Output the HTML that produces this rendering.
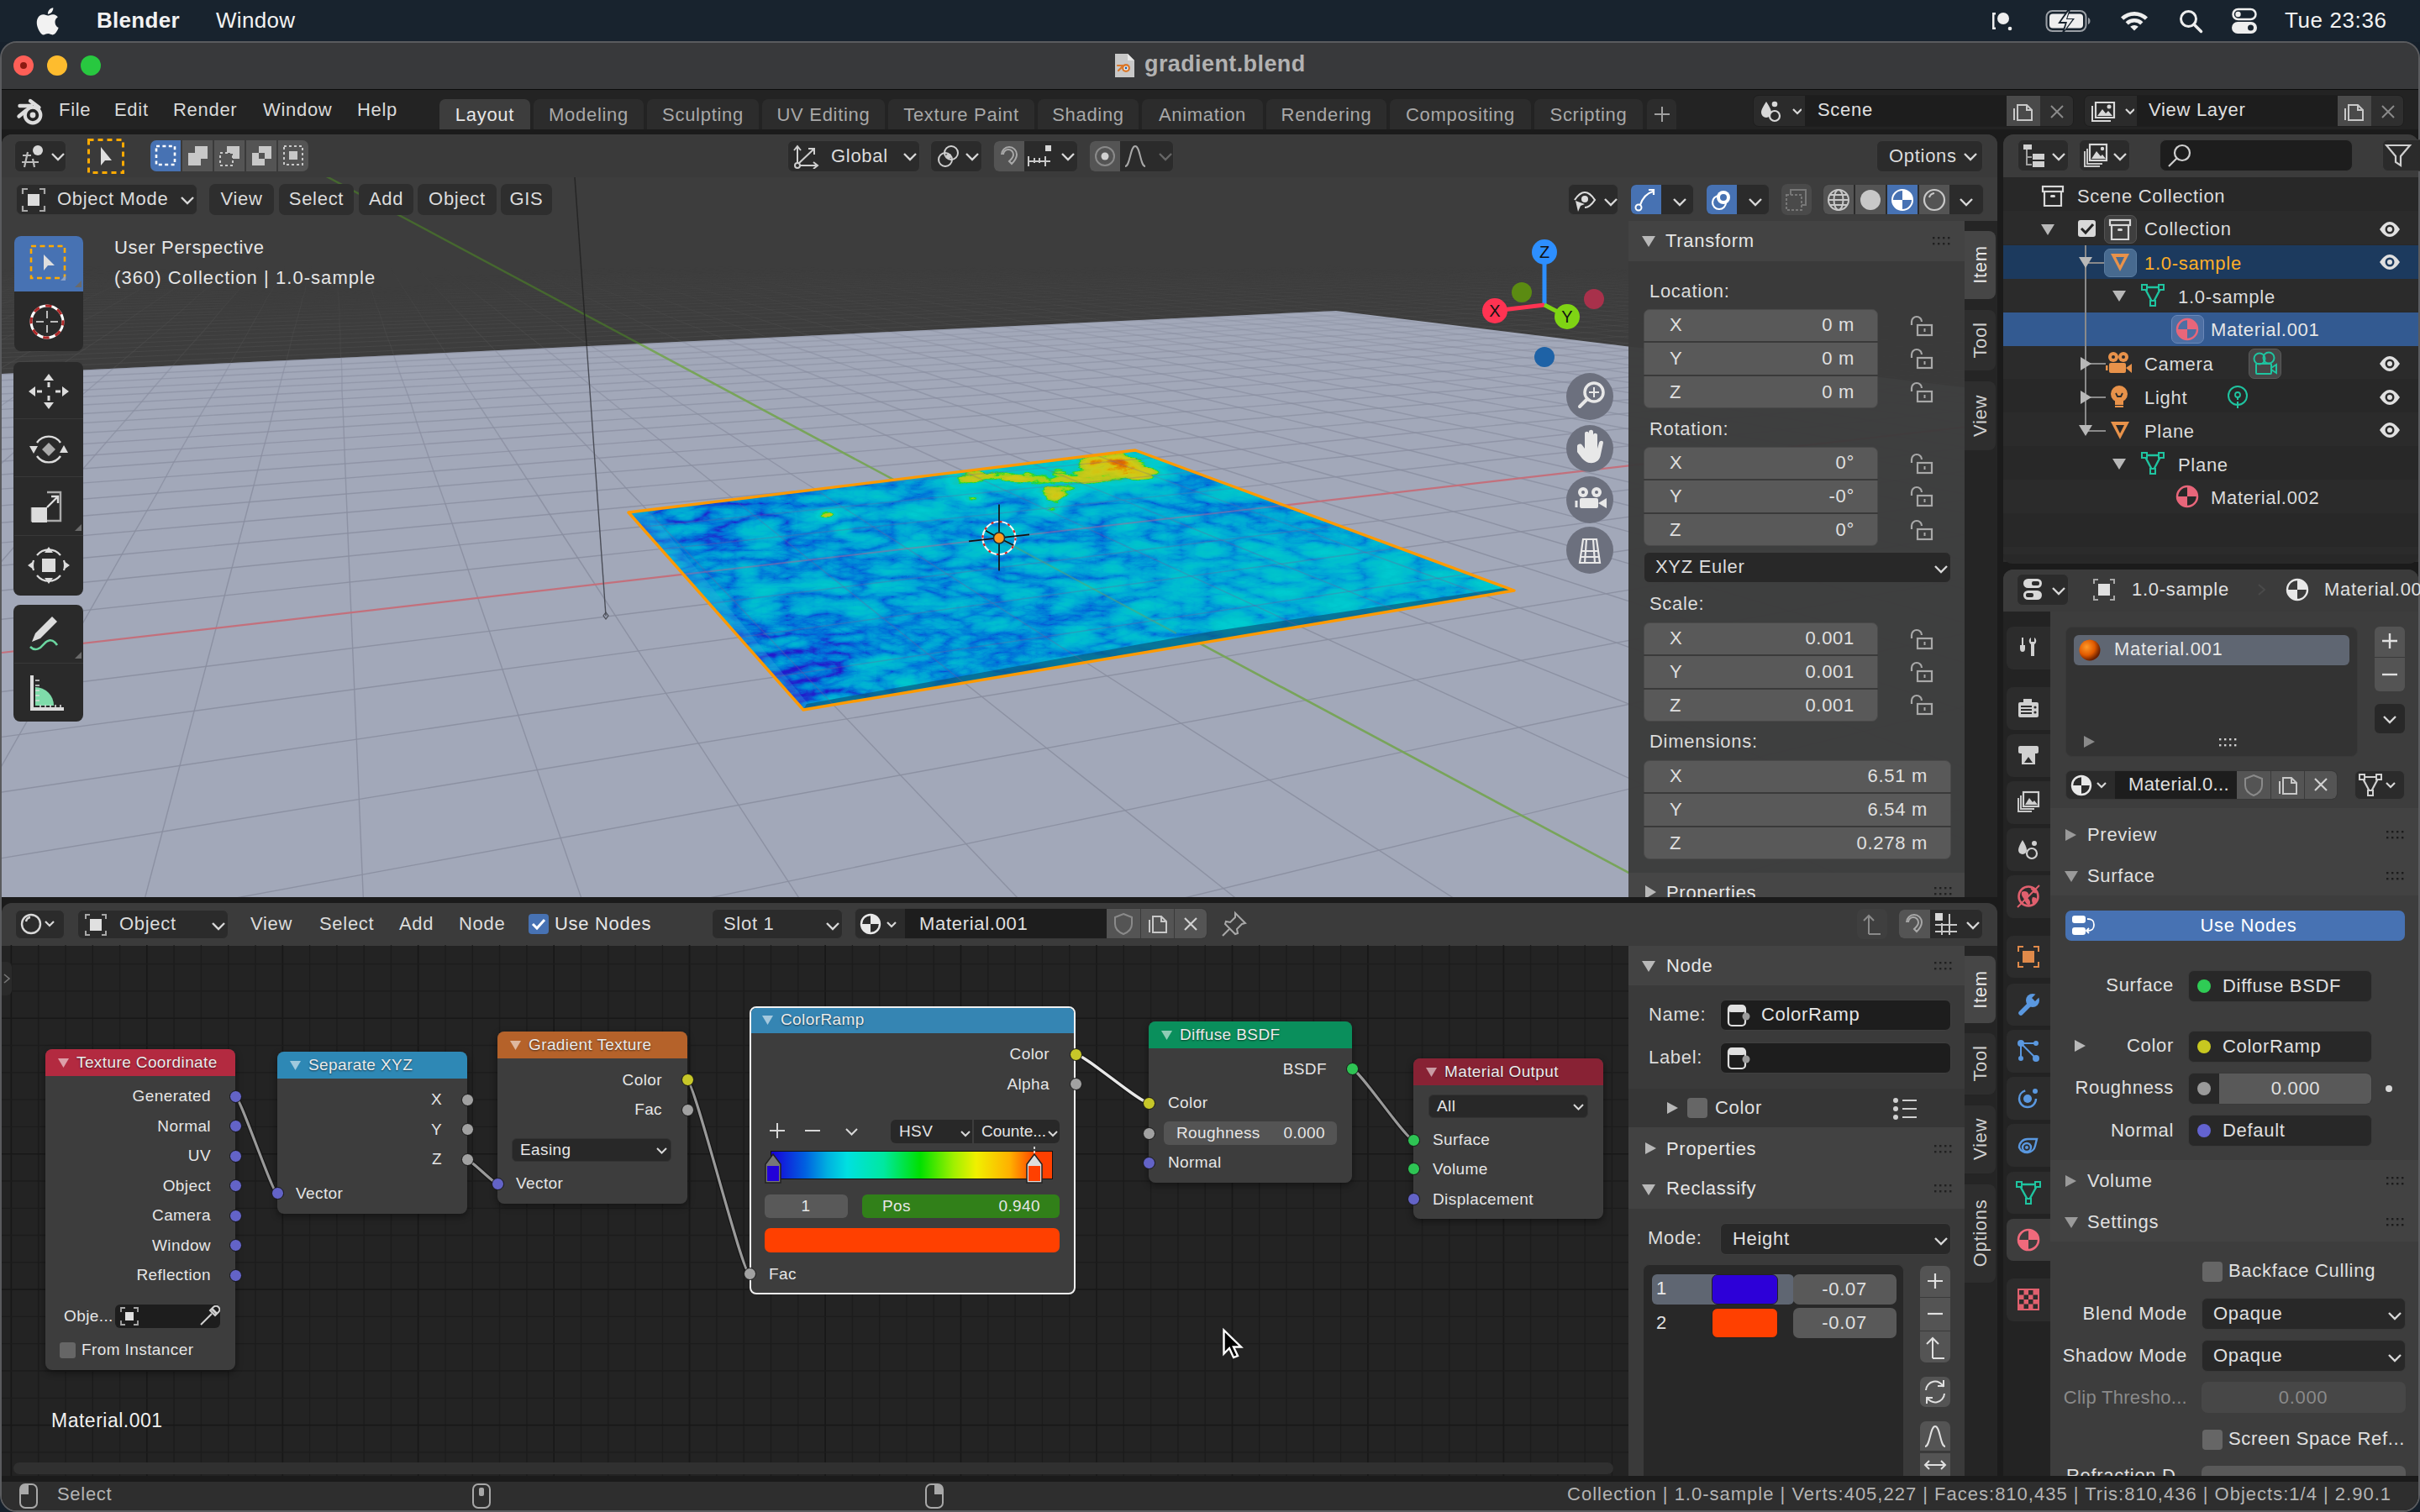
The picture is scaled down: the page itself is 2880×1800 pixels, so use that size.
<!DOCTYPE html><html><head><meta charset="utf-8"><style>
html,body{margin:0;padding:0;width:2880px;height:1800px;overflow:hidden;background:#16202b;}
body{position:relative;font-family:"Liberation Sans", sans-serif;}
div{position:absolute;box-sizing:border-box;}
.tx{white-space:nowrap;}
</style></head><body>
<div style="left:0px;top:0px;width:2880px;height:50px;background:#18232e;"></div>
<svg style="position:absolute;left:42px;top:6px;" width="32" height="38" viewBox="0 0 30 38"><path fill="#f2f2f2" d="M22.5 20.3c0-4 3.3-5.9 3.4-6-1.9-2.7-4.8-3.1-5.8-3.1-2.5-.3-4.8 1.4-6.1 1.4-1.3 0-3.2-1.4-5.3-1.3-2.7 0-5.2 1.6-6.6 4-2.8 4.9-.7 12.1 2 16.1 1.3 1.9 2.9 4.1 5 4 2-.1 2.8-1.3 5.2-1.3 2.4 0 3.1 1.3 5.2 1.3 2.2 0 3.6-2 4.9-3.9 1.5-2.2 2.2-4.4 2.2-4.5-.1 0-4.1-1.6-4.1-6.7zM18.6 8.5c1.1-1.4 1.9-3.3 1.7-5.2-1.6.1-3.6 1.1-4.7 2.4-1 1.2-1.9 3.1-1.7 5 1.8.1 3.6-.9 4.7-2.2z"/></svg>
<div class="tx" style="left:115px;top:4.0px;height:40px;line-height:40px;font-size:26px;color:#f2f2f2;letter-spacing:0.3px;font-weight:bold;">Blender</div>
<div class="tx" style="left:257px;top:4.0px;height:40px;line-height:40px;font-size:26px;color:#f2f2f2;letter-spacing:0.3px;">Window</div>
<svg style="position:absolute;left:2368px;top:10px;" width="30" height="30" viewBox="0 0 30 30"><path d="M3 5h4v2.5H5.5v15H7V25H3z" fill="#eee"/><circle cx="16" cy="12" r="7" fill="#eee"/><circle cx="24" cy="24" r="2.3" fill="#eee"/></svg>
<svg style="position:absolute;left:2434px;top:10px;" width="56" height="30" viewBox="0 0 56 30"><rect x="1.5" y="3" width="47" height="24" rx="7" fill="none" stroke="#9a9fa5" stroke-width="2"/><rect x="5" y="6.5" width="40" height="17" rx="4" fill="#eee"/><path d="M51 11v8c1.5-.5 2.5-2 2.5-4s-1-3.5-2.5-4z" fill="#9a9fa5"/><path d="M28 1 17 17h8l-4 12 12-16h-8l4-12z" fill="#18232e" stroke="#18232e" stroke-width="2"/><path d="M28 3 18.5 16h7.5l-3 10 9.5-13h-7.5z" fill="#eee"/></svg>
<svg style="position:absolute;left:2522px;top:10px;" width="36" height="30" viewBox="0 0 36 30"><path d="M2 10.5a23 23 0 0 1 32 0l-3.2 3.3a18.5 18.5 0 0 0-25.6 0z" fill="#eee"/><path d="M7.6 16.2a15 15 0 0 1 20.8 0l-3.2 3.2a10.5 10.5 0 0 0-14.4 0z" fill="#eee"/><path d="M13.2 21.8a7 7 0 0 1 9.6 0L18 26.6z" fill="#eee"/></svg>
<svg style="position:absolute;left:2592px;top:10px;" width="32" height="32" viewBox="0 0 32 32"><circle cx="12.5" cy="12.5" r="9" fill="none" stroke="#eee" stroke-width="3"/><path d="M19 19l8.5 8.5" stroke="#eee" stroke-width="3.5" stroke-linecap="round"/></svg>
<svg style="position:absolute;left:2656px;top:9px;" width="32" height="32" viewBox="0 0 32 32"><rect x="1.5" y="2" width="27" height="12" rx="6" fill="none" stroke="#eee" stroke-width="2.5"/><circle cx="7.5" cy="8" r="3.2" fill="#eee"/><rect x="0" y="17" width="30" height="14" rx="7" fill="#eee"/><circle cx="22.5" cy="24" r="3.5" fill="#18232e"/></svg>
<div class="tx" style="left:2719px;top:4.0px;height:40px;line-height:40px;font-size:26px;color:#f2f2f2;letter-spacing:0.6px;">Tue 23:36</div>
<div style="left:0px;top:49px;width:2880px;height:1751px;background:#3a3b3d;border-radius:20px 20px 20px 20px;border:2px solid #5a5b5e;"></div>
<div style="left:2px;top:51px;width:2876px;height:55px;background:#38393b;border-radius:18px 18px 0 0;"></div>
<div style="left:16px;top:66px;width:24px;height:24px;background:#fe5f57;border-radius:12px;"></div>
<div style="left:24px;top:74px;width:8px;height:8px;background:#8c1a10;border-radius:4px;"></div>
<div style="left:56px;top:66px;width:24px;height:24px;background:#febc2e;border-radius:12px;"></div>
<div style="left:96px;top:66px;width:24px;height:24px;background:#28c840;border-radius:12px;"></div>
<svg style="position:absolute;left:1327px;top:64px;" width="23" height="28" viewBox="0 0 23 28"><path d="M0 0h15l8 8v20H0z" fill="#c8c8c8"/><path d="M15 0v8h8z" fill="#e8e8e8"/><circle cx="13" cy="17" r="5" fill="#d9782b"/><circle cx="13" cy="17" r="2.6" fill="#fff"/><circle cx="13" cy="17" r="1.4" fill="#1e5aa0"/><path d="M3 14h8M4 20l5-5" stroke="#d9782b" stroke-width="2.2" stroke-linecap="round"/></svg>
<div class="tx" style="left:1362px;top:56.0px;height:40px;line-height:40px;font-size:27px;color:#b2b2b2;letter-spacing:0.4px;font-weight:bold;">gradient.blend</div>
<div style="left:2px;top:106px;width:2876px;height:1px;background:#0d0d0d;"></div>
<div style="left:2px;top:107px;width:2876px;height:47px;background:#232323;"></div>
<div style="left:2px;top:154px;width:2876px;height:1644px;background:#1b1b1b;border-radius:0 0 18px 18px;"></div>
<svg style="position:absolute;left:15px;top:112px;" width="40" height="40" viewBox="15 112 40 40"><circle cx="39" cy="137" r="9.3" fill="none" stroke="#dcdcdc" stroke-width="4.2"/><circle cx="39" cy="137" r="3.4" fill="#dcdcdc"/><path d="M36 120L46.5 128M23.5 126H37M22.5 138.5L31 131.5" stroke="#dcdcdc" stroke-width="4.4" stroke-linecap="round"/></svg>
<div class="tx" style="left:70px;top:111.0px;height:40px;line-height:40px;font-size:22px;color:#dadada;letter-spacing:0.7px;">File</div>
<div class="tx" style="left:136px;top:111.0px;height:40px;line-height:40px;font-size:22px;color:#dadada;letter-spacing:0.7px;">Edit</div>
<div class="tx" style="left:206px;top:111.0px;height:40px;line-height:40px;font-size:22px;color:#dadada;letter-spacing:0.7px;">Render</div>
<div class="tx" style="left:313px;top:111.0px;height:40px;line-height:40px;font-size:22px;color:#dadada;letter-spacing:0.7px;">Window</div>
<div class="tx" style="left:425px;top:111.0px;height:40px;line-height:40px;font-size:22px;color:#dadada;letter-spacing:0.7px;">Help</div>
<div style="left:523px;top:118px;width:108px;height:36px;background:#3d3d3d;border-radius:7px 7px 0 0;"></div>
<div class="tx" style="left:-423.0px;top:117.0px;height:40px;line-height:40px;font-size:22px;color:#e6e6e6;letter-spacing:0.7px;width:2000px;text-align:center;">Layout</div>
<div style="left:635px;top:118px;width:131px;height:36px;background:#2c2c2c;border-radius:7px 7px 0 0;"></div>
<div class="tx" style="left:-299.5px;top:117.0px;height:40px;line-height:40px;font-size:22px;color:#a8a8a8;letter-spacing:0.7px;width:2000px;text-align:center;">Modeling</div>
<div style="left:770px;top:118px;width:133px;height:36px;background:#2c2c2c;border-radius:7px 7px 0 0;"></div>
<div class="tx" style="left:-163.5px;top:117.0px;height:40px;line-height:40px;font-size:22px;color:#a8a8a8;letter-spacing:0.7px;width:2000px;text-align:center;">Sculpting</div>
<div style="left:907px;top:118px;width:146px;height:36px;background:#2c2c2c;border-radius:7px 7px 0 0;"></div>
<div class="tx" style="left:-20.0px;top:117.0px;height:40px;line-height:40px;font-size:22px;color:#a8a8a8;letter-spacing:0.7px;width:2000px;text-align:center;">UV Editing</div>
<div style="left:1057px;top:118px;width:174px;height:36px;background:#2c2c2c;border-radius:7px 7px 0 0;"></div>
<div class="tx" style="left:144.0px;top:117.0px;height:40px;line-height:40px;font-size:22px;color:#a8a8a8;letter-spacing:0.7px;width:2000px;text-align:center;">Texture Paint</div>
<div style="left:1235px;top:118px;width:120px;height:36px;background:#2c2c2c;border-radius:7px 7px 0 0;"></div>
<div class="tx" style="left:295.0px;top:117.0px;height:40px;line-height:40px;font-size:22px;color:#a8a8a8;letter-spacing:0.7px;width:2000px;text-align:center;">Shading</div>
<div style="left:1359px;top:118px;width:144px;height:36px;background:#2c2c2c;border-radius:7px 7px 0 0;"></div>
<div class="tx" style="left:431.0px;top:117.0px;height:40px;line-height:40px;font-size:22px;color:#a8a8a8;letter-spacing:0.7px;width:2000px;text-align:center;">Animation</div>
<div style="left:1507px;top:118px;width:143px;height:36px;background:#2c2c2c;border-radius:7px 7px 0 0;"></div>
<div class="tx" style="left:578.5px;top:117.0px;height:40px;line-height:40px;font-size:22px;color:#a8a8a8;letter-spacing:0.7px;width:2000px;text-align:center;">Rendering</div>
<div style="left:1654px;top:118px;width:168px;height:36px;background:#2c2c2c;border-radius:7px 7px 0 0;"></div>
<div class="tx" style="left:738.0px;top:117.0px;height:40px;line-height:40px;font-size:22px;color:#a8a8a8;letter-spacing:0.7px;width:2000px;text-align:center;">Compositing</div>
<div style="left:1826px;top:118px;width:129px;height:36px;background:#2c2c2c;border-radius:7px 7px 0 0;"></div>
<div class="tx" style="left:890.5px;top:117.0px;height:40px;line-height:40px;font-size:22px;color:#a8a8a8;letter-spacing:0.7px;width:2000px;text-align:center;">Scripting</div>
<div style="left:1960px;top:118px;width:35px;height:36px;background:#2c2c2c;border-radius:7px 7px 0 0;"></div>
<svg style="position:absolute;left:1966px;top:124px;" width="24" height="24" viewBox="0 0 24 24"><path d="M12 3v18M3 12h18" stroke="#a0a0a0" stroke-width="2"/></svg>
<div style="left:2086px;top:113px;width:382px;height:38px;background:#2b2b2b;border-radius:7px;border:1px solid #1e1e1e;"></div>
<div style="left:2148px;top:114px;width:240px;height:36px;background:#1d1d1d;"></div>
<div style="left:2388px;top:114px;width:40px;height:36px;background:#4a4a4a;"></div>
<div style="left:2428px;top:114px;width:39px;height:36px;background:#2f2f2f;border-radius:0 6px 6px 0;"></div>
<svg style="position:absolute;left:2094px;top:118px;" width="50" height="30" viewBox="0 0 50 30"><path d="M8 3c-3 5-6 9-6 13a6 6 0 0 0 12 0c0-4-3-8-6-13z" fill="#d8d8d8"/><circle cx="18" cy="6" r="3.3" fill="#d8d8d8"/><circle cx="18" cy="20" r="6" fill="#2b2b2b" stroke="#d8d8d8" stroke-width="2.2"/><path d="M40 12l5 5 5-5" fill="none" stroke="#d8d8d8" stroke-width="2.2"/></svg>
<div class="tx" style="left:2163px;top:111.0px;height:40px;line-height:40px;font-size:22px;color:#e0e0e0;letter-spacing:0.7px;">Scene</div>
<svg style="position:absolute;left:2394px;top:119px;" width="30" height="26" viewBox="0 0 30 26"><path d="M7 6h11l6 6v12H7z" fill="none" stroke="#c8c8c8" stroke-width="2"/><path d="M3 10v14" stroke="#c8c8c8" stroke-width="2"/><path d="M18 6v6h6" fill="none" stroke="#c8c8c8" stroke-width="2"/></svg>
<svg style="position:absolute;left:2436px;top:121px;" width="24" height="24" viewBox="0 0 24 24"><path d="M5 5l14 14M19 5L5 19" stroke="#8a8a8a" stroke-width="2"/></svg>
<div style="left:2480px;top:113px;width:381px;height:38px;background:#2b2b2b;border-radius:7px;border:1px solid #1e1e1e;"></div>
<div style="left:2543px;top:114px;width:239px;height:36px;background:#1d1d1d;"></div>
<div style="left:2782px;top:114px;width:40px;height:36px;background:#4a4a4a;"></div>
<div style="left:2822px;top:114px;width:38px;height:36px;background:#2f2f2f;border-radius:0 6px 6px 0;"></div>
<svg style="position:absolute;left:2488px;top:118px;" width="52" height="30" viewBox="0 0 52 30"><path d="M2 8v18h22" fill="none" stroke="#d8d8d8" stroke-width="2"/><path d="M6 4v18h22V4z" fill="none" stroke="#d8d8d8" stroke-width="2.2"/><path d="M8 20l6-8 4 5 3-3 5 6z" fill="#d8d8d8"/><circle cx="22" cy="9" r="2.5" fill="#d8d8d8"/><path d="M42 12l5 5 5-5" fill="none" stroke="#d8d8d8" stroke-width="2.2"/></svg>
<div class="tx" style="left:2557px;top:111.0px;height:40px;line-height:40px;font-size:22px;color:#e0e0e0;letter-spacing:0.7px;">View Layer</div>
<svg style="position:absolute;left:2788px;top:119px;" width="30" height="26" viewBox="0 0 30 26"><path d="M7 6h11l6 6v12H7z" fill="none" stroke="#c8c8c8" stroke-width="2"/><path d="M3 10v14" stroke="#c8c8c8" stroke-width="2"/><path d="M18 6v6h6" fill="none" stroke="#c8c8c8" stroke-width="2"/></svg>
<svg style="position:absolute;left:2830px;top:121px;" width="24" height="24" viewBox="0 0 24 24"><path d="M5 5l14 14M19 5L5 19" stroke="#8a8a8a" stroke-width="2"/></svg>
<div style="left:2px;top:160px;width:2375px;height:908px;background:#3d3d3d;border-radius:12px 12px 0 0;"></div>
<svg style="position:absolute;left:0px;top:0px;clip-path:inset(211px 0 12px 2px);" width="2400" height="1080" viewBox="0 0 2400 1080"><defs>
<clipPath id="cg"><polygon points="2,445 1590,370 2377,466 2377,1068 2,1068"/></clipPath>
<clipPath id="cd"><path d="M2,160H2377V466L1590,370L2,445Z"/></clipPath>
<clipPath id="ct"><polygon points="748,610 1351,536 1802,703 956,845"/></clipPath>
<filter id="nz" x="0" y="0" width="100%" height="100%"><feTurbulence type="fractalNoise" baseFrequency="0.018 0.05" numOctaves="4" seed="7"/><feColorMatrix type="matrix" values="0 0 0 0 0.05  0 0 0 0 0.25  0 0 0 0 0.85  2.6 0 0 0 -1.15"/></filter>
<filter id="nz2" x="0" y="0" width="100%" height="100%"><feTurbulence type="fractalNoise" baseFrequency="0.03 0.08" numOctaves="3" seed="3"/><feColorMatrix type="matrix" values="0 0 0 0 0.0  0 0 0 0 0.82  0 0 0 0 0.85  0 2.4 0 0 -1.25"/></filter>
<filter id="bl6"><feGaussianBlur stdDeviation="6"/></filter>
<filter id="bl12"><feGaussianBlur stdDeviation="14"/></filter>
</defs>
<polygon points="2,445 1590,370 2377,466 2377,1068 2,1068" fill="#a2a8b9"/>
<g stroke="#505050" stroke-width="1.2" clip-path="url(#cd)"><line x1="2497" y1="322" x2="2600" y2="327" stroke-opacity="0.05"/><line x1="2386" y1="317" x2="2583" y2="328" stroke-opacity="0.05"/><line x1="2369" y1="318" x2="2463" y2="323" stroke-opacity="0.05"/><line x1="2463" y1="323" x2="2565" y2="328" stroke-opacity="0.10"/><line x1="2351" y1="319" x2="2445" y2="324" stroke-opacity="0.05"/><line x1="2445" y1="324" x2="2548" y2="329" stroke-opacity="0.10"/><line x1="2334" y1="320" x2="2427" y2="325" stroke-opacity="0.05"/><line x1="2427" y1="325" x2="2529" y2="330" stroke-opacity="0.10"/><line x1="2315" y1="320" x2="2408" y2="325" stroke-opacity="0.05"/><line x1="2408" y1="325" x2="2511" y2="331" stroke-opacity="0.10"/><line x1="2297" y1="321" x2="2390" y2="326" stroke-opacity="0.05"/><line x1="2390" y1="326" x2="2492" y2="332" stroke-opacity="0.10"/><line x1="2492" y1="332" x2="2606" y2="338" stroke-opacity="0.15"/><line x1="2194" y1="317" x2="2371" y2="327" stroke-opacity="0.05"/><line x1="2371" y1="327" x2="2473" y2="333" stroke-opacity="0.10"/><line x1="2473" y1="333" x2="2586" y2="339" stroke-opacity="0.15"/><line x1="2175" y1="318" x2="2352" y2="328" stroke-opacity="0.05"/><line x1="2352" y1="328" x2="2454" y2="334" stroke-opacity="0.10"/><line x1="2454" y1="334" x2="2567" y2="340" stroke-opacity="0.15"/><line x1="2156" y1="319" x2="2240" y2="323" stroke-opacity="0.05"/><line x1="2240" y1="323" x2="2434" y2="335" stroke-opacity="0.10"/><line x1="2434" y1="335" x2="2547" y2="341" stroke-opacity="0.15"/><line x1="2137" y1="319" x2="2221" y2="324" stroke-opacity="0.05"/><line x1="2221" y1="324" x2="2312" y2="330" stroke-opacity="0.10"/><line x1="2312" y1="330" x2="2527" y2="343" stroke-opacity="0.15"/><line x1="2118" y1="320" x2="2201" y2="325" stroke-opacity="0.05"/><line x1="2201" y1="325" x2="2292" y2="331" stroke-opacity="0.10"/><line x1="2292" y1="331" x2="2394" y2="337" stroke-opacity="0.15"/><line x1="2394" y1="337" x2="2506" y2="344" stroke-opacity="0.20"/><line x1="2098" y1="321" x2="2181" y2="326" stroke-opacity="0.05"/><line x1="2181" y1="326" x2="2272" y2="332" stroke-opacity="0.10"/><line x1="2272" y1="332" x2="2373" y2="338" stroke-opacity="0.15"/><line x1="2373" y1="338" x2="2486" y2="345" stroke-opacity="0.20"/><line x1="2486" y1="345" x2="2612" y2="353" stroke-opacity="0.25"/><line x1="2078" y1="321" x2="2160" y2="327" stroke-opacity="0.05"/><line x1="2160" y1="327" x2="2251" y2="332" stroke-opacity="0.10"/><line x1="2251" y1="332" x2="2352" y2="339" stroke-opacity="0.15"/><line x1="2352" y1="339" x2="2464" y2="346" stroke-opacity="0.20"/><line x1="2464" y1="346" x2="2590" y2="354" stroke-opacity="0.25"/><line x1="1983" y1="317" x2="2140" y2="328" stroke-opacity="0.05"/><line x1="2140" y1="328" x2="2230" y2="333" stroke-opacity="0.10"/><line x1="2230" y1="333" x2="2331" y2="340" stroke-opacity="0.15"/><line x1="2331" y1="340" x2="2443" y2="347" stroke-opacity="0.20"/><line x1="2443" y1="347" x2="2569" y2="355" stroke-opacity="0.25"/><line x1="1963" y1="318" x2="2037" y2="323" stroke-opacity="0.05"/><line x1="2037" y1="323" x2="2209" y2="334" stroke-opacity="0.10"/><line x1="2209" y1="334" x2="2309" y2="341" stroke-opacity="0.15"/><line x1="2309" y1="341" x2="2421" y2="348" stroke-opacity="0.20"/><line x1="2421" y1="348" x2="2547" y2="356" stroke-opacity="0.25"/><line x1="1942" y1="319" x2="2016" y2="324" stroke-opacity="0.05"/><line x1="2016" y1="324" x2="2097" y2="329" stroke-opacity="0.10"/><line x1="2097" y1="329" x2="2287" y2="342" stroke-opacity="0.15"/><line x1="2287" y1="342" x2="2398" y2="349" stroke-opacity="0.20"/><line x1="2398" y1="349" x2="2524" y2="358" stroke-opacity="0.25"/><line x1="1921" y1="320" x2="1995" y2="325" stroke-opacity="0.05"/><line x1="1995" y1="325" x2="2076" y2="330" stroke-opacity="0.10"/><line x1="2076" y1="330" x2="2165" y2="336" stroke-opacity="0.15"/><line x1="2165" y1="336" x2="2376" y2="351" stroke-opacity="0.20"/><line x1="2376" y1="351" x2="2501" y2="359" stroke-opacity="0.25"/><line x1="1900" y1="320" x2="1973" y2="325" stroke-opacity="0.05"/><line x1="1973" y1="325" x2="2053" y2="331" stroke-opacity="0.10"/><line x1="2053" y1="331" x2="2142" y2="337" stroke-opacity="0.15"/><line x1="2142" y1="337" x2="2241" y2="344" stroke-opacity="0.20"/><line x1="2241" y1="344" x2="2478" y2="361" stroke-opacity="0.25"/><line x1="2478" y1="361" x2="2620" y2="371" stroke-opacity="0.30"/><line x1="1879" y1="321" x2="1951" y2="326" stroke-opacity="0.05"/><line x1="1951" y1="326" x2="2031" y2="332" stroke-opacity="0.10"/><line x1="2031" y1="332" x2="2120" y2="338" stroke-opacity="0.15"/><line x1="2120" y1="338" x2="2218" y2="345" stroke-opacity="0.20"/><line x1="2218" y1="345" x2="2329" y2="353" stroke-opacity="0.25"/><line x1="2329" y1="353" x2="2596" y2="372" stroke-opacity="0.30"/><line x1="1792" y1="317" x2="1929" y2="327" stroke-opacity="0.05"/><line x1="1929" y1="327" x2="2008" y2="333" stroke-opacity="0.10"/><line x1="2008" y1="333" x2="2096" y2="339" stroke-opacity="0.15"/><line x1="2096" y1="339" x2="2194" y2="346" stroke-opacity="0.20"/><line x1="2194" y1="346" x2="2305" y2="354" stroke-opacity="0.25"/><line x1="2305" y1="354" x2="2429" y2="364" stroke-opacity="0.30"/><line x1="2429" y1="364" x2="2571" y2="374" stroke-opacity="0.35"/><line x1="1770" y1="318" x2="1907" y2="328" stroke-opacity="0.05"/><line x1="1907" y1="328" x2="1985" y2="334" stroke-opacity="0.10"/><line x1="1985" y1="334" x2="2073" y2="340" stroke-opacity="0.15"/><line x1="2073" y1="340" x2="2170" y2="348" stroke-opacity="0.20"/><line x1="2170" y1="348" x2="2280" y2="356" stroke-opacity="0.25"/><line x1="2280" y1="356" x2="2404" y2="365" stroke-opacity="0.30"/><line x1="2404" y1="365" x2="2546" y2="376" stroke-opacity="0.35"/><line x1="1749" y1="318" x2="1813" y2="323" stroke-opacity="0.05"/><line x1="1813" y1="323" x2="1962" y2="335" stroke-opacity="0.10"/><line x1="1962" y1="335" x2="2049" y2="341" stroke-opacity="0.15"/><line x1="2049" y1="341" x2="2146" y2="349" stroke-opacity="0.20"/><line x1="2146" y1="349" x2="2255" y2="357" stroke-opacity="0.25"/><line x1="2255" y1="357" x2="2379" y2="367" stroke-opacity="0.30"/><line x1="2379" y1="367" x2="2520" y2="377" stroke-opacity="0.35"/><line x1="1727" y1="319" x2="1790" y2="324" stroke-opacity="0.05"/><line x1="1790" y1="324" x2="1860" y2="330" stroke-opacity="0.10"/><line x1="1860" y1="330" x2="2024" y2="342" stroke-opacity="0.15"/><line x1="2024" y1="342" x2="2121" y2="350" stroke-opacity="0.20"/><line x1="2121" y1="350" x2="2230" y2="358" stroke-opacity="0.25"/><line x1="2230" y1="358" x2="2353" y2="368" stroke-opacity="0.30"/><line x1="2353" y1="368" x2="2494" y2="379" stroke-opacity="0.35"/><line x1="2494" y1="379" x2="2657" y2="392" stroke-opacity="0.40"/><line x1="1704" y1="320" x2="1767" y2="325" stroke-opacity="0.05"/><line x1="1767" y1="325" x2="1837" y2="331" stroke-opacity="0.10"/><line x1="1837" y1="331" x2="1914" y2="337" stroke-opacity="0.15"/><line x1="1914" y1="337" x2="2095" y2="351" stroke-opacity="0.20"/><line x1="2095" y1="351" x2="2204" y2="360" stroke-opacity="0.25"/><line x1="2204" y1="360" x2="2326" y2="370" stroke-opacity="0.30"/><line x1="2326" y1="370" x2="2467" y2="381" stroke-opacity="0.35"/><line x1="2467" y1="381" x2="2630" y2="394" stroke-opacity="0.40"/><line x1="1681" y1="321" x2="1744" y2="326" stroke-opacity="0.05"/><line x1="1744" y1="326" x2="1813" y2="331" stroke-opacity="0.10"/><line x1="1813" y1="331" x2="1889" y2="338" stroke-opacity="0.15"/><line x1="1889" y1="338" x2="1974" y2="345" stroke-opacity="0.20"/><line x1="1974" y1="345" x2="2177" y2="361" stroke-opacity="0.25"/><line x1="2177" y1="361" x2="2299" y2="371" stroke-opacity="0.30"/><line x1="2299" y1="371" x2="2440" y2="383" stroke-opacity="0.35"/><line x1="2440" y1="383" x2="2602" y2="396" stroke-opacity="0.40"/><line x1="1658" y1="321" x2="1720" y2="327" stroke-opacity="0.05"/><line x1="1720" y1="327" x2="1789" y2="332" stroke-opacity="0.10"/><line x1="1789" y1="332" x2="1864" y2="339" stroke-opacity="0.15"/><line x1="1864" y1="339" x2="1948" y2="346" stroke-opacity="0.20"/><line x1="1948" y1="346" x2="2043" y2="354" stroke-opacity="0.25"/><line x1="2043" y1="354" x2="2272" y2="373" stroke-opacity="0.30"/><line x1="2272" y1="373" x2="2412" y2="385" stroke-opacity="0.35"/><line x1="2412" y1="385" x2="2574" y2="398" stroke-opacity="0.40"/><line x1="1579" y1="317" x2="1696" y2="327" stroke-opacity="0.05"/><line x1="1696" y1="327" x2="1764" y2="333" stroke-opacity="0.10"/><line x1="1764" y1="333" x2="1839" y2="340" stroke-opacity="0.15"/><line x1="1839" y1="340" x2="1922" y2="347" stroke-opacity="0.20"/><line x1="1922" y1="347" x2="2016" y2="355" stroke-opacity="0.25"/><line x1="2016" y1="355" x2="2122" y2="364" stroke-opacity="0.30"/><line x1="2122" y1="364" x2="2383" y2="387" stroke-opacity="0.35"/><line x1="2383" y1="387" x2="2545" y2="401" stroke-opacity="0.40"/><line x1="1556" y1="318" x2="1611" y2="323" stroke-opacity="0.05"/><line x1="1611" y1="323" x2="1739" y2="334" stroke-opacity="0.10"/><line x1="1739" y1="334" x2="1813" y2="341" stroke-opacity="0.15"/><line x1="1813" y1="341" x2="1896" y2="348" stroke-opacity="0.20"/><line x1="1896" y1="348" x2="1989" y2="356" stroke-opacity="0.25"/><line x1="1989" y1="356" x2="2094" y2="366" stroke-opacity="0.30"/><line x1="2094" y1="366" x2="2215" y2="376" stroke-opacity="0.35"/><line x1="2215" y1="376" x2="2515" y2="403" stroke-opacity="0.40"/><line x1="1533" y1="319" x2="1587" y2="324" stroke-opacity="0.05"/><line x1="1587" y1="324" x2="1647" y2="329" stroke-opacity="0.10"/><line x1="1647" y1="329" x2="1786" y2="342" stroke-opacity="0.15"/><line x1="1786" y1="342" x2="1868" y2="349" stroke-opacity="0.20"/><line x1="1868" y1="349" x2="1961" y2="358" stroke-opacity="0.25"/><line x1="1961" y1="358" x2="2065" y2="367" stroke-opacity="0.30"/><line x1="2065" y1="367" x2="2185" y2="378" stroke-opacity="0.35"/><line x1="2185" y1="378" x2="2323" y2="391" stroke-opacity="0.40"/><line x1="2323" y1="391" x2="2676" y2="423" stroke-opacity="0.45"/><line x1="1509" y1="320" x2="1563" y2="325" stroke-opacity="0.05"/><line x1="1563" y1="325" x2="1622" y2="330" stroke-opacity="0.10"/><line x1="1622" y1="330" x2="1687" y2="336" stroke-opacity="0.15"/><line x1="1687" y1="336" x2="1841" y2="351" stroke-opacity="0.20"/><line x1="1841" y1="351" x2="1932" y2="359" stroke-opacity="0.25"/><line x1="1932" y1="359" x2="2036" y2="369" stroke-opacity="0.30"/><line x1="2036" y1="369" x2="2155" y2="380" stroke-opacity="0.35"/><line x1="2155" y1="380" x2="2293" y2="393" stroke-opacity="0.40"/><line x1="2293" y1="393" x2="2453" y2="408" stroke-opacity="0.45"/><line x1="2453" y1="408" x2="2644" y2="426" stroke-opacity="0.50"/><line x1="1485" y1="320" x2="1538" y2="325" stroke-opacity="0.05"/><line x1="1538" y1="325" x2="1596" y2="331" stroke-opacity="0.10"/><line x1="1596" y1="331" x2="1661" y2="337" stroke-opacity="0.15"/><line x1="1661" y1="337" x2="1732" y2="344" stroke-opacity="0.20"/><line x1="1732" y1="344" x2="1903" y2="361" stroke-opacity="0.25"/><line x1="1903" y1="361" x2="2006" y2="370" stroke-opacity="0.30"/><line x1="2006" y1="370" x2="2124" y2="382" stroke-opacity="0.35"/><line x1="2124" y1="382" x2="2261" y2="395" stroke-opacity="0.40"/><line x1="2261" y1="395" x2="2421" y2="411" stroke-opacity="0.45"/><line x1="2421" y1="411" x2="2612" y2="429" stroke-opacity="0.50"/><line x1="1461" y1="321" x2="1513" y2="326" stroke-opacity="0.05"/><line x1="1513" y1="326" x2="1570" y2="332" stroke-opacity="0.10"/><line x1="1570" y1="332" x2="1634" y2="338" stroke-opacity="0.15"/><line x1="1634" y1="338" x2="1705" y2="345" stroke-opacity="0.20"/><line x1="1705" y1="345" x2="1784" y2="353" stroke-opacity="0.25"/><line x1="1784" y1="353" x2="1976" y2="372" stroke-opacity="0.30"/><line x1="1976" y1="372" x2="2093" y2="384" stroke-opacity="0.35"/><line x1="2093" y1="384" x2="2229" y2="397" stroke-opacity="0.40"/><line x1="2229" y1="397" x2="2388" y2="413" stroke-opacity="0.45"/><line x1="2388" y1="413" x2="2578" y2="432" stroke-opacity="0.50"/><line x1="1436" y1="322" x2="1488" y2="327" stroke-opacity="0.05"/><line x1="1488" y1="327" x2="1544" y2="333" stroke-opacity="0.10"/><line x1="1544" y1="333" x2="1607" y2="339" stroke-opacity="0.15"/><line x1="1607" y1="339" x2="1676" y2="346" stroke-opacity="0.20"/><line x1="1676" y1="346" x2="1755" y2="354" stroke-opacity="0.25"/><line x1="1755" y1="354" x2="1843" y2="363" stroke-opacity="0.30"/><line x1="1843" y1="363" x2="2060" y2="386" stroke-opacity="0.35"/><line x1="2060" y1="386" x2="2195" y2="400" stroke-opacity="0.40"/><line x1="2195" y1="400" x2="2354" y2="416" stroke-opacity="0.45"/><line x1="2354" y1="416" x2="2544" y2="435" stroke-opacity="0.50"/><line x1="1366" y1="318" x2="1462" y2="328" stroke-opacity="0.05"/><line x1="1462" y1="328" x2="1517" y2="334" stroke-opacity="0.10"/><line x1="1517" y1="334" x2="1579" y2="340" stroke-opacity="0.15"/><line x1="1579" y1="340" x2="1648" y2="348" stroke-opacity="0.20"/><line x1="1648" y1="348" x2="1725" y2="356" stroke-opacity="0.25"/><line x1="1725" y1="356" x2="1813" y2="365" stroke-opacity="0.30"/><line x1="1813" y1="365" x2="1912" y2="376" stroke-opacity="0.35"/><line x1="1912" y1="376" x2="2161" y2="402" stroke-opacity="0.40"/><line x1="2161" y1="402" x2="2319" y2="419" stroke-opacity="0.45"/><line x1="2319" y1="419" x2="2508" y2="439" stroke-opacity="0.50"/><line x1="1341" y1="318" x2="1386" y2="323" stroke-opacity="0.05"/><line x1="1386" y1="323" x2="1490" y2="335" stroke-opacity="0.10"/><line x1="1490" y1="335" x2="1551" y2="341" stroke-opacity="0.15"/><line x1="1551" y1="341" x2="1618" y2="349" stroke-opacity="0.20"/><line x1="1618" y1="349" x2="1695" y2="357" stroke-opacity="0.25"/><line x1="1695" y1="357" x2="1781" y2="366" stroke-opacity="0.30"/><line x1="1781" y1="366" x2="1880" y2="377" stroke-opacity="0.35"/><line x1="1880" y1="377" x2="2127" y2="404" stroke-opacity="0.40"/><line x1="2127" y1="404" x2="2284" y2="421" stroke-opacity="0.45"/><line x1="2284" y1="421" x2="2472" y2="442" stroke-opacity="0.50"/><line x1="2472" y1="442" x2="2702" y2="467" stroke-opacity="0.55"/><line x1="1316" y1="319" x2="1360" y2="324" stroke-opacity="0.05"/><line x1="1360" y1="324" x2="1409" y2="330" stroke-opacity="0.10"/><line x1="1409" y1="330" x2="1522" y2="342" stroke-opacity="0.15"/><line x1="1522" y1="342" x2="1589" y2="350" stroke-opacity="0.20"/><line x1="1589" y1="350" x2="1664" y2="358" stroke-opacity="0.25"/><line x1="1664" y1="358" x2="1749" y2="368" stroke-opacity="0.30"/><line x1="1749" y1="368" x2="1846" y2="379" stroke-opacity="0.35"/><line x1="1846" y1="379" x2="1959" y2="392" stroke-opacity="0.40"/><line x1="1959" y1="392" x2="2247" y2="424" stroke-opacity="0.45"/><line x1="2247" y1="424" x2="2434" y2="445" stroke-opacity="0.50"/><line x1="2434" y1="445" x2="2664" y2="471" stroke-opacity="0.55"/><line x1="1291" y1="320" x2="1334" y2="325" stroke-opacity="0.05"/><line x1="1334" y1="325" x2="1382" y2="331" stroke-opacity="0.10"/><line x1="1382" y1="331" x2="1434" y2="337" stroke-opacity="0.15"/><line x1="1434" y1="337" x2="1558" y2="351" stroke-opacity="0.20"/><line x1="1558" y1="351" x2="1632" y2="360" stroke-opacity="0.25"/><line x1="1632" y1="360" x2="1716" y2="370" stroke-opacity="0.30"/><line x1="1716" y1="370" x2="1812" y2="381" stroke-opacity="0.35"/><line x1="1812" y1="381" x2="1924" y2="394" stroke-opacity="0.40"/><line x1="1924" y1="394" x2="2054" y2="409" stroke-opacity="0.45"/><line x1="2054" y1="409" x2="2395" y2="449" stroke-opacity="0.50"/><line x1="2395" y1="449" x2="2625" y2="476" stroke-opacity="0.55"/><line x1="1265" y1="321" x2="1307" y2="326" stroke-opacity="0.05"/><line x1="1307" y1="326" x2="1354" y2="331" stroke-opacity="0.10"/><line x1="1354" y1="331" x2="1406" y2="338" stroke-opacity="0.15"/><line x1="1406" y1="338" x2="1463" y2="345" stroke-opacity="0.20"/><line x1="1463" y1="345" x2="1600" y2="361" stroke-opacity="0.25"/><line x1="1600" y1="361" x2="1683" y2="371" stroke-opacity="0.30"/><line x1="1683" y1="371" x2="1778" y2="383" stroke-opacity="0.35"/><line x1="1778" y1="383" x2="1887" y2="396" stroke-opacity="0.40"/><line x1="1887" y1="396" x2="2016" y2="412" stroke-opacity="0.45"/><line x1="2016" y1="412" x2="2170" y2="430" stroke-opacity="0.50"/><line x1="2170" y1="430" x2="2584" y2="481" stroke-opacity="0.55"/><line x1="1239" y1="321" x2="1281" y2="327" stroke-opacity="0.05"/><line x1="1281" y1="327" x2="1326" y2="332" stroke-opacity="0.10"/><line x1="1326" y1="332" x2="1377" y2="339" stroke-opacity="0.15"/><line x1="1377" y1="339" x2="1433" y2="346" stroke-opacity="0.20"/><line x1="1433" y1="346" x2="1496" y2="354" stroke-opacity="0.25"/><line x1="1496" y1="354" x2="1649" y2="373" stroke-opacity="0.30"/><line x1="1649" y1="373" x2="1742" y2="385" stroke-opacity="0.35"/><line x1="1742" y1="385" x2="1850" y2="398" stroke-opacity="0.40"/><line x1="1850" y1="398" x2="1978" y2="414" stroke-opacity="0.45"/><line x1="1978" y1="414" x2="2130" y2="434" stroke-opacity="0.50"/><line x1="2130" y1="434" x2="2542" y2="485" stroke-opacity="0.55"/><line x1="1176" y1="317" x2="1253" y2="327" stroke-opacity="0.05"/><line x1="1253" y1="327" x2="1298" y2="333" stroke-opacity="0.10"/><line x1="1298" y1="333" x2="1347" y2="340" stroke-opacity="0.15"/><line x1="1347" y1="340" x2="1402" y2="347" stroke-opacity="0.20"/><line x1="1402" y1="347" x2="1464" y2="355" stroke-opacity="0.25"/><line x1="1464" y1="355" x2="1534" y2="364" stroke-opacity="0.30"/><line x1="1534" y1="364" x2="1705" y2="387" stroke-opacity="0.35"/><line x1="1705" y1="387" x2="1812" y2="401" stroke-opacity="0.40"/><line x1="1812" y1="401" x2="1938" y2="417" stroke-opacity="0.45"/><line x1="1938" y1="417" x2="2088" y2="437" stroke-opacity="0.50"/><line x1="2088" y1="437" x2="2788" y2="528" stroke-opacity="0.55"/><line x1="1150" y1="318" x2="1186" y2="323" stroke-opacity="0.05"/><line x1="1186" y1="323" x2="1269" y2="334" stroke-opacity="0.10"/><line x1="1269" y1="334" x2="1317" y2="341" stroke-opacity="0.15"/><line x1="1317" y1="341" x2="1371" y2="348" stroke-opacity="0.20"/><line x1="1371" y1="348" x2="1431" y2="356" stroke-opacity="0.25"/><line x1="1431" y1="356" x2="1500" y2="366" stroke-opacity="0.30"/><line x1="1500" y1="366" x2="1578" y2="376" stroke-opacity="0.35"/><line x1="1578" y1="376" x2="1773" y2="403" stroke-opacity="0.40"/><line x1="1773" y1="403" x2="1897" y2="420" stroke-opacity="0.45"/><line x1="1897" y1="420" x2="2046" y2="440" stroke-opacity="0.50"/><line x1="2046" y1="440" x2="2743" y2="535" stroke-opacity="0.55"/><line x1="1124" y1="319" x2="1159" y2="324" stroke-opacity="0.05"/><line x1="1159" y1="324" x2="1197" y2="329" stroke-opacity="0.10"/><line x1="1197" y1="329" x2="1286" y2="342" stroke-opacity="0.15"/><line x1="1286" y1="342" x2="1339" y2="349" stroke-opacity="0.20"/><line x1="1339" y1="349" x2="1398" y2="358" stroke-opacity="0.25"/><line x1="1398" y1="358" x2="1465" y2="367" stroke-opacity="0.30"/><line x1="1465" y1="367" x2="1541" y2="378" stroke-opacity="0.35"/><line x1="1541" y1="378" x2="1630" y2="391" stroke-opacity="0.40"/><line x1="1630" y1="391" x2="1855" y2="423" stroke-opacity="0.45"/><line x1="1855" y1="423" x2="2002" y2="444" stroke-opacity="0.50"/><line x1="2002" y1="444" x2="2695" y2="542" stroke-opacity="0.55"/><line x1="1098" y1="320" x2="1131" y2="325" stroke-opacity="0.05"/><line x1="1131" y1="325" x2="1169" y2="330" stroke-opacity="0.10"/><line x1="1169" y1="330" x2="1210" y2="336" stroke-opacity="0.15"/><line x1="1210" y1="336" x2="1306" y2="351" stroke-opacity="0.20"/><line x1="1306" y1="351" x2="1364" y2="359" stroke-opacity="0.25"/><line x1="1364" y1="359" x2="1429" y2="369" stroke-opacity="0.30"/><line x1="1429" y1="369" x2="1504" y2="380" stroke-opacity="0.35"/><line x1="1504" y1="380" x2="1591" y2="393" stroke-opacity="0.40"/><line x1="1591" y1="393" x2="1692" y2="408" stroke-opacity="0.45"/><line x1="1692" y1="408" x2="1957" y2="447" stroke-opacity="0.50"/><line x1="1957" y1="447" x2="2646" y2="550" stroke-opacity="0.55"/><line x1="1071" y1="320" x2="1103" y2="325" stroke-opacity="0.05"/><line x1="1103" y1="325" x2="1139" y2="331" stroke-opacity="0.10"/><line x1="1139" y1="331" x2="1179" y2="337" stroke-opacity="0.15"/><line x1="1179" y1="337" x2="1224" y2="344" stroke-opacity="0.20"/><line x1="1224" y1="344" x2="1329" y2="360" stroke-opacity="0.25"/><line x1="1329" y1="360" x2="1393" y2="370" stroke-opacity="0.30"/><line x1="1393" y1="370" x2="1466" y2="382" stroke-opacity="0.35"/><line x1="1466" y1="382" x2="1551" y2="395" stroke-opacity="0.40"/><line x1="1551" y1="395" x2="1650" y2="410" stroke-opacity="0.45"/><line x1="1650" y1="410" x2="1768" y2="429" stroke-opacity="0.50"/><line x1="1768" y1="429" x2="2594" y2="557" stroke-opacity="0.55"/><line x1="1044" y1="321" x2="1075" y2="326" stroke-opacity="0.05"/><line x1="1075" y1="326" x2="1110" y2="332" stroke-opacity="0.10"/><line x1="1110" y1="332" x2="1148" y2="338" stroke-opacity="0.15"/><line x1="1148" y1="338" x2="1191" y2="345" stroke-opacity="0.20"/><line x1="1191" y1="345" x2="1240" y2="353" stroke-opacity="0.25"/><line x1="1240" y1="353" x2="1356" y2="372" stroke-opacity="0.30"/><line x1="1356" y1="372" x2="1427" y2="384" stroke-opacity="0.35"/><line x1="1427" y1="384" x2="1510" y2="397" stroke-opacity="0.40"/><line x1="1510" y1="397" x2="1606" y2="413" stroke-opacity="0.45"/><line x1="1606" y1="413" x2="1722" y2="432" stroke-opacity="0.50"/><line x1="1722" y1="432" x2="2539" y2="565" stroke-opacity="0.55"/><line x1="1016" y1="322" x2="1046" y2="327" stroke-opacity="0.05"/><line x1="1046" y1="327" x2="1080" y2="333" stroke-opacity="0.10"/><line x1="1080" y1="333" x2="1117" y2="339" stroke-opacity="0.15"/><line x1="1117" y1="339" x2="1159" y2="346" stroke-opacity="0.20"/><line x1="1159" y1="346" x2="1205" y2="354" stroke-opacity="0.25"/><line x1="1205" y1="354" x2="1258" y2="363" stroke-opacity="0.30"/><line x1="1258" y1="363" x2="1387" y2="386" stroke-opacity="0.35"/><line x1="1387" y1="386" x2="1467" y2="399" stroke-opacity="0.40"/><line x1="1467" y1="399" x2="1562" y2="416" stroke-opacity="0.45"/><line x1="1562" y1="416" x2="1675" y2="435" stroke-opacity="0.50"/><line x1="1675" y1="435" x2="2873" y2="641" stroke-opacity="0.55"/><line x1="961" y1="318" x2="1017" y2="328" stroke-opacity="0.05"/><line x1="1017" y1="328" x2="1049" y2="334" stroke-opacity="0.10"/><line x1="1049" y1="334" x2="1085" y2="340" stroke-opacity="0.15"/><line x1="1085" y1="340" x2="1125" y2="347" stroke-opacity="0.20"/><line x1="1125" y1="347" x2="1170" y2="356" stroke-opacity="0.25"/><line x1="1170" y1="356" x2="1221" y2="365" stroke-opacity="0.30"/><line x1="1221" y1="365" x2="1346" y2="388" stroke-opacity="0.35"/><line x1="1346" y1="388" x2="1424" y2="402" stroke-opacity="0.40"/><line x1="1424" y1="402" x2="1516" y2="418" stroke-opacity="0.45"/><line x1="1516" y1="418" x2="1626" y2="438" stroke-opacity="0.50"/><line x1="1626" y1="438" x2="2814" y2="654" stroke-opacity="0.55"/><line x1="934" y1="318" x2="959" y2="323" stroke-opacity="0.05"/><line x1="959" y1="323" x2="1018" y2="335" stroke-opacity="0.10"/><line x1="1018" y1="335" x2="1053" y2="341" stroke-opacity="0.15"/><line x1="1053" y1="341" x2="1091" y2="349" stroke-opacity="0.20"/><line x1="1091" y1="349" x2="1135" y2="357" stroke-opacity="0.25"/><line x1="1135" y1="357" x2="1184" y2="366" stroke-opacity="0.30"/><line x1="1184" y1="366" x2="1240" y2="377" stroke-opacity="0.35"/><line x1="1240" y1="377" x2="1380" y2="404" stroke-opacity="0.40"/><line x1="1380" y1="404" x2="1469" y2="421" stroke-opacity="0.45"/><line x1="1469" y1="421" x2="1576" y2="442" stroke-opacity="0.50"/><line x1="1576" y1="442" x2="2750" y2="667" stroke-opacity="0.55"/><line x1="906" y1="319" x2="930" y2="324" stroke-opacity="0.05"/><line x1="930" y1="324" x2="957" y2="330" stroke-opacity="0.10"/><line x1="957" y1="330" x2="1020" y2="342" stroke-opacity="0.15"/><line x1="1020" y1="342" x2="1057" y2="350" stroke-opacity="0.20"/><line x1="1057" y1="350" x2="1098" y2="358" stroke-opacity="0.25"/><line x1="1098" y1="358" x2="1146" y2="368" stroke-opacity="0.30"/><line x1="1146" y1="368" x2="1199" y2="379" stroke-opacity="0.35"/><line x1="1199" y1="379" x2="1262" y2="392" stroke-opacity="0.40"/><line x1="1262" y1="392" x2="1421" y2="424" stroke-opacity="0.45"/><line x1="1421" y1="424" x2="1525" y2="445" stroke-opacity="0.50"/><line x1="1525" y1="445" x2="2683" y2="681" stroke-opacity="0.55"/><line x1="878" y1="320" x2="901" y2="325" stroke-opacity="0.05"/><line x1="901" y1="325" x2="927" y2="330" stroke-opacity="0.10"/><line x1="927" y1="330" x2="955" y2="337" stroke-opacity="0.15"/><line x1="955" y1="337" x2="1022" y2="351" stroke-opacity="0.20"/><line x1="1022" y1="351" x2="1061" y2="360" stroke-opacity="0.25"/><line x1="1061" y1="360" x2="1106" y2="370" stroke-opacity="0.30"/><line x1="1106" y1="370" x2="1158" y2="381" stroke-opacity="0.35"/><line x1="1158" y1="381" x2="1218" y2="394" stroke-opacity="0.40"/><line x1="1218" y1="394" x2="1288" y2="409" stroke-opacity="0.45"/><line x1="1288" y1="409" x2="1472" y2="449" stroke-opacity="0.50"/><line x1="1472" y1="449" x2="2611" y2="697" stroke-opacity="0.55"/><line x1="849" y1="321" x2="871" y2="326" stroke-opacity="0.05"/><line x1="871" y1="326" x2="895" y2="331" stroke-opacity="0.10"/><line x1="895" y1="331" x2="922" y2="338" stroke-opacity="0.15"/><line x1="922" y1="338" x2="952" y2="345" stroke-opacity="0.20"/><line x1="952" y1="345" x2="1024" y2="361" stroke-opacity="0.25"/><line x1="1024" y1="361" x2="1067" y2="371" stroke-opacity="0.30"/><line x1="1067" y1="371" x2="1116" y2="383" stroke-opacity="0.35"/><line x1="1116" y1="383" x2="1173" y2="396" stroke-opacity="0.40"/><line x1="1173" y1="396" x2="1240" y2="412" stroke-opacity="0.45"/><line x1="1240" y1="412" x2="1320" y2="430" stroke-opacity="0.50"/><line x1="1320" y1="430" x2="2534" y2="713" stroke-opacity="0.55"/><line x1="820" y1="321" x2="841" y2="327" stroke-opacity="0.05"/><line x1="841" y1="327" x2="864" y2="332" stroke-opacity="0.10"/><line x1="864" y1="332" x2="889" y2="339" stroke-opacity="0.15"/><line x1="889" y1="339" x2="917" y2="346" stroke-opacity="0.20"/><line x1="917" y1="346" x2="949" y2="354" stroke-opacity="0.25"/><line x1="949" y1="354" x2="1026" y2="373" stroke-opacity="0.30"/><line x1="1026" y1="373" x2="1073" y2="385" stroke-opacity="0.35"/><line x1="1073" y1="385" x2="1127" y2="398" stroke-opacity="0.40"/><line x1="1127" y1="398" x2="1191" y2="414" stroke-opacity="0.45"/><line x1="1191" y1="414" x2="1267" y2="433" stroke-opacity="0.50"/><line x1="1267" y1="433" x2="3055" y2="881" stroke-opacity="0.55"/><line x1="773" y1="317" x2="810" y2="327" stroke-opacity="0.05"/><line x1="810" y1="327" x2="832" y2="333" stroke-opacity="0.10"/><line x1="832" y1="333" x2="856" y2="340" stroke-opacity="0.15"/><line x1="856" y1="340" x2="882" y2="347" stroke-opacity="0.20"/><line x1="882" y1="347" x2="912" y2="355" stroke-opacity="0.25"/><line x1="912" y1="355" x2="946" y2="364" stroke-opacity="0.30"/><line x1="946" y1="364" x2="1029" y2="387" stroke-opacity="0.35"/><line x1="1029" y1="387" x2="1080" y2="401" stroke-opacity="0.40"/><line x1="1080" y1="401" x2="1141" y2="417" stroke-opacity="0.45"/><line x1="1141" y1="417" x2="1213" y2="437" stroke-opacity="0.50"/><line x1="1213" y1="437" x2="2968" y2="912" stroke-opacity="0.55"/><line x1="745" y1="318" x2="761" y2="323" stroke-opacity="0.05"/><line x1="761" y1="323" x2="799" y2="334" stroke-opacity="0.10"/><line x1="799" y1="334" x2="821" y2="341" stroke-opacity="0.15"/><line x1="821" y1="341" x2="846" y2="348" stroke-opacity="0.20"/><line x1="846" y1="348" x2="874" y2="356" stroke-opacity="0.25"/><line x1="874" y1="356" x2="906" y2="366" stroke-opacity="0.30"/><line x1="906" y1="366" x2="942" y2="376" stroke-opacity="0.35"/><line x1="942" y1="376" x2="1032" y2="403" stroke-opacity="0.40"/><line x1="1032" y1="403" x2="1089" y2="420" stroke-opacity="0.45"/><line x1="1089" y1="420" x2="1157" y2="440" stroke-opacity="0.50"/><line x1="1157" y1="440" x2="2873" y2="947" stroke-opacity="0.55"/><line x1="716" y1="319" x2="731" y2="324" stroke-opacity="0.05"/><line x1="731" y1="324" x2="748" y2="329" stroke-opacity="0.10"/><line x1="748" y1="329" x2="787" y2="342" stroke-opacity="0.15"/><line x1="787" y1="342" x2="810" y2="349" stroke-opacity="0.20"/><line x1="810" y1="349" x2="835" y2="358" stroke-opacity="0.25"/><line x1="835" y1="358" x2="865" y2="367" stroke-opacity="0.30"/><line x1="865" y1="367" x2="898" y2="378" stroke-opacity="0.35"/><line x1="898" y1="378" x2="937" y2="391" stroke-opacity="0.40"/><line x1="937" y1="391" x2="1036" y2="423" stroke-opacity="0.45"/><line x1="1036" y1="423" x2="1100" y2="443" stroke-opacity="0.50"/><line x1="1100" y1="443" x2="2768" y2="985" stroke-opacity="0.55"/><line x1="686" y1="319" x2="700" y2="324" stroke-opacity="0.05"/><line x1="700" y1="324" x2="715" y2="330" stroke-opacity="0.10"/><line x1="715" y1="330" x2="732" y2="336" stroke-opacity="0.15"/><line x1="732" y1="336" x2="772" y2="350" stroke-opacity="0.20"/><line x1="772" y1="350" x2="796" y2="359" stroke-opacity="0.25"/><line x1="796" y1="359" x2="823" y2="369" stroke-opacity="0.30"/><line x1="823" y1="369" x2="854" y2="380" stroke-opacity="0.35"/><line x1="854" y1="380" x2="890" y2="393" stroke-opacity="0.40"/><line x1="890" y1="393" x2="931" y2="408" stroke-opacity="0.45"/><line x1="931" y1="408" x2="1040" y2="447" stroke-opacity="0.50"/><line x1="1040" y1="447" x2="2651" y2="1027" stroke-opacity="0.55"/><line x1="656" y1="320" x2="669" y2="325" stroke-opacity="0.05"/><line x1="669" y1="325" x2="683" y2="331" stroke-opacity="0.10"/><line x1="683" y1="331" x2="698" y2="337" stroke-opacity="0.15"/><line x1="698" y1="337" x2="715" y2="344" stroke-opacity="0.20"/><line x1="715" y1="344" x2="756" y2="360" stroke-opacity="0.25"/><line x1="756" y1="360" x2="780" y2="370" stroke-opacity="0.30"/><line x1="780" y1="370" x2="808" y2="382" stroke-opacity="0.35"/><line x1="808" y1="382" x2="841" y2="395" stroke-opacity="0.40"/><line x1="841" y1="395" x2="879" y2="410" stroke-opacity="0.45"/><line x1="879" y1="410" x2="924" y2="429" stroke-opacity="0.50"/><line x1="924" y1="429" x2="2521" y2="1074" stroke-opacity="0.55"/><line x1="626" y1="321" x2="637" y2="326" stroke-opacity="0.05"/><line x1="637" y1="326" x2="650" y2="332" stroke-opacity="0.10"/><line x1="650" y1="332" x2="663" y2="338" stroke-opacity="0.15"/><line x1="663" y1="338" x2="679" y2="345" stroke-opacity="0.20"/><line x1="679" y1="345" x2="696" y2="353" stroke-opacity="0.25"/><line x1="696" y1="353" x2="737" y2="372" stroke-opacity="0.30"/><line x1="737" y1="372" x2="762" y2="384" stroke-opacity="0.35"/><line x1="762" y1="384" x2="791" y2="397" stroke-opacity="0.40"/><line x1="791" y1="397" x2="825" y2="413" stroke-opacity="0.45"/><line x1="825" y1="413" x2="866" y2="432" stroke-opacity="0.50"/><line x1="866" y1="432" x2="2375" y2="1127" stroke-opacity="0.55"/><line x1="557" y1="318" x2="573" y2="328" stroke-opacity="0.05"/><line x1="573" y1="328" x2="582" y2="334" stroke-opacity="0.10"/><line x1="582" y1="334" x2="592" y2="340" stroke-opacity="0.15"/><line x1="592" y1="340" x2="603" y2="347" stroke-opacity="0.20"/><line x1="603" y1="347" x2="616" y2="356" stroke-opacity="0.25"/><line x1="616" y1="356" x2="630" y2="365" stroke-opacity="0.30"/><line x1="630" y1="365" x2="666" y2="387" stroke-opacity="0.35"/><line x1="666" y1="387" x2="688" y2="402" stroke-opacity="0.40"/><line x1="688" y1="402" x2="714" y2="418" stroke-opacity="0.45"/><line x1="714" y1="418" x2="745" y2="438" stroke-opacity="0.50"/><line x1="745" y1="438" x2="2021" y2="1256" stroke-opacity="0.55"/><line x1="527" y1="318" x2="533" y2="323" stroke-opacity="0.05"/><line x1="533" y1="323" x2="547" y2="335" stroke-opacity="0.10"/><line x1="547" y1="335" x2="555" y2="341" stroke-opacity="0.15"/><line x1="555" y1="341" x2="565" y2="349" stroke-opacity="0.20"/><line x1="565" y1="349" x2="575" y2="357" stroke-opacity="0.25"/><line x1="575" y1="357" x2="587" y2="366" stroke-opacity="0.30"/><line x1="587" y1="366" x2="600" y2="377" stroke-opacity="0.35"/><line x1="600" y1="377" x2="634" y2="404" stroke-opacity="0.40"/><line x1="634" y1="404" x2="656" y2="421" stroke-opacity="0.45"/><line x1="656" y1="421" x2="682" y2="442" stroke-opacity="0.50"/><line x1="682" y1="442" x2="1804" y2="1334" stroke-opacity="0.55"/><line x1="496" y1="319" x2="501" y2="324" stroke-opacity="0.05"/><line x1="501" y1="324" x2="506" y2="330" stroke-opacity="0.10"/><line x1="506" y1="330" x2="518" y2="342" stroke-opacity="0.15"/><line x1="518" y1="342" x2="525" y2="350" stroke-opacity="0.20"/><line x1="525" y1="350" x2="533" y2="358" stroke-opacity="0.25"/><line x1="533" y1="358" x2="542" y2="368" stroke-opacity="0.30"/><line x1="542" y1="368" x2="553" y2="379" stroke-opacity="0.35"/><line x1="553" y1="379" x2="565" y2="392" stroke-opacity="0.40"/><line x1="565" y1="392" x2="596" y2="424" stroke-opacity="0.45"/><line x1="596" y1="424" x2="616" y2="445" stroke-opacity="0.50"/><line x1="616" y1="445" x2="1551" y2="1426" stroke-opacity="0.55"/><line x1="465" y1="320" x2="468" y2="325" stroke-opacity="0.05"/><line x1="468" y1="325" x2="472" y2="330" stroke-opacity="0.10"/><line x1="472" y1="330" x2="476" y2="337" stroke-opacity="0.15"/><line x1="476" y1="337" x2="485" y2="351" stroke-opacity="0.20"/><line x1="485" y1="351" x2="491" y2="360" stroke-opacity="0.25"/><line x1="491" y1="360" x2="497" y2="369" stroke-opacity="0.30"/><line x1="497" y1="369" x2="504" y2="381" stroke-opacity="0.35"/><line x1="504" y1="381" x2="513" y2="394" stroke-opacity="0.40"/><line x1="513" y1="394" x2="523" y2="409" stroke-opacity="0.45"/><line x1="523" y1="409" x2="549" y2="449" stroke-opacity="0.50"/><line x1="549" y1="449" x2="1253" y2="1534" stroke-opacity="0.55"/><line x1="433" y1="321" x2="435" y2="326" stroke-opacity="0.05"/><line x1="435" y1="326" x2="437" y2="331" stroke-opacity="0.10"/><line x1="437" y1="331" x2="439" y2="338" stroke-opacity="0.15"/><line x1="439" y1="338" x2="442" y2="345" stroke-opacity="0.20"/><line x1="442" y1="345" x2="447" y2="361" stroke-opacity="0.25"/><line x1="447" y1="361" x2="451" y2="371" stroke-opacity="0.30"/><line x1="451" y1="371" x2="455" y2="383" stroke-opacity="0.35"/><line x1="455" y1="383" x2="459" y2="396" stroke-opacity="0.40"/><line x1="459" y1="396" x2="465" y2="412" stroke-opacity="0.45"/><line x1="465" y1="412" x2="471" y2="430" stroke-opacity="0.50"/><line x1="471" y1="430" x2="897" y2="1663" stroke-opacity="0.55"/><line x1="401" y1="321" x2="402" y2="327" stroke-opacity="0.05"/><line x1="402" y1="327" x2="402" y2="332" stroke-opacity="0.10"/><line x1="402" y1="332" x2="402" y2="339" stroke-opacity="0.15"/><line x1="402" y1="339" x2="402" y2="346" stroke-opacity="0.20"/><line x1="402" y1="346" x2="403" y2="354" stroke-opacity="0.25"/><line x1="403" y1="354" x2="404" y2="373" stroke-opacity="0.30"/><line x1="404" y1="373" x2="404" y2="385" stroke-opacity="0.35"/><line x1="404" y1="385" x2="405" y2="398" stroke-opacity="0.40"/><line x1="405" y1="398" x2="405" y2="414" stroke-opacity="0.45"/><line x1="405" y1="414" x2="406" y2="433" stroke-opacity="0.50"/><line x1="406" y1="433" x2="436" y2="1155" stroke-opacity="0.55"/><line x1="370" y1="317" x2="368" y2="327" stroke-opacity="0.05"/><line x1="368" y1="327" x2="366" y2="333" stroke-opacity="0.10"/><line x1="366" y1="333" x2="364" y2="340" stroke-opacity="0.15"/><line x1="364" y1="340" x2="363" y2="347" stroke-opacity="0.20"/><line x1="363" y1="347" x2="360" y2="355" stroke-opacity="0.25"/><line x1="360" y1="355" x2="358" y2="364" stroke-opacity="0.30"/><line x1="358" y1="364" x2="352" y2="386" stroke-opacity="0.35"/><line x1="352" y1="386" x2="348" y2="400" stroke-opacity="0.40"/><line x1="348" y1="400" x2="344" y2="417" stroke-opacity="0.45"/><line x1="344" y1="417" x2="339" y2="436" stroke-opacity="0.50"/><line x1="339" y1="436" x2="133" y2="1219" stroke-opacity="0.55"/><line x1="339" y1="318" x2="336" y2="323" stroke-opacity="0.05"/><line x1="336" y1="323" x2="330" y2="334" stroke-opacity="0.10"/><line x1="330" y1="334" x2="326" y2="341" stroke-opacity="0.15"/><line x1="326" y1="341" x2="322" y2="348" stroke-opacity="0.20"/><line x1="322" y1="348" x2="317" y2="356" stroke-opacity="0.25"/><line x1="317" y1="356" x2="312" y2="366" stroke-opacity="0.30"/><line x1="312" y1="366" x2="306" y2="376" stroke-opacity="0.35"/><line x1="306" y1="376" x2="291" y2="403" stroke-opacity="0.40"/><line x1="291" y1="403" x2="281" y2="420" stroke-opacity="0.45"/><line x1="281" y1="420" x2="270" y2="440" stroke-opacity="0.50"/><line x1="270" y1="440" x2="-213" y2="1292" stroke-opacity="0.55"/><line x1="307" y1="319" x2="303" y2="324" stroke-opacity="0.05"/><line x1="303" y1="324" x2="298" y2="329" stroke-opacity="0.10"/><line x1="298" y1="329" x2="287" y2="342" stroke-opacity="0.15"/><line x1="287" y1="342" x2="281" y2="349" stroke-opacity="0.20"/><line x1="281" y1="349" x2="273" y2="358" stroke-opacity="0.25"/><line x1="273" y1="358" x2="265" y2="367" stroke-opacity="0.30"/><line x1="265" y1="367" x2="256" y2="378" stroke-opacity="0.35"/><line x1="256" y1="378" x2="245" y2="391" stroke-opacity="0.40"/><line x1="245" y1="391" x2="217" y2="422" stroke-opacity="0.45"/><line x1="217" y1="422" x2="199" y2="443" stroke-opacity="0.50"/><line x1="199" y1="443" x2="-103" y2="789" stroke-opacity="0.55"/><line x1="275" y1="319" x2="269" y2="324" stroke-opacity="0.05"/><line x1="269" y1="324" x2="263" y2="330" stroke-opacity="0.10"/><line x1="263" y1="330" x2="255" y2="336" stroke-opacity="0.15"/><line x1="255" y1="336" x2="238" y2="350" stroke-opacity="0.20"/><line x1="238" y1="350" x2="228" y2="359" stroke-opacity="0.25"/><line x1="228" y1="359" x2="217" y2="369" stroke-opacity="0.30"/><line x1="217" y1="369" x2="204" y2="380" stroke-opacity="0.35"/><line x1="204" y1="380" x2="189" y2="393" stroke-opacity="0.40"/><line x1="189" y1="393" x2="171" y2="408" stroke-opacity="0.45"/><line x1="171" y1="408" x2="125" y2="447" stroke-opacity="0.50"/><line x1="125" y1="447" x2="-62" y2="607" stroke-opacity="0.55"/><line x1="242" y1="320" x2="235" y2="325" stroke-opacity="0.05"/><line x1="235" y1="325" x2="226" y2="331" stroke-opacity="0.10"/><line x1="226" y1="331" x2="217" y2="337" stroke-opacity="0.15"/><line x1="217" y1="337" x2="207" y2="344" stroke-opacity="0.20"/><line x1="207" y1="344" x2="183" y2="360" stroke-opacity="0.25"/><line x1="183" y1="360" x2="168" y2="370" stroke-opacity="0.30"/><line x1="168" y1="370" x2="151" y2="382" stroke-opacity="0.35"/><line x1="151" y1="382" x2="132" y2="395" stroke-opacity="0.40"/><line x1="132" y1="395" x2="109" y2="410" stroke-opacity="0.45"/><line x1="109" y1="410" x2="82" y2="428" stroke-opacity="0.50"/><line x1="82" y1="428" x2="-108" y2="557" stroke-opacity="0.55"/><line x1="209" y1="321" x2="200" y2="326" stroke-opacity="0.05"/><line x1="200" y1="326" x2="190" y2="332" stroke-opacity="0.10"/><line x1="190" y1="332" x2="178" y2="338" stroke-opacity="0.15"/><line x1="178" y1="338" x2="166" y2="345" stroke-opacity="0.20"/><line x1="166" y1="345" x2="152" y2="353" stroke-opacity="0.25"/><line x1="152" y1="353" x2="118" y2="372" stroke-opacity="0.30"/><line x1="118" y1="372" x2="97" y2="383" stroke-opacity="0.35"/><line x1="97" y1="383" x2="73" y2="397" stroke-opacity="0.40"/><line x1="73" y1="397" x2="45" y2="413" stroke-opacity="0.45"/><line x1="45" y1="413" x2="12" y2="432" stroke-opacity="0.50"/><line x1="12" y1="432" x2="-79" y2="482" stroke-opacity="0.55"/><line x1="175" y1="322" x2="164" y2="327" stroke-opacity="0.05"/><line x1="164" y1="327" x2="152" y2="333" stroke-opacity="0.10"/><line x1="152" y1="333" x2="139" y2="339" stroke-opacity="0.15"/><line x1="139" y1="339" x2="124" y2="346" stroke-opacity="0.20"/><line x1="124" y1="346" x2="107" y2="354" stroke-opacity="0.25"/><line x1="107" y1="354" x2="67" y2="374" stroke-opacity="0.30"/><line x1="67" y1="374" x2="42" y2="385" stroke-opacity="0.35"/><line x1="42" y1="385" x2="13" y2="399" stroke-opacity="0.40"/><line x1="13" y1="399" x2="-20" y2="415" stroke-opacity="0.45"/><line x1="-20" y1="415" x2="-61" y2="435" stroke-opacity="0.50"/><line x1="153" y1="318" x2="128" y2="328" stroke-opacity="0.05"/><line x1="128" y1="328" x2="114" y2="334" stroke-opacity="0.10"/><line x1="114" y1="334" x2="99" y2="340" stroke-opacity="0.15"/><line x1="99" y1="340" x2="82" y2="347" stroke-opacity="0.20"/><line x1="82" y1="347" x2="62" y2="356" stroke-opacity="0.25"/><line x1="62" y1="356" x2="40" y2="365" stroke-opacity="0.30"/><line x1="40" y1="365" x2="-14" y2="387" stroke-opacity="0.35"/><line x1="-14" y1="387" x2="-48" y2="402" stroke-opacity="0.40"/><line x1="-48" y1="402" x2="-88" y2="418" stroke-opacity="0.45"/><line x1="120" y1="318" x2="106" y2="323" stroke-opacity="0.05"/><line x1="106" y1="323" x2="76" y2="335" stroke-opacity="0.10"/><line x1="76" y1="335" x2="58" y2="341" stroke-opacity="0.15"/><line x1="58" y1="341" x2="38" y2="349" stroke-opacity="0.20"/><line x1="38" y1="349" x2="16" y2="357" stroke-opacity="0.25"/><line x1="16" y1="357" x2="-10" y2="366" stroke-opacity="0.30"/><line x1="-10" y1="366" x2="-39" y2="377" stroke-opacity="0.35"/><line x1="-39" y1="377" x2="-72" y2="389" stroke-opacity="0.40"/><line x1="86" y1="319" x2="71" y2="324" stroke-opacity="0.05"/><line x1="71" y1="324" x2="55" y2="329" stroke-opacity="0.10"/><line x1="55" y1="329" x2="17" y2="342" stroke-opacity="0.15"/><line x1="17" y1="342" x2="-6" y2="350" stroke-opacity="0.20"/><line x1="-6" y1="350" x2="-31" y2="358" stroke-opacity="0.25"/><line x1="-31" y1="358" x2="-60" y2="368" stroke-opacity="0.30"/><line x1="52" y1="320" x2="36" y2="325" stroke-opacity="0.05"/><line x1="36" y1="325" x2="17" y2="330" stroke-opacity="0.10"/><line x1="17" y1="330" x2="-3" y2="337" stroke-opacity="0.15"/><line x1="-3" y1="337" x2="-51" y2="351" stroke-opacity="0.20"/><line x1="18" y1="321" x2="-1" y2="326" stroke-opacity="0.05"/><line x1="-1" y1="326" x2="-21" y2="331" stroke-opacity="0.10"/><line x1="-21" y1="331" x2="-43" y2="338" stroke-opacity="0.15"/><line x1="-43" y1="338" x2="-69" y2="344" stroke-opacity="0.20"/><line x1="-17" y1="321" x2="-37" y2="326" stroke-opacity="0.05"/><line x1="-37" y1="326" x2="-60" y2="332" stroke-opacity="0.10"/><line x1="-32" y1="317" x2="-53" y2="322" stroke-opacity="0.05"/><line x1="24" y1="319" x2="-81" y2="321" stroke-opacity="0.05"/><line x1="120" y1="318" x2="-88" y2="323" stroke-opacity="0.05"/><line x1="115" y1="320" x2="-96" y2="325" stroke-opacity="0.05"/><line x1="111" y1="322" x2="-104" y2="326" stroke-opacity="0.05"/><line x1="209" y1="321" x2="-1" y2="326" stroke-opacity="0.05"/><line x1="-1" y1="326" x2="-113" y2="328" stroke-opacity="0.10"/><line x1="206" y1="323" x2="102" y2="325" stroke-opacity="0.05"/><line x1="102" y1="325" x2="-121" y2="330" stroke-opacity="0.10"/><line x1="203" y1="324" x2="97" y2="327" stroke-opacity="0.05"/><line x1="97" y1="327" x2="-130" y2="332" stroke-opacity="0.10"/><line x1="200" y1="326" x2="-21" y2="331" stroke-opacity="0.10"/><line x1="-21" y1="331" x2="-139" y2="334" stroke-opacity="0.15"/><line x1="196" y1="328" x2="87" y2="331" stroke-opacity="0.10"/><line x1="87" y1="331" x2="-149" y2="336" stroke-opacity="0.15"/><line x1="300" y1="327" x2="193" y2="330" stroke-opacity="0.05"/><line x1="193" y1="330" x2="81" y2="333" stroke-opacity="0.10"/><line x1="81" y1="333" x2="-159" y2="338" stroke-opacity="0.15"/><line x1="298" y1="329" x2="190" y2="332" stroke-opacity="0.05"/><line x1="190" y1="332" x2="-169" y2="341" stroke-opacity="0.15"/><line x1="779" y1="319" x2="599" y2="323" stroke-opacity="0.05"/><line x1="296" y1="331" x2="186" y2="334" stroke-opacity="0.05"/><line x1="186" y1="334" x2="-52" y2="340" stroke-opacity="0.15"/><line x1="871" y1="318" x2="602" y2="325" stroke-opacity="0.05"/><line x1="295" y1="333" x2="182" y2="336" stroke-opacity="0.05"/><line x1="182" y1="336" x2="64" y2="339" stroke-opacity="0.15"/><line x1="64" y1="339" x2="-60" y2="342" stroke-opacity="0.20"/><line x1="878" y1="320" x2="506" y2="330" stroke-opacity="0.05"/><line x1="293" y1="335" x2="178" y2="338" stroke-opacity="0.10"/><line x1="178" y1="338" x2="-69" y2="344" stroke-opacity="0.20"/><line x1="970" y1="319" x2="705" y2="326" stroke-opacity="0.05"/><line x1="705" y1="326" x2="609" y2="329" stroke-opacity="0.10"/><line x1="609" y1="329" x2="508" y2="331" stroke-opacity="0.05"/><line x1="291" y1="337" x2="174" y2="340" stroke-opacity="0.10"/><line x1="174" y1="340" x2="-78" y2="347" stroke-opacity="0.20"/><line x1="1061" y1="319" x2="804" y2="326" stroke-opacity="0.05"/><line x1="804" y1="326" x2="612" y2="331" stroke-opacity="0.10"/><line x1="612" y1="331" x2="510" y2="333" stroke-opacity="0.05"/><line x1="289" y1="339" x2="170" y2="343" stroke-opacity="0.10"/><line x1="170" y1="343" x2="45" y2="346" stroke-opacity="0.20"/><line x1="45" y1="346" x2="-87" y2="350" stroke-opacity="0.25"/><line x1="1071" y1="320" x2="901" y2="325" stroke-opacity="0.05"/><line x1="901" y1="325" x2="616" y2="333" stroke-opacity="0.10"/><line x1="616" y1="333" x2="512" y2="336" stroke-opacity="0.05"/><line x1="287" y1="342" x2="166" y2="345" stroke-opacity="0.15"/><line x1="166" y1="345" x2="38" y2="349" stroke-opacity="0.20"/><line x1="38" y1="349" x2="-97" y2="352" stroke-opacity="0.25"/><line x1="1162" y1="320" x2="997" y2="324" stroke-opacity="0.05"/><line x1="997" y1="324" x2="721" y2="332" stroke-opacity="0.10"/><line x1="721" y1="332" x2="620" y2="335" stroke-opacity="0.15"/><line x1="620" y1="335" x2="514" y2="338" stroke-opacity="0.10"/><line x1="402" y1="341" x2="285" y2="344" stroke-opacity="0.05"/><line x1="285" y1="344" x2="161" y2="348" stroke-opacity="0.15"/><line x1="161" y1="348" x2="-107" y2="355" stroke-opacity="0.25"/><line x1="1252" y1="319" x2="1007" y2="326" stroke-opacity="0.05"/><line x1="1007" y1="326" x2="824" y2="331" stroke-opacity="0.10"/><line x1="824" y1="331" x2="624" y2="337" stroke-opacity="0.15"/><line x1="624" y1="337" x2="516" y2="340" stroke-opacity="0.10"/><line x1="516" y1="340" x2="283" y2="347" stroke-opacity="0.05"/><line x1="283" y1="347" x2="157" y2="350" stroke-opacity="0.20"/><line x1="157" y1="350" x2="-117" y2="358" stroke-opacity="0.25"/><line x1="1341" y1="318" x2="1103" y2="325" stroke-opacity="0.05"/><line x1="1103" y1="325" x2="927" y2="330" stroke-opacity="0.10"/><line x1="927" y1="330" x2="628" y2="339" stroke-opacity="0.15"/><line x1="628" y1="339" x2="518" y2="342" stroke-opacity="0.10"/><line x1="518" y1="342" x2="281" y2="349" stroke-opacity="0.05"/><line x1="281" y1="349" x2="152" y2="353" stroke-opacity="0.20"/><line x1="152" y1="353" x2="16" y2="357" stroke-opacity="0.25"/><line x1="16" y1="357" x2="-128" y2="361" stroke-opacity="0.30"/><line x1="1356" y1="320" x2="1199" y2="325" stroke-opacity="0.05"/><line x1="1199" y1="325" x2="936" y2="332" stroke-opacity="0.10"/><line x1="936" y1="332" x2="738" y2="338" stroke-opacity="0.15"/><line x1="738" y1="338" x2="632" y2="341" stroke-opacity="0.20"/><line x1="632" y1="341" x2="520" y2="345" stroke-opacity="0.15"/><line x1="520" y1="345" x2="278" y2="352" stroke-opacity="0.05"/><line x1="278" y1="352" x2="147" y2="356" stroke-opacity="0.25"/><line x1="147" y1="356" x2="-140" y2="364" stroke-opacity="0.30"/><line x1="1445" y1="319" x2="1212" y2="326" stroke-opacity="0.05"/><line x1="1212" y1="326" x2="1038" y2="332" stroke-opacity="0.10"/><line x1="1038" y1="332" x2="745" y2="341" stroke-opacity="0.15"/><line x1="745" y1="341" x2="637" y2="344" stroke-opacity="0.20"/><line x1="637" y1="344" x2="523" y2="347" stroke-opacity="0.15"/><line x1="523" y1="347" x2="403" y2="351" stroke-opacity="0.05"/><line x1="403" y1="351" x2="276" y2="355" stroke-opacity="0.10"/><line x1="276" y1="355" x2="142" y2="359" stroke-opacity="0.25"/><line x1="142" y1="359" x2="-152" y2="368" stroke-opacity="0.30"/><line x1="1533" y1="319" x2="1307" y2="326" stroke-opacity="0.05"/><line x1="1307" y1="326" x2="1139" y2="331" stroke-opacity="0.10"/><line x1="1139" y1="331" x2="856" y2="340" stroke-opacity="0.15"/><line x1="856" y1="340" x2="525" y2="350" stroke-opacity="0.20"/><line x1="525" y1="350" x2="273" y2="358" stroke-opacity="0.10"/><line x1="273" y1="358" x2="-10" y2="366" stroke-opacity="0.30"/><line x1="-10" y1="366" x2="-164" y2="371" stroke-opacity="0.35"/><line x1="1551" y1="320" x2="1402" y2="325" stroke-opacity="0.05"/><line x1="1402" y1="325" x2="1152" y2="333" stroke-opacity="0.10"/><line x1="1152" y1="333" x2="965" y2="339" stroke-opacity="0.15"/><line x1="965" y1="339" x2="528" y2="353" stroke-opacity="0.20"/><line x1="528" y1="353" x2="271" y2="361" stroke-opacity="0.10"/><line x1="271" y1="361" x2="-19" y2="370" stroke-opacity="0.30"/><line x1="-19" y1="370" x2="-178" y2="375" stroke-opacity="0.35"/><line x1="1639" y1="320" x2="1495" y2="324" stroke-opacity="0.05"/><line x1="1495" y1="324" x2="1254" y2="332" stroke-opacity="0.10"/><line x1="1254" y1="332" x2="1073" y2="338" stroke-opacity="0.15"/><line x1="1073" y1="338" x2="765" y2="348" stroke-opacity="0.20"/><line x1="765" y1="348" x2="531" y2="355" stroke-opacity="0.25"/><line x1="531" y1="355" x2="403" y2="359" stroke-opacity="0.10"/><line x1="403" y1="359" x2="268" y2="364" stroke-opacity="0.15"/><line x1="268" y1="364" x2="124" y2="368" stroke-opacity="0.30"/><line x1="124" y1="368" x2="-191" y2="378" stroke-opacity="0.35"/><line x1="1727" y1="319" x2="1513" y2="326" stroke-opacity="0.05"/><line x1="1513" y1="326" x2="1354" y2="331" stroke-opacity="0.10"/><line x1="1354" y1="331" x2="1085" y2="340" stroke-opacity="0.15"/><line x1="1085" y1="340" x2="882" y2="347" stroke-opacity="0.20"/><line x1="882" y1="347" x2="533" y2="358" stroke-opacity="0.25"/><line x1="533" y1="358" x2="403" y2="363" stroke-opacity="0.15"/><line x1="403" y1="363" x2="265" y2="367" stroke-opacity="0.20"/><line x1="265" y1="367" x2="-206" y2="383" stroke-opacity="0.35"/><line x1="1813" y1="319" x2="1607" y2="326" stroke-opacity="0.05"/><line x1="1607" y1="326" x2="1453" y2="331" stroke-opacity="0.10"/><line x1="1453" y1="331" x2="1194" y2="339" stroke-opacity="0.15"/><line x1="1194" y1="339" x2="998" y2="346" stroke-opacity="0.20"/><line x1="998" y1="346" x2="662" y2="357" stroke-opacity="0.25"/><line x1="662" y1="357" x2="536" y2="361" stroke-opacity="0.30"/><line x1="536" y1="361" x2="403" y2="366" stroke-opacity="0.15"/><line x1="403" y1="366" x2="262" y2="371" stroke-opacity="0.20"/><line x1="262" y1="371" x2="-49" y2="381" stroke-opacity="0.35"/><line x1="-49" y1="381" x2="-221" y2="387" stroke-opacity="0.40"/><line x1="1835" y1="320" x2="1699" y2="325" stroke-opacity="0.05"/><line x1="1699" y1="325" x2="1471" y2="333" stroke-opacity="0.10"/><line x1="1471" y1="333" x2="1300" y2="339" stroke-opacity="0.15"/><line x1="1300" y1="339" x2="1009" y2="348" stroke-opacity="0.20"/><line x1="1009" y1="348" x2="788" y2="356" stroke-opacity="0.25"/><line x1="788" y1="356" x2="539" y2="365" stroke-opacity="0.30"/><line x1="539" y1="365" x2="403" y2="369" stroke-opacity="0.20"/><line x1="403" y1="369" x2="259" y2="374" stroke-opacity="0.25"/><line x1="259" y1="374" x2="105" y2="379" stroke-opacity="0.35"/><line x1="105" y1="379" x2="-60" y2="385" stroke-opacity="0.40"/><line x1="1921" y1="320" x2="1790" y2="324" stroke-opacity="0.05"/><line x1="1790" y1="324" x2="1570" y2="332" stroke-opacity="0.10"/><line x1="1570" y1="332" x2="1406" y2="338" stroke-opacity="0.15"/><line x1="1406" y1="338" x2="1125" y2="347" stroke-opacity="0.20"/><line x1="1125" y1="347" x2="796" y2="359" stroke-opacity="0.25"/><line x1="796" y1="359" x2="542" y2="368" stroke-opacity="0.30"/><line x1="542" y1="368" x2="404" y2="373" stroke-opacity="0.25"/><line x1="404" y1="373" x2="256" y2="378" stroke-opacity="0.30"/><line x1="256" y1="378" x2="97" y2="383" stroke-opacity="0.35"/><line x1="97" y1="383" x2="-72" y2="389" stroke-opacity="0.40"/><line x1="2007" y1="319" x2="1813" y2="326" stroke-opacity="0.05"/><line x1="1813" y1="326" x2="1668" y2="331" stroke-opacity="0.10"/><line x1="1668" y1="331" x2="1424" y2="340" stroke-opacity="0.15"/><line x1="1424" y1="340" x2="1240" y2="347" stroke-opacity="0.20"/><line x1="1240" y1="347" x2="923" y2="358" stroke-opacity="0.25"/><line x1="923" y1="358" x2="679" y2="367" stroke-opacity="0.30"/><line x1="679" y1="367" x2="546" y2="371" stroke-opacity="0.35"/><line x1="546" y1="371" x2="404" y2="376" stroke-opacity="0.30"/><line x1="404" y1="376" x2="252" y2="382" stroke-opacity="0.35"/><line x1="252" y1="382" x2="-84" y2="394" stroke-opacity="0.40"/><line x1="2092" y1="318" x2="1904" y2="325" stroke-opacity="0.05"/><line x1="1904" y1="325" x2="1690" y2="333" stroke-opacity="0.10"/><line x1="1690" y1="333" x2="1530" y2="339" stroke-opacity="0.15"/><line x1="1530" y1="339" x2="1256" y2="349" stroke-opacity="0.20"/><line x1="1256" y1="349" x2="1048" y2="357" stroke-opacity="0.25"/><line x1="1048" y1="357" x2="686" y2="370" stroke-opacity="0.30"/><line x1="686" y1="370" x2="549" y2="375" stroke-opacity="0.35"/><line x1="549" y1="375" x2="404" y2="380" stroke-opacity="0.30"/><line x1="404" y1="380" x2="-97" y2="399" stroke-opacity="0.40"/><line x1="2118" y1="320" x2="1995" y2="325" stroke-opacity="0.05"/><line x1="1995" y1="325" x2="1789" y2="332" stroke-opacity="0.10"/><line x1="1789" y1="332" x2="1634" y2="338" stroke-opacity="0.15"/><line x1="1634" y1="338" x2="1371" y2="348" stroke-opacity="0.20"/><line x1="1371" y1="348" x2="1170" y2="356" stroke-opacity="0.25"/><line x1="1170" y1="356" x2="823" y2="369" stroke-opacity="0.30"/><line x1="823" y1="369" x2="404" y2="385" stroke-opacity="0.35"/><line x1="404" y1="385" x2="73" y2="397" stroke-opacity="0.40"/><line x1="73" y1="397" x2="-111" y2="404" stroke-opacity="0.45"/><line x1="2202" y1="319" x2="2021" y2="326" stroke-opacity="0.05"/><line x1="2021" y1="326" x2="1885" y2="332" stroke-opacity="0.10"/><line x1="1885" y1="332" x2="1657" y2="340" stroke-opacity="0.15"/><line x1="1657" y1="340" x2="1484" y2="347" stroke-opacity="0.20"/><line x1="1484" y1="347" x2="1187" y2="359" stroke-opacity="0.25"/><line x1="1187" y1="359" x2="958" y2="367" stroke-opacity="0.30"/><line x1="958" y1="367" x2="557" y2="383" stroke-opacity="0.35"/><line x1="557" y1="383" x2="241" y2="395" stroke-opacity="0.40"/><line x1="241" y1="395" x2="-125" y2="409" stroke-opacity="0.45"/><line x1="2286" y1="319" x2="2111" y2="326" stroke-opacity="0.05"/><line x1="2111" y1="326" x2="1981" y2="331" stroke-opacity="0.10"/><line x1="1981" y1="331" x2="1761" y2="340" stroke-opacity="0.15"/><line x1="1761" y1="340" x2="1595" y2="346" stroke-opacity="0.20"/><line x1="1595" y1="346" x2="1310" y2="357" stroke-opacity="0.25"/><line x1="1310" y1="357" x2="1091" y2="366" stroke-opacity="0.30"/><line x1="1091" y1="366" x2="707" y2="381" stroke-opacity="0.35"/><line x1="707" y1="381" x2="236" y2="400" stroke-opacity="0.40"/><line x1="236" y1="400" x2="-141" y2="415" stroke-opacity="0.45"/><line x1="2315" y1="320" x2="2201" y2="325" stroke-opacity="0.05"/><line x1="2201" y1="325" x2="2008" y2="333" stroke-opacity="0.10"/><line x1="2008" y1="333" x2="1864" y2="339" stroke-opacity="0.15"/><line x1="1864" y1="339" x2="1618" y2="349" stroke-opacity="0.20"/><line x1="1618" y1="349" x2="1431" y2="356" stroke-opacity="0.25"/><line x1="1431" y1="356" x2="1106" y2="370" stroke-opacity="0.30"/><line x1="1106" y1="370" x2="854" y2="380" stroke-opacity="0.35"/><line x1="854" y1="380" x2="405" y2="398" stroke-opacity="0.40"/><line x1="405" y1="398" x2="45" y2="413" stroke-opacity="0.45"/><line x1="45" y1="413" x2="-157" y2="421" stroke-opacity="0.50"/><line x1="2399" y1="320" x2="2289" y2="324" stroke-opacity="0.05"/><line x1="2289" y1="324" x2="2104" y2="332" stroke-opacity="0.10"/><line x1="2104" y1="332" x2="1966" y2="338" stroke-opacity="0.15"/><line x1="1966" y1="338" x2="1730" y2="348" stroke-opacity="0.20"/><line x1="1730" y1="348" x2="1551" y2="355" stroke-opacity="0.25"/><line x1="1551" y1="355" x2="1240" y2="368" stroke-opacity="0.30"/><line x1="1240" y1="368" x2="865" y2="384" stroke-opacity="0.35"/><line x1="865" y1="384" x2="570" y2="396" stroke-opacity="0.40"/><line x1="570" y1="396" x2="35" y2="419" stroke-opacity="0.45"/><line x1="35" y1="419" x2="-174" y2="427" stroke-opacity="0.50"/><line x1="2482" y1="319" x2="2320" y2="326" stroke-opacity="0.05"/><line x1="2320" y1="326" x2="2199" y2="331" stroke-opacity="0.10"/><line x1="2199" y1="331" x2="1994" y2="340" stroke-opacity="0.15"/><line x1="1994" y1="340" x2="1840" y2="347" stroke-opacity="0.20"/><line x1="1840" y1="347" x2="1575" y2="358" stroke-opacity="0.25"/><line x1="1575" y1="358" x2="1371" y2="367" stroke-opacity="0.30"/><line x1="1371" y1="367" x2="1013" y2="382" stroke-opacity="0.35"/><line x1="1013" y1="382" x2="731" y2="394" stroke-opacity="0.40"/><line x1="731" y1="394" x2="222" y2="416" stroke-opacity="0.45"/><line x1="222" y1="416" x2="-193" y2="434" stroke-opacity="0.50"/><line x1="2515" y1="321" x2="2408" y2="325" stroke-opacity="0.05"/><line x1="2408" y1="325" x2="2292" y2="331" stroke-opacity="0.10"/><line x1="2292" y1="331" x2="2096" y2="339" stroke-opacity="0.15"/><line x1="2096" y1="339" x2="1868" y2="349" stroke-opacity="0.20"/><line x1="1868" y1="349" x2="1695" y2="357" stroke-opacity="0.25"/><line x1="1695" y1="357" x2="1393" y2="370" stroke-opacity="0.30"/><line x1="1393" y1="370" x2="1158" y2="381" stroke-opacity="0.35"/><line x1="1158" y1="381" x2="740" y2="399" stroke-opacity="0.40"/><line x1="740" y1="399" x2="405" y2="414" stroke-opacity="0.45"/><line x1="405" y1="414" x2="-212" y2="441" stroke-opacity="0.50"/><line x1="2548" y1="322" x2="2496" y2="325" stroke-opacity="0.05"/><line x1="2496" y1="325" x2="2325" y2="333" stroke-opacity="0.10"/><line x1="2325" y1="333" x2="2197" y2="338" stroke-opacity="0.15"/><line x1="2197" y1="338" x2="1979" y2="348" stroke-opacity="0.20"/><line x1="1979" y1="348" x2="1813" y2="356" stroke-opacity="0.25"/><line x1="1813" y1="356" x2="1525" y2="369" stroke-opacity="0.30"/><line x1="1525" y1="369" x2="1301" y2="379" stroke-opacity="0.35"/><line x1="1301" y1="379" x2="903" y2="397" stroke-opacity="0.40"/><line x1="903" y1="397" x2="584" y2="412" stroke-opacity="0.45"/><line x1="584" y1="412" x2="-1" y2="439" stroke-opacity="0.50"/><line x1="-1" y1="439" x2="-233" y2="449" stroke-opacity="0.55"/><line x1="2530" y1="327" x2="2419" y2="332" stroke-opacity="0.10"/><line x1="2419" y1="332" x2="2230" y2="341" stroke-opacity="0.15"/><line x1="2230" y1="341" x2="2087" y2="347" stroke-opacity="0.20"/><line x1="2087" y1="347" x2="1842" y2="359" stroke-opacity="0.25"/><line x1="1842" y1="359" x2="1654" y2="368" stroke-opacity="0.30"/><line x1="1654" y1="368" x2="1323" y2="383" stroke-opacity="0.35"/><line x1="1323" y1="383" x2="1062" y2="396" stroke-opacity="0.40"/><line x1="1062" y1="396" x2="590" y2="418" stroke-opacity="0.45"/><line x1="590" y1="418" x2="205" y2="436" stroke-opacity="0.50"/><line x1="205" y1="436" x2="-256" y2="458" stroke-opacity="0.55"/><line x1="2511" y1="331" x2="2331" y2="340" stroke-opacity="0.15"/><line x1="2331" y1="340" x2="2194" y2="346" stroke-opacity="0.20"/><line x1="2194" y1="346" x2="1961" y2="358" stroke-opacity="0.25"/><line x1="1961" y1="358" x2="1781" y2="366" stroke-opacity="0.30"/><line x1="1781" y1="366" x2="1466" y2="382" stroke-opacity="0.35"/><line x1="1466" y1="382" x2="1218" y2="394" stroke-opacity="0.40"/><line x1="1218" y1="394" x2="770" y2="416" stroke-opacity="0.45"/><line x1="770" y1="416" x2="406" y2="433" stroke-opacity="0.50"/><line x1="406" y1="433" x2="-280" y2="467" stroke-opacity="0.55"/><line x1="2547" y1="333" x2="2430" y2="339" stroke-opacity="0.15"/><line x1="2430" y1="339" x2="2230" y2="349" stroke-opacity="0.20"/><line x1="2230" y1="349" x2="2077" y2="357" stroke-opacity="0.25"/><line x1="2077" y1="357" x2="1813" y2="370" stroke-opacity="0.30"/><line x1="1813" y1="370" x2="1607" y2="380" stroke-opacity="0.35"/><line x1="1607" y1="380" x2="1240" y2="399" stroke-opacity="0.40"/><line x1="1240" y1="399" x2="947" y2="413" stroke-opacity="0.45"/><line x1="947" y1="413" x2="406" y2="440" stroke-opacity="0.50"/><line x1="406" y1="440" x2="-306" y2="476" stroke-opacity="0.55"/><line x1="2528" y1="338" x2="2337" y2="348" stroke-opacity="0.20"/><line x1="2337" y1="348" x2="2192" y2="356" stroke-opacity="0.25"/><line x1="2192" y1="356" x2="1940" y2="369" stroke-opacity="0.30"/><line x1="1940" y1="369" x2="1744" y2="379" stroke-opacity="0.35"/><line x1="1744" y1="379" x2="1397" y2="397" stroke-opacity="0.40"/><line x1="1397" y1="397" x2="963" y2="419" stroke-opacity="0.45"/><line x1="963" y1="419" x2="609" y2="438" stroke-opacity="0.50"/><line x1="609" y1="438" x2="-61" y2="472" stroke-opacity="0.55"/><line x1="2506" y1="344" x2="2443" y2="347" stroke-opacity="0.20"/><line x1="2443" y1="347" x2="2230" y2="358" stroke-opacity="0.25"/><line x1="2230" y1="358" x2="2065" y2="367" stroke-opacity="0.30"/><line x1="2065" y1="367" x2="1778" y2="383" stroke-opacity="0.35"/><line x1="1778" y1="383" x2="1551" y2="395" stroke-opacity="0.40"/><line x1="1551" y1="395" x2="1141" y2="417" stroke-opacity="0.45"/><line x1="1141" y1="417" x2="807" y2="435" stroke-opacity="0.50"/><line x1="807" y1="435" x2="-79" y2="482" stroke-opacity="0.55"/><line x1="2547" y1="346" x2="2344" y2="357" stroke-opacity="0.25"/><line x1="2344" y1="357" x2="2189" y2="366" stroke-opacity="0.30"/><line x1="2189" y1="366" x2="1916" y2="381" stroke-opacity="0.35"/><line x1="1916" y1="381" x2="1582" y2="400" stroke-opacity="0.40"/><line x1="1582" y1="400" x2="1314" y2="415" stroke-opacity="0.45"/><line x1="1314" y1="415" x2="820" y2="442" stroke-opacity="0.50"/><line x1="820" y1="442" x2="-99" y2="493" stroke-opacity="0.55"/><line x1="2525" y1="352" x2="2457" y2="356" stroke-opacity="0.25"/><line x1="2457" y1="356" x2="2229" y2="369" stroke-opacity="0.30"/><line x1="2229" y1="369" x2="2052" y2="380" stroke-opacity="0.35"/><line x1="2052" y1="380" x2="1736" y2="398" stroke-opacity="0.40"/><line x1="1736" y1="398" x2="1484" y2="413" stroke-opacity="0.45"/><line x1="1484" y1="413" x2="1019" y2="439" stroke-opacity="0.50"/><line x1="1019" y1="439" x2="-120" y2="505" stroke-opacity="0.55"/><line x1="2501" y1="359" x2="2353" y2="368" stroke-opacity="0.30"/><line x1="2353" y1="368" x2="2093" y2="384" stroke-opacity="0.35"/><line x1="2093" y1="384" x2="1887" y2="396" stroke-opacity="0.40"/><line x1="1887" y1="396" x2="1516" y2="418" stroke-opacity="0.45"/><line x1="1516" y1="418" x2="1213" y2="437" stroke-opacity="0.50"/><line x1="1213" y1="437" x2="-143" y2="518" stroke-opacity="0.55"/><line x1="2546" y1="362" x2="2474" y2="367" stroke-opacity="0.30"/><line x1="2474" y1="367" x2="2229" y2="382" stroke-opacity="0.35"/><line x1="2229" y1="382" x2="2036" y2="394" stroke-opacity="0.40"/><line x1="2036" y1="394" x2="1687" y2="416" stroke-opacity="0.45"/><line x1="1687" y1="416" x2="1403" y2="434" stroke-opacity="0.50"/><line x1="1403" y1="434" x2="-168" y2="532" stroke-opacity="0.55"/><line x1="2522" y1="370" x2="2363" y2="381" stroke-opacity="0.35"/><line x1="2363" y1="381" x2="2080" y2="399" stroke-opacity="0.40"/><line x1="2080" y1="399" x2="1853" y2="414" stroke-opacity="0.45"/><line x1="1853" y1="414" x2="1436" y2="441" stroke-opacity="0.50"/><line x1="1436" y1="441" x2="-195" y2="548" stroke-opacity="0.55"/><line x1="2571" y1="374" x2="2494" y2="379" stroke-opacity="0.35"/><line x1="2494" y1="379" x2="2229" y2="397" stroke-opacity="0.40"/><line x1="2229" y1="397" x2="2016" y2="412" stroke-opacity="0.45"/><line x1="2016" y1="412" x2="1626" y2="438" stroke-opacity="0.50"/><line x1="1626" y1="438" x2="-226" y2="565" stroke-opacity="0.55"/><line x1="2546" y1="383" x2="2374" y2="395" stroke-opacity="0.40"/><line x1="2374" y1="395" x2="2065" y2="418" stroke-opacity="0.45"/><line x1="2065" y1="418" x2="1812" y2="436" stroke-opacity="0.50"/><line x1="1812" y1="436" x2="-260" y2="584" stroke-opacity="0.55"/><line x1="2517" y1="394" x2="2228" y2="415" stroke-opacity="0.45"/><line x1="2228" y1="415" x2="1859" y2="443" stroke-opacity="0.50"/><line x1="1859" y1="443" x2="-297" y2="605" stroke-opacity="0.55"/><line x1="2574" y1="398" x2="2388" y2="413" stroke-opacity="0.45"/><line x1="2388" y1="413" x2="2046" y2="440" stroke-opacity="0.50"/><line x1="2046" y1="440" x2="-339" y2="628" stroke-opacity="0.55"/><line x1="2545" y1="411" x2="2448" y2="419" stroke-opacity="0.45"/><line x1="2448" y1="419" x2="2228" y2="437" stroke-opacity="0.50"/><line x1="2228" y1="437" x2="-387" y2="655" stroke-opacity="0.55"/><line x1="2511" y1="425" x2="2405" y2="435" stroke-opacity="0.50"/><line x1="2405" y1="435" x2="-441" y2="685" stroke-opacity="0.55"/><line x1="2578" y1="432" x2="2472" y2="442" stroke-opacity="0.50"/><line x1="2472" y1="442" x2="-503" y2="720" stroke-opacity="0.55"/><line x1="2543" y1="450" x2="-575" y2="761" stroke-opacity="0.55"/><line x1="2502" y1="471" x2="-64" y2="745" stroke-opacity="0.55"/><line x1="2541" y1="508" x2="-149" y2="842" stroke-opacity="0.55"/><line x1="2637" y1="521" x2="-204" y2="906" stroke-opacity="0.55"/><line x1="2594" y1="557" x2="-272" y2="984" stroke-opacity="0.55"/><line x1="2538" y1="604" x2="-357" y2="1081" stroke-opacity="0.55"/><line x1="2667" y1="627" x2="-467" y2="1208" stroke-opacity="0.55"/><line x1="2611" y1="697" x2="436" y2="1155" stroke-opacity="0.55"/><line x1="2531" y1="794" x2="1248" y2="1108" stroke-opacity="0.55"/><line x1="2729" y1="848" x2="1377" y2="1243" stroke-opacity="0.55"/><line x1="2651" y1="1027" x2="2210" y2="1187" stroke-opacity="0.55"/></g><g stroke="#898ea0" stroke-width="1.4" clip-path="url(#cg)"><line x1="2089" y1="336" x2="2151" y2="341" stroke-opacity="0.05"/><line x1="2151" y1="341" x2="2218" y2="345" stroke-opacity="0.10"/><line x1="2218" y1="345" x2="2369" y2="356" stroke-opacity="0.15"/><line x1="2369" y1="356" x2="2454" y2="362" stroke-opacity="0.20"/><line x1="2454" y1="362" x2="2546" y2="369" stroke-opacity="0.25"/><line x1="2066" y1="337" x2="2128" y2="342" stroke-opacity="0.05"/><line x1="2128" y1="342" x2="2194" y2="346" stroke-opacity="0.10"/><line x1="2194" y1="346" x2="2266" y2="352" stroke-opacity="0.15"/><line x1="2266" y1="352" x2="2429" y2="364" stroke-opacity="0.20"/><line x1="2429" y1="364" x2="2522" y2="370" stroke-opacity="0.25"/><line x1="2043" y1="338" x2="2104" y2="343" stroke-opacity="0.05"/><line x1="2104" y1="343" x2="2170" y2="348" stroke-opacity="0.10"/><line x1="2170" y1="348" x2="2242" y2="353" stroke-opacity="0.15"/><line x1="2242" y1="353" x2="2320" y2="359" stroke-opacity="0.20"/><line x1="2320" y1="359" x2="2497" y2="372" stroke-opacity="0.25"/><line x1="2497" y1="372" x2="2598" y2="379" stroke-opacity="0.30"/><line x1="1962" y1="335" x2="2080" y2="344" stroke-opacity="0.05"/><line x1="2080" y1="344" x2="2146" y2="349" stroke-opacity="0.10"/><line x1="2146" y1="349" x2="2217" y2="354" stroke-opacity="0.15"/><line x1="2217" y1="354" x2="2295" y2="360" stroke-opacity="0.20"/><line x1="2295" y1="360" x2="2379" y2="367" stroke-opacity="0.25"/><line x1="2379" y1="367" x2="2572" y2="381" stroke-opacity="0.30"/><line x1="1938" y1="336" x2="1994" y2="340" stroke-opacity="0.05"/><line x1="1994" y1="340" x2="2055" y2="345" stroke-opacity="0.10"/><line x1="2055" y1="345" x2="2192" y2="356" stroke-opacity="0.15"/><line x1="2192" y1="356" x2="2269" y2="362" stroke-opacity="0.20"/><line x1="2269" y1="362" x2="2353" y2="368" stroke-opacity="0.25"/><line x1="2353" y1="368" x2="2445" y2="375" stroke-opacity="0.30"/><line x1="2445" y1="375" x2="2546" y2="383" stroke-opacity="0.35"/><line x1="1914" y1="337" x2="1970" y2="341" stroke-opacity="0.05"/><line x1="1970" y1="341" x2="2030" y2="346" stroke-opacity="0.10"/><line x1="2030" y1="346" x2="2095" y2="351" stroke-opacity="0.15"/><line x1="2095" y1="351" x2="2243" y2="363" stroke-opacity="0.20"/><line x1="2243" y1="363" x2="2326" y2="370" stroke-opacity="0.25"/><line x1="2326" y1="370" x2="2418" y2="377" stroke-opacity="0.30"/><line x1="2418" y1="377" x2="2519" y2="385" stroke-opacity="0.35"/><line x1="1889" y1="338" x2="1945" y2="342" stroke-opacity="0.05"/><line x1="1945" y1="342" x2="2005" y2="347" stroke-opacity="0.10"/><line x1="2005" y1="347" x2="2069" y2="352" stroke-opacity="0.15"/><line x1="2069" y1="352" x2="2140" y2="358" stroke-opacity="0.20"/><line x1="2140" y1="358" x2="2299" y2="371" stroke-opacity="0.25"/><line x1="2299" y1="371" x2="2391" y2="379" stroke-opacity="0.30"/><line x1="2391" y1="379" x2="2491" y2="387" stroke-opacity="0.35"/><line x1="2491" y1="387" x2="2602" y2="396" stroke-opacity="0.40"/><line x1="1813" y1="334" x2="1919" y2="343" stroke-opacity="0.05"/><line x1="1919" y1="343" x2="1979" y2="348" stroke-opacity="0.10"/><line x1="1979" y1="348" x2="2043" y2="354" stroke-opacity="0.15"/><line x1="2043" y1="354" x2="2113" y2="360" stroke-opacity="0.20"/><line x1="2113" y1="360" x2="2189" y2="366" stroke-opacity="0.25"/><line x1="2189" y1="366" x2="2363" y2="381" stroke-opacity="0.30"/><line x1="2363" y1="381" x2="2463" y2="389" stroke-opacity="0.35"/><line x1="2463" y1="389" x2="2574" y2="398" stroke-opacity="0.40"/><line x1="1788" y1="335" x2="1839" y2="340" stroke-opacity="0.05"/><line x1="1839" y1="340" x2="1952" y2="350" stroke-opacity="0.10"/><line x1="1952" y1="350" x2="2016" y2="355" stroke-opacity="0.15"/><line x1="2016" y1="355" x2="2085" y2="361" stroke-opacity="0.20"/><line x1="2085" y1="361" x2="2161" y2="368" stroke-opacity="0.25"/><line x1="2161" y1="368" x2="2243" y2="375" stroke-opacity="0.30"/><line x1="2243" y1="375" x2="2434" y2="391" stroke-opacity="0.35"/><line x1="2434" y1="391" x2="2545" y2="401" stroke-opacity="0.40"/><line x1="1762" y1="336" x2="1813" y2="341" stroke-opacity="0.05"/><line x1="1813" y1="341" x2="1867" y2="346" stroke-opacity="0.10"/><line x1="1867" y1="346" x2="1989" y2="356" stroke-opacity="0.15"/><line x1="1989" y1="356" x2="2058" y2="363" stroke-opacity="0.20"/><line x1="2058" y1="363" x2="2133" y2="369" stroke-opacity="0.25"/><line x1="2133" y1="369" x2="2215" y2="376" stroke-opacity="0.30"/><line x1="2215" y1="376" x2="2305" y2="384" stroke-opacity="0.35"/><line x1="2305" y1="384" x2="2515" y2="403" stroke-opacity="0.40"/><line x1="1737" y1="337" x2="1786" y2="342" stroke-opacity="0.05"/><line x1="1786" y1="342" x2="1840" y2="347" stroke-opacity="0.10"/><line x1="1840" y1="347" x2="1898" y2="352" stroke-opacity="0.15"/><line x1="1898" y1="352" x2="2029" y2="364" stroke-opacity="0.20"/><line x1="2029" y1="364" x2="2104" y2="371" stroke-opacity="0.25"/><line x1="2104" y1="371" x2="2185" y2="378" stroke-opacity="0.30"/><line x1="2185" y1="378" x2="2275" y2="386" stroke-opacity="0.35"/><line x1="2275" y1="386" x2="2374" y2="395" stroke-opacity="0.40"/><line x1="2374" y1="395" x2="2608" y2="417" stroke-opacity="0.45"/><line x1="1665" y1="334" x2="1760" y2="343" stroke-opacity="0.05"/><line x1="1760" y1="343" x2="1813" y2="348" stroke-opacity="0.10"/><line x1="1813" y1="348" x2="1870" y2="353" stroke-opacity="0.15"/><line x1="1870" y1="353" x2="1932" y2="359" stroke-opacity="0.20"/><line x1="1932" y1="359" x2="2000" y2="365" stroke-opacity="0.25"/><line x1="2000" y1="365" x2="2155" y2="380" stroke-opacity="0.30"/><line x1="2155" y1="380" x2="2244" y2="388" stroke-opacity="0.35"/><line x1="2244" y1="388" x2="2343" y2="398" stroke-opacity="0.40"/><line x1="2343" y1="398" x2="2453" y2="408" stroke-opacity="0.45"/><line x1="2453" y1="408" x2="2577" y2="420" stroke-opacity="0.50"/><line x1="1639" y1="335" x2="1684" y2="339" stroke-opacity="0.05"/><line x1="1684" y1="339" x2="1785" y2="349" stroke-opacity="0.10"/><line x1="1785" y1="349" x2="1842" y2="355" stroke-opacity="0.15"/><line x1="1842" y1="355" x2="1903" y2="361" stroke-opacity="0.20"/><line x1="1903" y1="361" x2="1970" y2="367" stroke-opacity="0.25"/><line x1="1970" y1="367" x2="2044" y2="374" stroke-opacity="0.30"/><line x1="2044" y1="374" x2="2213" y2="390" stroke-opacity="0.35"/><line x1="2213" y1="390" x2="2311" y2="400" stroke-opacity="0.40"/><line x1="2311" y1="400" x2="2421" y2="411" stroke-opacity="0.45"/><line x1="2421" y1="411" x2="2544" y2="422" stroke-opacity="0.50"/><line x1="1612" y1="336" x2="1657" y2="340" stroke-opacity="0.05"/><line x1="1657" y1="340" x2="1705" y2="345" stroke-opacity="0.10"/><line x1="1705" y1="345" x2="1813" y2="356" stroke-opacity="0.15"/><line x1="1813" y1="356" x2="1874" y2="362" stroke-opacity="0.20"/><line x1="1874" y1="362" x2="1940" y2="369" stroke-opacity="0.25"/><line x1="1940" y1="369" x2="2013" y2="376" stroke-opacity="0.30"/><line x1="2013" y1="376" x2="2093" y2="384" stroke-opacity="0.35"/><line x1="2093" y1="384" x2="2279" y2="402" stroke-opacity="0.40"/><line x1="2279" y1="402" x2="2388" y2="413" stroke-opacity="0.45"/><line x1="2388" y1="413" x2="2511" y2="425" stroke-opacity="0.50"/><line x1="1585" y1="337" x2="1629" y2="342" stroke-opacity="0.05"/><line x1="1629" y1="342" x2="1676" y2="346" stroke-opacity="0.10"/><line x1="1676" y1="346" x2="1728" y2="352" stroke-opacity="0.15"/><line x1="1728" y1="352" x2="1843" y2="363" stroke-opacity="0.20"/><line x1="1843" y1="363" x2="1909" y2="370" stroke-opacity="0.25"/><line x1="1909" y1="370" x2="1981" y2="378" stroke-opacity="0.30"/><line x1="1981" y1="378" x2="2060" y2="386" stroke-opacity="0.35"/><line x1="2060" y1="386" x2="2148" y2="395" stroke-opacity="0.40"/><line x1="2148" y1="395" x2="2354" y2="416" stroke-opacity="0.45"/><line x1="2354" y1="416" x2="2477" y2="428" stroke-opacity="0.50"/><line x1="2477" y1="428" x2="2615" y2="443" stroke-opacity="0.55"/><line x1="1558" y1="338" x2="1601" y2="343" stroke-opacity="0.05"/><line x1="1601" y1="343" x2="1648" y2="348" stroke-opacity="0.10"/><line x1="1648" y1="348" x2="1698" y2="353" stroke-opacity="0.15"/><line x1="1698" y1="353" x2="1753" y2="359" stroke-opacity="0.20"/><line x1="1753" y1="359" x2="1878" y2="372" stroke-opacity="0.25"/><line x1="1878" y1="372" x2="1949" y2="379" stroke-opacity="0.30"/><line x1="1949" y1="379" x2="2027" y2="388" stroke-opacity="0.35"/><line x1="2027" y1="388" x2="2114" y2="397" stroke-opacity="0.40"/><line x1="2114" y1="397" x2="2211" y2="407" stroke-opacity="0.45"/><line x1="2211" y1="407" x2="2441" y2="431" stroke-opacity="0.50"/><line x1="2441" y1="431" x2="2580" y2="446" stroke-opacity="0.55"/><line x1="1490" y1="335" x2="1572" y2="344" stroke-opacity="0.05"/><line x1="1572" y1="344" x2="1618" y2="349" stroke-opacity="0.10"/><line x1="1618" y1="349" x2="1668" y2="354" stroke-opacity="0.15"/><line x1="1668" y1="354" x2="1722" y2="360" stroke-opacity="0.20"/><line x1="1722" y1="360" x2="1781" y2="366" stroke-opacity="0.25"/><line x1="1781" y1="366" x2="1916" y2="381" stroke-opacity="0.30"/><line x1="1916" y1="381" x2="1994" y2="390" stroke-opacity="0.35"/><line x1="1994" y1="390" x2="2080" y2="399" stroke-opacity="0.40"/><line x1="2080" y1="399" x2="2176" y2="410" stroke-opacity="0.45"/><line x1="2176" y1="410" x2="2284" y2="421" stroke-opacity="0.50"/><line x1="2284" y1="421" x2="2543" y2="450" stroke-opacity="0.55"/><line x1="1462" y1="336" x2="1501" y2="340" stroke-opacity="0.05"/><line x1="1501" y1="340" x2="1543" y2="345" stroke-opacity="0.10"/><line x1="1543" y1="345" x2="1638" y2="355" stroke-opacity="0.15"/><line x1="1638" y1="355" x2="1691" y2="361" stroke-opacity="0.20"/><line x1="1691" y1="361" x2="1749" y2="368" stroke-opacity="0.25"/><line x1="1749" y1="368" x2="1812" y2="375" stroke-opacity="0.30"/><line x1="1812" y1="375" x2="1882" y2="383" stroke-opacity="0.35"/><line x1="1882" y1="383" x2="2045" y2="401" stroke-opacity="0.40"/><line x1="2045" y1="401" x2="2140" y2="412" stroke-opacity="0.45"/><line x1="2140" y1="412" x2="2247" y2="424" stroke-opacity="0.50"/><line x1="2247" y1="424" x2="2368" y2="438" stroke-opacity="0.55"/><line x1="2368" y1="438" x2="2505" y2="453" stroke-opacity="0.60"/><line x1="1434" y1="337" x2="1473" y2="341" stroke-opacity="0.05"/><line x1="1473" y1="341" x2="1514" y2="346" stroke-opacity="0.10"/><line x1="1514" y1="346" x2="1558" y2="351" stroke-opacity="0.15"/><line x1="1558" y1="351" x2="1659" y2="363" stroke-opacity="0.20"/><line x1="1659" y1="363" x2="1716" y2="370" stroke-opacity="0.25"/><line x1="1716" y1="370" x2="1779" y2="377" stroke-opacity="0.30"/><line x1="1779" y1="377" x2="1848" y2="385" stroke-opacity="0.35"/><line x1="1848" y1="385" x2="1924" y2="394" stroke-opacity="0.40"/><line x1="1924" y1="394" x2="2103" y2="415" stroke-opacity="0.45"/><line x1="2103" y1="415" x2="2209" y2="427" stroke-opacity="0.50"/><line x1="2209" y1="427" x2="2329" y2="441" stroke-opacity="0.55"/><line x1="2329" y1="441" x2="2466" y2="457" stroke-opacity="0.60"/><line x1="2466" y1="457" x2="2625" y2="476" stroke-opacity="0.65"/><line x1="1406" y1="338" x2="1443" y2="342" stroke-opacity="0.05"/><line x1="1443" y1="342" x2="1484" y2="347" stroke-opacity="0.10"/><line x1="1484" y1="347" x2="1527" y2="352" stroke-opacity="0.15"/><line x1="1527" y1="352" x2="1575" y2="358" stroke-opacity="0.20"/><line x1="1575" y1="358" x2="1683" y2="371" stroke-opacity="0.25"/><line x1="1683" y1="371" x2="1744" y2="379" stroke-opacity="0.30"/><line x1="1744" y1="379" x2="1812" y2="387" stroke-opacity="0.35"/><line x1="1812" y1="387" x2="1887" y2="396" stroke-opacity="0.40"/><line x1="1887" y1="396" x2="1971" y2="406" stroke-opacity="0.45"/><line x1="1971" y1="406" x2="2170" y2="430" stroke-opacity="0.50"/><line x1="2170" y1="430" x2="2289" y2="445" stroke-opacity="0.55"/><line x1="2289" y1="445" x2="2426" y2="461" stroke-opacity="0.60"/><line x1="2426" y1="461" x2="2584" y2="481" stroke-opacity="0.65"/><line x1="1342" y1="334" x2="1413" y2="343" stroke-opacity="0.05"/><line x1="1413" y1="343" x2="1453" y2="348" stroke-opacity="0.10"/><line x1="1453" y1="348" x2="1496" y2="354" stroke-opacity="0.15"/><line x1="1496" y1="354" x2="1543" y2="360" stroke-opacity="0.20"/><line x1="1543" y1="360" x2="1593" y2="366" stroke-opacity="0.25"/><line x1="1593" y1="366" x2="1709" y2="381" stroke-opacity="0.30"/><line x1="1709" y1="381" x2="1776" y2="389" stroke-opacity="0.35"/><line x1="1776" y1="389" x2="1850" y2="398" stroke-opacity="0.40"/><line x1="1850" y1="398" x2="1933" y2="409" stroke-opacity="0.45"/><line x1="1933" y1="409" x2="2025" y2="420" stroke-opacity="0.50"/><line x1="2025" y1="420" x2="2248" y2="448" stroke-opacity="0.55"/><line x1="2248" y1="448" x2="2384" y2="466" stroke-opacity="0.60"/><line x1="2384" y1="466" x2="2542" y2="485" stroke-opacity="0.65"/><line x1="1314" y1="335" x2="1347" y2="340" stroke-opacity="0.05"/><line x1="1347" y1="340" x2="1422" y2="350" stroke-opacity="0.10"/><line x1="1422" y1="350" x2="1464" y2="355" stroke-opacity="0.15"/><line x1="1464" y1="355" x2="1510" y2="361" stroke-opacity="0.20"/><line x1="1510" y1="361" x2="1559" y2="368" stroke-opacity="0.25"/><line x1="1559" y1="368" x2="1614" y2="375" stroke-opacity="0.30"/><line x1="1614" y1="375" x2="1739" y2="391" stroke-opacity="0.35"/><line x1="1739" y1="391" x2="1812" y2="401" stroke-opacity="0.40"/><line x1="1812" y1="401" x2="1894" y2="411" stroke-opacity="0.45"/><line x1="1894" y1="411" x2="1985" y2="423" stroke-opacity="0.50"/><line x1="1985" y1="423" x2="2088" y2="437" stroke-opacity="0.55"/><line x1="2088" y1="437" x2="2341" y2="470" stroke-opacity="0.60"/><line x1="2341" y1="470" x2="2498" y2="490" stroke-opacity="0.65"/><line x1="2498" y1="490" x2="2683" y2="515" stroke-opacity="0.70"/><line x1="1284" y1="336" x2="1317" y2="341" stroke-opacity="0.05"/><line x1="1317" y1="341" x2="1352" y2="346" stroke-opacity="0.10"/><line x1="1352" y1="346" x2="1431" y2="356" stroke-opacity="0.15"/><line x1="1431" y1="356" x2="1476" y2="362" stroke-opacity="0.20"/><line x1="1476" y1="362" x2="1525" y2="369" stroke-opacity="0.25"/><line x1="1525" y1="369" x2="1578" y2="376" stroke-opacity="0.30"/><line x1="1578" y1="376" x2="1637" y2="384" stroke-opacity="0.35"/><line x1="1637" y1="384" x2="1773" y2="403" stroke-opacity="0.40"/><line x1="1773" y1="403" x2="1853" y2="414" stroke-opacity="0.45"/><line x1="1853" y1="414" x2="1944" y2="426" stroke-opacity="0.50"/><line x1="1944" y1="426" x2="2046" y2="440" stroke-opacity="0.55"/><line x1="2046" y1="440" x2="2162" y2="456" stroke-opacity="0.60"/><line x1="2162" y1="456" x2="2453" y2="496" stroke-opacity="0.65"/><line x1="2453" y1="496" x2="2637" y2="521" stroke-opacity="0.70"/><line x1="1255" y1="337" x2="1286" y2="342" stroke-opacity="0.05"/><line x1="1286" y1="342" x2="1321" y2="347" stroke-opacity="0.10"/><line x1="1321" y1="347" x2="1358" y2="352" stroke-opacity="0.15"/><line x1="1358" y1="352" x2="1442" y2="364" stroke-opacity="0.20"/><line x1="1442" y1="364" x2="1489" y2="371" stroke-opacity="0.25"/><line x1="1489" y1="371" x2="1541" y2="378" stroke-opacity="0.30"/><line x1="1541" y1="378" x2="1599" y2="386" stroke-opacity="0.35"/><line x1="1599" y1="386" x2="1662" y2="395" stroke-opacity="0.40"/><line x1="1662" y1="395" x2="1812" y2="417" stroke-opacity="0.45"/><line x1="1812" y1="417" x2="1901" y2="429" stroke-opacity="0.50"/><line x1="1901" y1="429" x2="2002" y2="444" stroke-opacity="0.55"/><line x1="2002" y1="444" x2="2117" y2="460" stroke-opacity="0.60"/><line x1="2117" y1="460" x2="2250" y2="479" stroke-opacity="0.65"/><line x1="2250" y1="479" x2="2590" y2="527" stroke-opacity="0.70"/><line x1="1195" y1="334" x2="1255" y2="343" stroke-opacity="0.05"/><line x1="1255" y1="343" x2="1289" y2="348" stroke-opacity="0.10"/><line x1="1289" y1="348" x2="1325" y2="353" stroke-opacity="0.15"/><line x1="1325" y1="353" x2="1364" y2="359" stroke-opacity="0.20"/><line x1="1364" y1="359" x2="1407" y2="365" stroke-opacity="0.25"/><line x1="1407" y1="365" x2="1504" y2="380" stroke-opacity="0.30"/><line x1="1504" y1="380" x2="1560" y2="388" stroke-opacity="0.35"/><line x1="1560" y1="388" x2="1623" y2="398" stroke-opacity="0.40"/><line x1="1623" y1="398" x2="1692" y2="408" stroke-opacity="0.45"/><line x1="1692" y1="408" x2="1770" y2="419" stroke-opacity="0.50"/><line x1="1770" y1="419" x2="1957" y2="447" stroke-opacity="0.55"/><line x1="1957" y1="447" x2="2070" y2="464" stroke-opacity="0.60"/><line x1="2070" y1="464" x2="2202" y2="484" stroke-opacity="0.65"/><line x1="2202" y1="484" x2="2357" y2="507" stroke-opacity="0.70"/><line x1="2357" y1="507" x2="2540" y2="534" stroke-opacity="0.75"/><line x1="1166" y1="335" x2="1194" y2="339" stroke-opacity="0.05"/><line x1="1194" y1="339" x2="1256" y2="349" stroke-opacity="0.10"/><line x1="1256" y1="349" x2="1291" y2="355" stroke-opacity="0.15"/><line x1="1291" y1="355" x2="1329" y2="360" stroke-opacity="0.20"/><line x1="1329" y1="360" x2="1371" y2="367" stroke-opacity="0.25"/><line x1="1371" y1="367" x2="1416" y2="374" stroke-opacity="0.30"/><line x1="1416" y1="374" x2="1521" y2="390" stroke-opacity="0.35"/><line x1="1521" y1="390" x2="1582" y2="400" stroke-opacity="0.40"/><line x1="1582" y1="400" x2="1650" y2="410" stroke-opacity="0.45"/><line x1="1650" y1="410" x2="1726" y2="422" stroke-opacity="0.50"/><line x1="1726" y1="422" x2="1812" y2="436" stroke-opacity="0.55"/><line x1="1812" y1="436" x2="2022" y2="468" stroke-opacity="0.60"/><line x1="2022" y1="468" x2="2153" y2="489" stroke-opacity="0.65"/><line x1="2153" y1="489" x2="2306" y2="513" stroke-opacity="0.70"/><line x1="2306" y1="513" x2="2489" y2="541" stroke-opacity="0.75"/><line x1="2489" y1="541" x2="2710" y2="575" stroke-opacity="0.80"/><line x1="1135" y1="336" x2="1162" y2="340" stroke-opacity="0.05"/><line x1="1162" y1="340" x2="1191" y2="345" stroke-opacity="0.10"/><line x1="1191" y1="345" x2="1257" y2="356" stroke-opacity="0.15"/><line x1="1257" y1="356" x2="1294" y2="362" stroke-opacity="0.20"/><line x1="1294" y1="362" x2="1334" y2="369" stroke-opacity="0.25"/><line x1="1334" y1="369" x2="1379" y2="376" stroke-opacity="0.30"/><line x1="1379" y1="376" x2="1427" y2="384" stroke-opacity="0.35"/><line x1="1427" y1="384" x2="1540" y2="402" stroke-opacity="0.40"/><line x1="1540" y1="402" x2="1606" y2="413" stroke-opacity="0.45"/><line x1="1606" y1="413" x2="1681" y2="425" stroke-opacity="0.50"/><line x1="1681" y1="425" x2="1765" y2="439" stroke-opacity="0.55"/><line x1="1765" y1="439" x2="1862" y2="455" stroke-opacity="0.60"/><line x1="1862" y1="455" x2="2101" y2="494" stroke-opacity="0.65"/><line x1="2101" y1="494" x2="2253" y2="519" stroke-opacity="0.70"/><line x1="2253" y1="519" x2="2434" y2="548" stroke-opacity="0.75"/><line x1="2434" y1="548" x2="2655" y2="584" stroke-opacity="0.80"/><line x1="1104" y1="337" x2="1130" y2="341" stroke-opacity="0.05"/><line x1="1130" y1="341" x2="1159" y2="346" stroke-opacity="0.10"/><line x1="1159" y1="346" x2="1189" y2="352" stroke-opacity="0.15"/><line x1="1189" y1="352" x2="1258" y2="363" stroke-opacity="0.20"/><line x1="1258" y1="363" x2="1297" y2="370" stroke-opacity="0.25"/><line x1="1297" y1="370" x2="1340" y2="378" stroke-opacity="0.30"/><line x1="1340" y1="378" x2="1387" y2="386" stroke-opacity="0.35"/><line x1="1387" y1="386" x2="1439" y2="395" stroke-opacity="0.40"/><line x1="1439" y1="395" x2="1562" y2="416" stroke-opacity="0.45"/><line x1="1562" y1="416" x2="1635" y2="428" stroke-opacity="0.50"/><line x1="1635" y1="428" x2="1717" y2="442" stroke-opacity="0.55"/><line x1="1717" y1="442" x2="1812" y2="459" stroke-opacity="0.60"/><line x1="1812" y1="459" x2="1921" y2="477" stroke-opacity="0.65"/><line x1="1921" y1="477" x2="2198" y2="525" stroke-opacity="0.70"/><line x1="2198" y1="525" x2="2378" y2="556" stroke-opacity="0.75"/><line x1="2378" y1="556" x2="2598" y2="594" stroke-opacity="0.80"/><line x1="1073" y1="338" x2="1098" y2="343" stroke-opacity="0.05"/><line x1="1098" y1="343" x2="1125" y2="347" stroke-opacity="0.10"/><line x1="1125" y1="347" x2="1155" y2="353" stroke-opacity="0.15"/><line x1="1155" y1="353" x2="1187" y2="359" stroke-opacity="0.20"/><line x1="1187" y1="359" x2="1259" y2="372" stroke-opacity="0.25"/><line x1="1259" y1="372" x2="1301" y2="379" stroke-opacity="0.30"/><line x1="1301" y1="379" x2="1346" y2="388" stroke-opacity="0.35"/><line x1="1346" y1="388" x2="1397" y2="397" stroke-opacity="0.40"/><line x1="1397" y1="397" x2="1453" y2="407" stroke-opacity="0.45"/><line x1="1453" y1="407" x2="1587" y2="431" stroke-opacity="0.50"/><line x1="1587" y1="431" x2="1668" y2="446" stroke-opacity="0.55"/><line x1="1668" y1="446" x2="1760" y2="463" stroke-opacity="0.60"/><line x1="1760" y1="463" x2="1867" y2="482" stroke-opacity="0.65"/><line x1="1867" y1="482" x2="1992" y2="505" stroke-opacity="0.70"/><line x1="1992" y1="505" x2="2319" y2="564" stroke-opacity="0.75"/><line x1="2319" y1="564" x2="2538" y2="604" stroke-opacity="0.80"/><line x1="1018" y1="335" x2="1065" y2="344" stroke-opacity="0.05"/><line x1="1065" y1="344" x2="1091" y2="349" stroke-opacity="0.10"/><line x1="1091" y1="349" x2="1120" y2="354" stroke-opacity="0.15"/><line x1="1120" y1="354" x2="1150" y2="360" stroke-opacity="0.20"/><line x1="1150" y1="360" x2="1184" y2="366" stroke-opacity="0.25"/><line x1="1184" y1="366" x2="1260" y2="381" stroke-opacity="0.30"/><line x1="1260" y1="381" x2="1305" y2="390" stroke-opacity="0.35"/><line x1="1305" y1="390" x2="1354" y2="399" stroke-opacity="0.40"/><line x1="1354" y1="399" x2="1408" y2="409" stroke-opacity="0.45"/><line x1="1408" y1="409" x2="1469" y2="421" stroke-opacity="0.50"/><line x1="1469" y1="421" x2="1617" y2="450" stroke-opacity="0.55"/><line x1="1617" y1="450" x2="1707" y2="467" stroke-opacity="0.60"/><line x1="1707" y1="467" x2="1811" y2="487" stroke-opacity="0.65"/><line x1="1811" y1="487" x2="1934" y2="510" stroke-opacity="0.70"/><line x1="1934" y1="510" x2="2080" y2="539" stroke-opacity="0.75"/><line x1="2080" y1="539" x2="2474" y2="614" stroke-opacity="0.80"/><line x1="2474" y1="614" x2="2750" y2="667" stroke-opacity="0.85"/><line x1="987" y1="336" x2="1008" y2="340" stroke-opacity="0.05"/><line x1="1008" y1="340" x2="1032" y2="345" stroke-opacity="0.10"/><line x1="1032" y1="345" x2="1084" y2="355" stroke-opacity="0.15"/><line x1="1084" y1="355" x2="1113" y2="361" stroke-opacity="0.20"/><line x1="1113" y1="361" x2="1146" y2="368" stroke-opacity="0.25"/><line x1="1146" y1="368" x2="1181" y2="375" stroke-opacity="0.30"/><line x1="1181" y1="375" x2="1219" y2="383" stroke-opacity="0.35"/><line x1="1219" y1="383" x2="1309" y2="401" stroke-opacity="0.40"/><line x1="1309" y1="401" x2="1362" y2="412" stroke-opacity="0.45"/><line x1="1362" y1="412" x2="1421" y2="424" stroke-opacity="0.50"/><line x1="1421" y1="424" x2="1488" y2="438" stroke-opacity="0.55"/><line x1="1488" y1="438" x2="1652" y2="471" stroke-opacity="0.60"/><line x1="1652" y1="471" x2="1754" y2="492" stroke-opacity="0.65"/><line x1="1754" y1="492" x2="1874" y2="516" stroke-opacity="0.70"/><line x1="1874" y1="516" x2="2017" y2="546" stroke-opacity="0.75"/><line x1="2017" y1="546" x2="2191" y2="581" stroke-opacity="0.80"/><line x1="2191" y1="581" x2="2683" y2="681" stroke-opacity="0.85"/><line x1="955" y1="337" x2="975" y2="341" stroke-opacity="0.05"/><line x1="975" y1="341" x2="998" y2="346" stroke-opacity="0.10"/><line x1="998" y1="346" x2="1022" y2="351" stroke-opacity="0.15"/><line x1="1022" y1="351" x2="1076" y2="363" stroke-opacity="0.20"/><line x1="1076" y1="363" x2="1106" y2="370" stroke-opacity="0.25"/><line x1="1106" y1="370" x2="1140" y2="377" stroke-opacity="0.30"/><line x1="1140" y1="377" x2="1177" y2="385" stroke-opacity="0.35"/><line x1="1177" y1="385" x2="1218" y2="394" stroke-opacity="0.40"/><line x1="1218" y1="394" x2="1314" y2="415" stroke-opacity="0.45"/><line x1="1314" y1="415" x2="1371" y2="427" stroke-opacity="0.50"/><line x1="1371" y1="427" x2="1436" y2="441" stroke-opacity="0.55"/><line x1="1436" y1="441" x2="1510" y2="457" stroke-opacity="0.60"/><line x1="1510" y1="457" x2="1595" y2="476" stroke-opacity="0.65"/><line x1="1595" y1="476" x2="1811" y2="523" stroke-opacity="0.70"/><line x1="1811" y1="523" x2="1951" y2="553" stroke-opacity="0.75"/><line x1="1951" y1="553" x2="2123" y2="591" stroke-opacity="0.80"/><line x1="2123" y1="591" x2="2337" y2="637" stroke-opacity="0.85"/><line x1="2337" y1="637" x2="2611" y2="697" stroke-opacity="0.90"/><line x1="922" y1="338" x2="942" y2="342" stroke-opacity="0.05"/><line x1="942" y1="342" x2="963" y2="347" stroke-opacity="0.10"/><line x1="963" y1="347" x2="986" y2="352" stroke-opacity="0.15"/><line x1="986" y1="352" x2="1010" y2="358" stroke-opacity="0.20"/><line x1="1010" y1="358" x2="1067" y2="371" stroke-opacity="0.25"/><line x1="1067" y1="371" x2="1099" y2="379" stroke-opacity="0.30"/><line x1="1099" y1="379" x2="1134" y2="387" stroke-opacity="0.35"/><line x1="1134" y1="387" x2="1173" y2="396" stroke-opacity="0.40"/><line x1="1173" y1="396" x2="1217" y2="406" stroke-opacity="0.45"/><line x1="1217" y1="406" x2="1320" y2="430" stroke-opacity="0.50"/><line x1="1320" y1="430" x2="1382" y2="445" stroke-opacity="0.55"/><line x1="1382" y1="445" x2="1453" y2="461" stroke-opacity="0.60"/><line x1="1453" y1="461" x2="1536" y2="480" stroke-opacity="0.65"/><line x1="1536" y1="480" x2="1632" y2="503" stroke-opacity="0.70"/><line x1="1632" y1="503" x2="1883" y2="561" stroke-opacity="0.75"/><line x1="1883" y1="561" x2="2051" y2="600" stroke-opacity="0.80"/><line x1="2051" y1="600" x2="2262" y2="649" stroke-opacity="0.85"/><line x1="2262" y1="649" x2="2534" y2="713" stroke-opacity="0.90"/><line x1="872" y1="334" x2="908" y2="343" stroke-opacity="0.05"/><line x1="908" y1="343" x2="928" y2="348" stroke-opacity="0.10"/><line x1="928" y1="348" x2="949" y2="354" stroke-opacity="0.15"/><line x1="949" y1="354" x2="973" y2="360" stroke-opacity="0.20"/><line x1="973" y1="360" x2="998" y2="366" stroke-opacity="0.25"/><line x1="998" y1="366" x2="1056" y2="380" stroke-opacity="0.30"/><line x1="1056" y1="380" x2="1090" y2="389" stroke-opacity="0.35"/><line x1="1090" y1="389" x2="1127" y2="398" stroke-opacity="0.40"/><line x1="1127" y1="398" x2="1169" y2="409" stroke-opacity="0.45"/><line x1="1169" y1="409" x2="1215" y2="420" stroke-opacity="0.50"/><line x1="1215" y1="420" x2="1327" y2="448" stroke-opacity="0.55"/><line x1="1327" y1="448" x2="1395" y2="465" stroke-opacity="0.60"/><line x1="1395" y1="465" x2="1474" y2="485" stroke-opacity="0.65"/><line x1="1474" y1="485" x2="1567" y2="508" stroke-opacity="0.70"/><line x1="1567" y1="508" x2="1677" y2="536" stroke-opacity="0.75"/><line x1="1677" y1="536" x2="1975" y2="611" stroke-opacity="0.80"/><line x1="1975" y1="611" x2="2182" y2="662" stroke-opacity="0.85"/><line x1="2182" y1="662" x2="2818" y2="822" stroke-opacity="0.90"/><line x1="839" y1="335" x2="856" y2="340" stroke-opacity="0.05"/><line x1="856" y1="340" x2="892" y2="349" stroke-opacity="0.10"/><line x1="892" y1="349" x2="912" y2="355" stroke-opacity="0.15"/><line x1="912" y1="355" x2="934" y2="361" stroke-opacity="0.20"/><line x1="934" y1="361" x2="958" y2="367" stroke-opacity="0.25"/><line x1="958" y1="367" x2="984" y2="375" stroke-opacity="0.30"/><line x1="984" y1="375" x2="1045" y2="391" stroke-opacity="0.35"/><line x1="1045" y1="391" x2="1080" y2="401" stroke-opacity="0.40"/><line x1="1080" y1="401" x2="1119" y2="411" stroke-opacity="0.45"/><line x1="1119" y1="411" x2="1163" y2="423" stroke-opacity="0.50"/><line x1="1163" y1="423" x2="1213" y2="437" stroke-opacity="0.55"/><line x1="1213" y1="437" x2="1335" y2="470" stroke-opacity="0.60"/><line x1="1335" y1="470" x2="1411" y2="490" stroke-opacity="0.65"/><line x1="1411" y1="490" x2="1500" y2="514" stroke-opacity="0.70"/><line x1="1500" y1="514" x2="1606" y2="543" stroke-opacity="0.75"/><line x1="1606" y1="543" x2="1735" y2="578" stroke-opacity="0.80"/><line x1="1735" y1="578" x2="2098" y2="676" stroke-opacity="0.85"/><line x1="2098" y1="676" x2="2729" y2="848" stroke-opacity="0.90"/><line x1="806" y1="336" x2="821" y2="341" stroke-opacity="0.05"/><line x1="821" y1="341" x2="838" y2="346" stroke-opacity="0.10"/><line x1="838" y1="346" x2="874" y2="356" stroke-opacity="0.15"/><line x1="874" y1="356" x2="895" y2="362" stroke-opacity="0.20"/><line x1="895" y1="362" x2="917" y2="369" stroke-opacity="0.25"/><line x1="917" y1="369" x2="942" y2="376" stroke-opacity="0.30"/><line x1="942" y1="376" x2="969" y2="384" stroke-opacity="0.35"/><line x1="969" y1="384" x2="1032" y2="403" stroke-opacity="0.40"/><line x1="1032" y1="403" x2="1069" y2="414" stroke-opacity="0.45"/><line x1="1069" y1="414" x2="1110" y2="426" stroke-opacity="0.50"/><line x1="1110" y1="426" x2="1157" y2="440" stroke-opacity="0.55"/><line x1="1157" y1="440" x2="1211" y2="456" stroke-opacity="0.60"/><line x1="1211" y1="456" x2="1345" y2="495" stroke-opacity="0.65"/><line x1="1345" y1="495" x2="1430" y2="521" stroke-opacity="0.70"/><line x1="1430" y1="521" x2="1532" y2="551" stroke-opacity="0.75"/><line x1="1532" y1="551" x2="1656" y2="587" stroke-opacity="0.80"/><line x1="1656" y1="587" x2="1810" y2="633" stroke-opacity="0.85"/><line x1="1810" y1="633" x2="2633" y2="876" stroke-opacity="0.90"/><line x1="773" y1="337" x2="787" y2="342" stroke-opacity="0.05"/><line x1="787" y1="342" x2="802" y2="347" stroke-opacity="0.10"/><line x1="802" y1="347" x2="818" y2="352" stroke-opacity="0.15"/><line x1="818" y1="352" x2="855" y2="364" stroke-opacity="0.20"/><line x1="855" y1="364" x2="875" y2="371" stroke-opacity="0.25"/><line x1="875" y1="371" x2="898" y2="378" stroke-opacity="0.30"/><line x1="898" y1="378" x2="923" y2="386" stroke-opacity="0.35"/><line x1="923" y1="386" x2="951" y2="395" stroke-opacity="0.40"/><line x1="951" y1="395" x2="1017" y2="416" stroke-opacity="0.45"/><line x1="1017" y1="416" x2="1056" y2="429" stroke-opacity="0.50"/><line x1="1056" y1="429" x2="1100" y2="443" stroke-opacity="0.55"/><line x1="1100" y1="443" x2="1150" y2="460" stroke-opacity="0.60"/><line x1="1150" y1="460" x2="1208" y2="479" stroke-opacity="0.65"/><line x1="1208" y1="479" x2="1357" y2="527" stroke-opacity="0.70"/><line x1="1357" y1="527" x2="1454" y2="558" stroke-opacity="0.75"/><line x1="1454" y1="558" x2="1572" y2="597" stroke-opacity="0.80"/><line x1="1572" y1="597" x2="1721" y2="645" stroke-opacity="0.85"/><line x1="1721" y1="645" x2="2527" y2="907" stroke-opacity="0.90"/><line x1="726" y1="334" x2="751" y2="343" stroke-opacity="0.05"/><line x1="751" y1="343" x2="765" y2="348" stroke-opacity="0.10"/><line x1="765" y1="348" x2="780" y2="353" stroke-opacity="0.15"/><line x1="780" y1="353" x2="796" y2="359" stroke-opacity="0.20"/><line x1="796" y1="359" x2="814" y2="365" stroke-opacity="0.25"/><line x1="814" y1="365" x2="854" y2="380" stroke-opacity="0.30"/><line x1="854" y1="380" x2="877" y2="388" stroke-opacity="0.35"/><line x1="877" y1="388" x2="903" y2="397" stroke-opacity="0.40"/><line x1="903" y1="397" x2="931" y2="408" stroke-opacity="0.45"/><line x1="931" y1="408" x2="963" y2="419" stroke-opacity="0.50"/><line x1="963" y1="419" x2="1040" y2="447" stroke-opacity="0.55"/><line x1="1040" y1="447" x2="1087" y2="464" stroke-opacity="0.60"/><line x1="1087" y1="464" x2="1142" y2="484" stroke-opacity="0.65"/><line x1="1142" y1="484" x2="1205" y2="506" stroke-opacity="0.70"/><line x1="1205" y1="506" x2="1281" y2="534" stroke-opacity="0.75"/><line x1="1281" y1="534" x2="1484" y2="607" stroke-opacity="0.80"/><line x1="1484" y1="607" x2="1626" y2="658" stroke-opacity="0.85"/><line x1="1626" y1="658" x2="2957" y2="1137" stroke-opacity="0.90"/><line x1="693" y1="335" x2="704" y2="339" stroke-opacity="0.05"/><line x1="704" y1="339" x2="728" y2="349" stroke-opacity="0.10"/><line x1="728" y1="349" x2="741" y2="354" stroke-opacity="0.15"/><line x1="741" y1="354" x2="756" y2="360" stroke-opacity="0.20"/><line x1="756" y1="360" x2="772" y2="367" stroke-opacity="0.25"/><line x1="772" y1="367" x2="789" y2="374" stroke-opacity="0.30"/><line x1="789" y1="374" x2="830" y2="390" stroke-opacity="0.35"/><line x1="830" y1="390" x2="853" y2="400" stroke-opacity="0.40"/><line x1="853" y1="400" x2="879" y2="410" stroke-opacity="0.45"/><line x1="879" y1="410" x2="908" y2="422" stroke-opacity="0.50"/><line x1="908" y1="422" x2="941" y2="435" stroke-opacity="0.55"/><line x1="941" y1="435" x2="1022" y2="468" stroke-opacity="0.60"/><line x1="1022" y1="468" x2="1072" y2="488" stroke-opacity="0.65"/><line x1="1072" y1="488" x2="1131" y2="512" stroke-opacity="0.70"/><line x1="1131" y1="512" x2="1202" y2="541" stroke-opacity="0.75"/><line x1="1202" y1="541" x2="1287" y2="575" stroke-opacity="0.80"/><line x1="1287" y1="575" x2="1525" y2="671" stroke-opacity="0.85"/><line x1="1525" y1="671" x2="2828" y2="1198" stroke-opacity="0.90"/><line x1="659" y1="336" x2="668" y2="340" stroke-opacity="0.05"/><line x1="668" y1="340" x2="679" y2="345" stroke-opacity="0.10"/><line x1="679" y1="345" x2="702" y2="356" stroke-opacity="0.15"/><line x1="702" y1="356" x2="715" y2="362" stroke-opacity="0.20"/><line x1="715" y1="362" x2="729" y2="368" stroke-opacity="0.25"/><line x1="729" y1="368" x2="745" y2="376" stroke-opacity="0.30"/><line x1="745" y1="376" x2="762" y2="384" stroke-opacity="0.35"/><line x1="762" y1="384" x2="802" y2="402" stroke-opacity="0.40"/><line x1="802" y1="402" x2="825" y2="413" stroke-opacity="0.45"/><line x1="825" y1="413" x2="852" y2="425" stroke-opacity="0.50"/><line x1="852" y1="425" x2="882" y2="439" stroke-opacity="0.55"/><line x1="882" y1="439" x2="916" y2="455" stroke-opacity="0.60"/><line x1="916" y1="455" x2="1001" y2="494" stroke-opacity="0.65"/><line x1="1001" y1="494" x2="1054" y2="518" stroke-opacity="0.70"/><line x1="1054" y1="518" x2="1119" y2="548" stroke-opacity="0.75"/><line x1="1119" y1="548" x2="1197" y2="584" stroke-opacity="0.80"/><line x1="1197" y1="584" x2="1294" y2="629" stroke-opacity="0.85"/><line x1="1294" y1="629" x2="2681" y2="1269" stroke-opacity="0.90"/><line x1="588" y1="338" x2="596" y2="342" stroke-opacity="0.05"/><line x1="596" y1="342" x2="603" y2="347" stroke-opacity="0.10"/><line x1="603" y1="347" x2="612" y2="353" stroke-opacity="0.15"/><line x1="612" y1="353" x2="621" y2="359" stroke-opacity="0.20"/><line x1="621" y1="359" x2="641" y2="372" stroke-opacity="0.25"/><line x1="641" y1="372" x2="653" y2="379" stroke-opacity="0.30"/><line x1="653" y1="379" x2="666" y2="387" stroke-opacity="0.35"/><line x1="666" y1="387" x2="680" y2="397" stroke-opacity="0.40"/><line x1="680" y1="397" x2="696" y2="407" stroke-opacity="0.45"/><line x1="696" y1="407" x2="734" y2="431" stroke-opacity="0.50"/><line x1="734" y1="431" x2="757" y2="446" stroke-opacity="0.55"/><line x1="757" y1="446" x2="783" y2="462" stroke-opacity="0.60"/><line x1="783" y1="462" x2="813" y2="482" stroke-opacity="0.65"/><line x1="813" y1="482" x2="848" y2="504" stroke-opacity="0.70"/><line x1="848" y1="504" x2="941" y2="564" stroke-opacity="0.75"/><line x1="941" y1="564" x2="1003" y2="603" stroke-opacity="0.80"/><line x1="1003" y1="603" x2="1081" y2="653" stroke-opacity="0.85"/><line x1="1081" y1="653" x2="1806" y2="1118" stroke-opacity="0.90"/><line x1="552" y1="339" x2="558" y2="344" stroke-opacity="0.05"/><line x1="558" y1="344" x2="565" y2="349" stroke-opacity="0.10"/><line x1="565" y1="349" x2="571" y2="354" stroke-opacity="0.15"/><line x1="571" y1="354" x2="579" y2="360" stroke-opacity="0.20"/><line x1="579" y1="360" x2="587" y2="366" stroke-opacity="0.25"/><line x1="587" y1="366" x2="605" y2="381" stroke-opacity="0.30"/><line x1="605" y1="381" x2="616" y2="390" stroke-opacity="0.35"/><line x1="616" y1="390" x2="628" y2="399" stroke-opacity="0.40"/><line x1="628" y1="399" x2="641" y2="409" stroke-opacity="0.45"/><line x1="641" y1="409" x2="656" y2="421" stroke-opacity="0.50"/><line x1="656" y1="421" x2="691" y2="449" stroke-opacity="0.55"/><line x1="691" y1="449" x2="713" y2="467" stroke-opacity="0.60"/><line x1="713" y1="467" x2="738" y2="487" stroke-opacity="0.65"/><line x1="738" y1="487" x2="768" y2="510" stroke-opacity="0.70"/><line x1="768" y1="510" x2="803" y2="538" stroke-opacity="0.75"/><line x1="803" y1="538" x2="898" y2="614" stroke-opacity="0.80"/><line x1="898" y1="614" x2="964" y2="667" stroke-opacity="0.85"/><line x1="964" y1="667" x2="1605" y2="1176" stroke-opacity="0.90"/><line x1="516" y1="340" x2="525" y2="350" stroke-opacity="0.10"/><line x1="525" y1="350" x2="531" y2="355" stroke-opacity="0.15"/><line x1="531" y1="355" x2="536" y2="361" stroke-opacity="0.20"/><line x1="536" y1="361" x2="542" y2="368" stroke-opacity="0.25"/><line x1="542" y1="368" x2="549" y2="375" stroke-opacity="0.30"/><line x1="549" y1="375" x2="565" y2="392" stroke-opacity="0.35"/><line x1="565" y1="392" x2="574" y2="401" stroke-opacity="0.40"/><line x1="574" y1="401" x2="584" y2="412" stroke-opacity="0.45"/><line x1="584" y1="412" x2="596" y2="424" stroke-opacity="0.50"/><line x1="596" y1="424" x2="609" y2="438" stroke-opacity="0.55"/><line x1="609" y1="438" x2="641" y2="471" stroke-opacity="0.60"/><line x1="641" y1="471" x2="661" y2="492" stroke-opacity="0.65"/><line x1="661" y1="492" x2="684" y2="516" stroke-opacity="0.70"/><line x1="684" y1="516" x2="712" y2="545" stroke-opacity="0.75"/><line x1="712" y1="545" x2="745" y2="581" stroke-opacity="0.80"/><line x1="745" y1="581" x2="841" y2="681" stroke-opacity="0.85"/><line x1="841" y1="681" x2="1377" y2="1243" stroke-opacity="0.90"/><line x1="479" y1="341" x2="482" y2="346" stroke-opacity="0.10"/><line x1="482" y1="346" x2="485" y2="351" stroke-opacity="0.15"/><line x1="485" y1="351" x2="493" y2="363" stroke-opacity="0.20"/><line x1="493" y1="363" x2="497" y2="369" stroke-opacity="0.25"/><line x1="497" y1="369" x2="502" y2="377" stroke-opacity="0.30"/><line x1="502" y1="377" x2="507" y2="385" stroke-opacity="0.35"/><line x1="507" y1="385" x2="513" y2="394" stroke-opacity="0.40"/><line x1="513" y1="394" x2="526" y2="415" stroke-opacity="0.45"/><line x1="526" y1="415" x2="534" y2="427" stroke-opacity="0.50"/><line x1="534" y1="427" x2="544" y2="441" stroke-opacity="0.55"/><line x1="544" y1="441" x2="554" y2="457" stroke-opacity="0.60"/><line x1="554" y1="457" x2="566" y2="476" stroke-opacity="0.65"/><line x1="566" y1="476" x2="596" y2="522" stroke-opacity="0.70"/><line x1="596" y1="522" x2="616" y2="553" stroke-opacity="0.75"/><line x1="616" y1="553" x2="640" y2="590" stroke-opacity="0.80"/><line x1="640" y1="590" x2="670" y2="637" stroke-opacity="0.85"/><line x1="670" y1="637" x2="1114" y2="1320" stroke-opacity="0.90"/><line x1="441" y1="342" x2="443" y2="347" stroke-opacity="0.10"/><line x1="443" y1="347" x2="444" y2="352" stroke-opacity="0.15"/><line x1="444" y1="352" x2="446" y2="358" stroke-opacity="0.20"/><line x1="446" y1="358" x2="451" y2="371" stroke-opacity="0.25"/><line x1="451" y1="371" x2="453" y2="379" stroke-opacity="0.30"/><line x1="453" y1="379" x2="456" y2="387" stroke-opacity="0.35"/><line x1="456" y1="387" x2="459" y2="396" stroke-opacity="0.40"/><line x1="459" y1="396" x2="463" y2="406" stroke-opacity="0.45"/><line x1="463" y1="406" x2="471" y2="430" stroke-opacity="0.50"/><line x1="471" y1="430" x2="476" y2="445" stroke-opacity="0.55"/><line x1="476" y1="445" x2="482" y2="461" stroke-opacity="0.60"/><line x1="482" y1="461" x2="489" y2="480" stroke-opacity="0.65"/><line x1="489" y1="480" x2="496" y2="503" stroke-opacity="0.70"/><line x1="496" y1="503" x2="516" y2="561" stroke-opacity="0.75"/><line x1="516" y1="561" x2="530" y2="600" stroke-opacity="0.80"/><line x1="530" y1="600" x2="547" y2="649" stroke-opacity="0.85"/><line x1="547" y1="649" x2="809" y2="1409" stroke-opacity="0.90"/><line x1="402" y1="343" x2="403" y2="348" stroke-opacity="0.10"/><line x1="403" y1="348" x2="403" y2="354" stroke-opacity="0.15"/><line x1="403" y1="354" x2="403" y2="359" stroke-opacity="0.20"/><line x1="403" y1="359" x2="403" y2="366" stroke-opacity="0.25"/><line x1="403" y1="366" x2="404" y2="380" stroke-opacity="0.30"/><line x1="404" y1="380" x2="404" y2="389" stroke-opacity="0.35"/><line x1="404" y1="389" x2="405" y2="398" stroke-opacity="0.40"/><line x1="405" y1="398" x2="405" y2="409" stroke-opacity="0.45"/><line x1="405" y1="409" x2="406" y2="420" stroke-opacity="0.50"/><line x1="406" y1="420" x2="407" y2="448" stroke-opacity="0.55"/><line x1="407" y1="448" x2="407" y2="465" stroke-opacity="0.60"/><line x1="407" y1="465" x2="408" y2="485" stroke-opacity="0.65"/><line x1="408" y1="485" x2="409" y2="508" stroke-opacity="0.70"/><line x1="409" y1="508" x2="410" y2="536" stroke-opacity="0.75"/><line x1="410" y1="536" x2="413" y2="610" stroke-opacity="0.80"/><line x1="413" y1="610" x2="415" y2="662" stroke-opacity="0.85"/><line x1="415" y1="662" x2="436" y2="1155" stroke-opacity="0.90"/><line x1="363" y1="344" x2="362" y2="349" stroke-opacity="0.10"/><line x1="362" y1="349" x2="360" y2="355" stroke-opacity="0.15"/><line x1="360" y1="355" x2="359" y2="361" stroke-opacity="0.20"/><line x1="359" y1="361" x2="357" y2="367" stroke-opacity="0.25"/><line x1="357" y1="367" x2="355" y2="374" stroke-opacity="0.30"/><line x1="355" y1="374" x2="351" y2="391" stroke-opacity="0.35"/><line x1="351" y1="391" x2="348" y2="400" stroke-opacity="0.40"/><line x1="348" y1="400" x2="346" y2="411" stroke-opacity="0.45"/><line x1="346" y1="411" x2="343" y2="423" stroke-opacity="0.50"/><line x1="343" y1="423" x2="339" y2="436" stroke-opacity="0.55"/><line x1="339" y1="436" x2="330" y2="470" stroke-opacity="0.60"/><line x1="330" y1="470" x2="325" y2="490" stroke-opacity="0.65"/><line x1="325" y1="490" x2="319" y2="514" stroke-opacity="0.70"/><line x1="319" y1="514" x2="311" y2="543" stroke-opacity="0.75"/><line x1="311" y1="543" x2="302" y2="578" stroke-opacity="0.80"/><line x1="302" y1="578" x2="276" y2="676" stroke-opacity="0.85"/><line x1="276" y1="676" x2="133" y2="1219" stroke-opacity="0.90"/><line x1="323" y1="345" x2="317" y2="356" stroke-opacity="0.15"/><line x1="317" y1="356" x2="314" y2="362" stroke-opacity="0.20"/><line x1="314" y1="362" x2="310" y2="369" stroke-opacity="0.25"/><line x1="310" y1="369" x2="306" y2="376" stroke-opacity="0.30"/><line x1="306" y1="376" x2="301" y2="384" stroke-opacity="0.35"/><line x1="301" y1="384" x2="291" y2="403" stroke-opacity="0.40"/><line x1="291" y1="403" x2="285" y2="414" stroke-opacity="0.45"/><line x1="285" y1="414" x2="278" y2="426" stroke-opacity="0.50"/><line x1="278" y1="426" x2="270" y2="440" stroke-opacity="0.55"/><line x1="270" y1="440" x2="261" y2="456" stroke-opacity="0.60"/><line x1="261" y1="456" x2="238" y2="495" stroke-opacity="0.65"/><line x1="238" y1="495" x2="224" y2="520" stroke-opacity="0.70"/><line x1="224" y1="520" x2="207" y2="550" stroke-opacity="0.75"/><line x1="207" y1="550" x2="187" y2="587" stroke-opacity="0.80"/><line x1="187" y1="587" x2="161" y2="632" stroke-opacity="0.85"/><line x1="161" y1="632" x2="-67" y2="1033" stroke-opacity="0.90"/><line x1="283" y1="347" x2="278" y2="352" stroke-opacity="0.15"/><line x1="278" y1="352" x2="268" y2="364" stroke-opacity="0.20"/><line x1="268" y1="364" x2="262" y2="371" stroke-opacity="0.25"/><line x1="262" y1="371" x2="256" y2="378" stroke-opacity="0.30"/><line x1="256" y1="378" x2="248" y2="386" stroke-opacity="0.35"/><line x1="248" y1="386" x2="241" y2="395" stroke-opacity="0.40"/><line x1="241" y1="395" x2="222" y2="416" stroke-opacity="0.45"/><line x1="222" y1="416" x2="211" y2="429" stroke-opacity="0.50"/><line x1="211" y1="429" x2="199" y2="443" stroke-opacity="0.55"/><line x1="199" y1="443" x2="184" y2="460" stroke-opacity="0.60"/><line x1="184" y1="460" x2="168" y2="479" stroke-opacity="0.65"/><line x1="168" y1="479" x2="126" y2="527" stroke-opacity="0.70"/><line x1="126" y1="527" x2="99" y2="558" stroke-opacity="0.75"/><line x1="99" y1="558" x2="65" y2="596" stroke-opacity="0.80"/><line x1="65" y1="596" x2="23" y2="644" stroke-opacity="0.85"/><line x1="23" y1="644" x2="-103" y2="789" stroke-opacity="0.90"/><line x1="242" y1="348" x2="235" y2="353" stroke-opacity="0.15"/><line x1="235" y1="353" x2="228" y2="359" stroke-opacity="0.20"/><line x1="228" y1="359" x2="221" y2="365" stroke-opacity="0.25"/><line x1="221" y1="365" x2="204" y2="380" stroke-opacity="0.30"/><line x1="204" y1="380" x2="194" y2="388" stroke-opacity="0.35"/><line x1="194" y1="388" x2="183" y2="397" stroke-opacity="0.40"/><line x1="183" y1="397" x2="171" y2="408" stroke-opacity="0.45"/><line x1="171" y1="408" x2="158" y2="419" stroke-opacity="0.50"/><line x1="158" y1="419" x2="125" y2="447" stroke-opacity="0.55"/><line x1="125" y1="447" x2="105" y2="464" stroke-opacity="0.60"/><line x1="105" y1="464" x2="82" y2="483" stroke-opacity="0.65"/><line x1="82" y1="483" x2="55" y2="506" stroke-opacity="0.70"/><line x1="55" y1="506" x2="23" y2="533" stroke-opacity="0.75"/><line x1="23" y1="533" x2="-62" y2="607" stroke-opacity="0.80"/><line x1="200" y1="349" x2="191" y2="354" stroke-opacity="0.15"/><line x1="191" y1="354" x2="183" y2="360" stroke-opacity="0.20"/><line x1="183" y1="360" x2="173" y2="367" stroke-opacity="0.25"/><line x1="173" y1="367" x2="163" y2="374" stroke-opacity="0.30"/><line x1="163" y1="374" x2="139" y2="390" stroke-opacity="0.35"/><line x1="139" y1="390" x2="125" y2="400" stroke-opacity="0.40"/><line x1="125" y1="400" x2="109" y2="410" stroke-opacity="0.45"/><line x1="109" y1="410" x2="92" y2="422" stroke-opacity="0.50"/><line x1="92" y1="422" x2="72" y2="435" stroke-opacity="0.55"/><line x1="72" y1="435" x2="23" y2="468" stroke-opacity="0.60"/><line x1="23" y1="468" x2="-6" y2="488" stroke-opacity="0.65"/><line x1="-6" y1="488" x2="-42" y2="512" stroke-opacity="0.70"/><line x1="-42" y1="512" x2="-84" y2="540" stroke-opacity="0.75"/><line x1="157" y1="350" x2="147" y2="356" stroke-opacity="0.15"/><line x1="147" y1="356" x2="136" y2="362" stroke-opacity="0.20"/><line x1="136" y1="362" x2="124" y2="368" stroke-opacity="0.25"/><line x1="124" y1="368" x2="111" y2="376" stroke-opacity="0.30"/><line x1="111" y1="376" x2="97" y2="383" stroke-opacity="0.35"/><line x1="97" y1="383" x2="64" y2="402" stroke-opacity="0.40"/><line x1="64" y1="402" x2="45" y2="413" stroke-opacity="0.45"/><line x1="45" y1="413" x2="24" y2="425" stroke-opacity="0.50"/><line x1="24" y1="425" x2="-1" y2="439" stroke-opacity="0.55"/><line x1="-1" y1="439" x2="-29" y2="454" stroke-opacity="0.60"/><line x1="-29" y1="454" x2="-61" y2="472" stroke-opacity="0.65"/><line x1="113" y1="351" x2="88" y2="363" stroke-opacity="0.20"/><line x1="88" y1="363" x2="74" y2="370" stroke-opacity="0.25"/><line x1="74" y1="370" x2="59" y2="377" stroke-opacity="0.30"/><line x1="59" y1="377" x2="42" y2="385" stroke-opacity="0.35"/><line x1="42" y1="385" x2="24" y2="394" stroke-opacity="0.40"/><line x1="24" y1="394" x2="-20" y2="415" stroke-opacity="0.45"/><line x1="-20" y1="415" x2="-46" y2="428" stroke-opacity="0.50"/><line x1="-46" y1="428" x2="-76" y2="442" stroke-opacity="0.55"/><line x1="69" y1="353" x2="55" y2="358" stroke-opacity="0.20"/><line x1="55" y1="358" x2="24" y2="372" stroke-opacity="0.25"/><line x1="24" y1="372" x2="6" y2="379" stroke-opacity="0.30"/><line x1="6" y1="379" x2="-14" y2="387" stroke-opacity="0.35"/><line x1="-14" y1="387" x2="-36" y2="397" stroke-opacity="0.40"/><line x1="-36" y1="397" x2="-60" y2="407" stroke-opacity="0.45"/><line x1="24" y1="354" x2="8" y2="360" stroke-opacity="0.20"/><line x1="8" y1="360" x2="-10" y2="366" stroke-opacity="0.25"/><line x1="-10" y1="366" x2="-49" y2="381" stroke-opacity="0.30"/><line x1="-49" y1="381" x2="-72" y2="389" stroke-opacity="0.35"/><line x1="-23" y1="355" x2="-41" y2="361" stroke-opacity="0.20"/><line x1="-41" y1="361" x2="-60" y2="368" stroke-opacity="0.25"/><line x1="242" y1="348" x2="157" y2="350" stroke-opacity="0.10"/><line x1="157" y1="350" x2="69" y2="353" stroke-opacity="0.15"/><line x1="69" y1="353" x2="-117" y2="358" stroke-opacity="0.20"/><line x1="766" y1="335" x2="555" y2="341" stroke-opacity="0.05"/><line x1="322" y1="348" x2="238" y2="350" stroke-opacity="0.05"/><line x1="238" y1="350" x2="152" y2="353" stroke-opacity="0.10"/><line x1="152" y1="353" x2="-128" y2="361" stroke-opacity="0.20"/><line x1="839" y1="335" x2="558" y2="344" stroke-opacity="0.05"/><line x1="320" y1="351" x2="235" y2="353" stroke-opacity="0.05"/><line x1="235" y1="353" x2="147" y2="356" stroke-opacity="0.15"/><line x1="147" y1="356" x2="-41" y2="361" stroke-opacity="0.20"/><line x1="-41" y1="361" x2="-140" y2="364" stroke-opacity="0.25"/><line x1="913" y1="335" x2="709" y2="342" stroke-opacity="0.05"/><line x1="709" y1="342" x2="637" y2="344" stroke-opacity="0.10"/><line x1="637" y1="344" x2="483" y2="348" stroke-opacity="0.05"/><line x1="319" y1="353" x2="232" y2="356" stroke-opacity="0.05"/><line x1="232" y1="356" x2="142" y2="359" stroke-opacity="0.15"/><line x1="142" y1="359" x2="48" y2="362" stroke-opacity="0.20"/><line x1="48" y1="362" x2="-50" y2="364" stroke-opacity="0.25"/><line x1="987" y1="336" x2="787" y2="342" stroke-opacity="0.05"/><line x1="787" y1="342" x2="565" y2="349" stroke-opacity="0.10"/><line x1="565" y1="349" x2="485" y2="351" stroke-opacity="0.05"/><line x1="317" y1="356" x2="228" y2="359" stroke-opacity="0.05"/><line x1="228" y1="359" x2="136" y2="362" stroke-opacity="0.20"/><line x1="136" y1="362" x2="-60" y2="368" stroke-opacity="0.25"/><line x1="1061" y1="336" x2="864" y2="342" stroke-opacity="0.05"/><line x1="864" y1="342" x2="721" y2="346" stroke-opacity="0.10"/><line x1="721" y1="346" x2="646" y2="349" stroke-opacity="0.15"/><line x1="646" y1="349" x2="568" y2="351" stroke-opacity="0.10"/><line x1="568" y1="351" x2="487" y2="354" stroke-opacity="0.05"/><line x1="316" y1="359" x2="225" y2="362" stroke-opacity="0.10"/><line x1="225" y1="362" x2="32" y2="368" stroke-opacity="0.25"/><line x1="32" y1="368" x2="-71" y2="371" stroke-opacity="0.30"/><line x1="1135" y1="336" x2="942" y2="342" stroke-opacity="0.05"/><line x1="942" y1="342" x2="802" y2="347" stroke-opacity="0.10"/><line x1="802" y1="347" x2="571" y2="354" stroke-opacity="0.15"/><line x1="571" y1="354" x2="489" y2="357" stroke-opacity="0.05"/><line x1="403" y1="359" x2="314" y2="362" stroke-opacity="0.05"/><line x1="314" y1="362" x2="221" y2="365" stroke-opacity="0.10"/><line x1="221" y1="365" x2="124" y2="368" stroke-opacity="0.25"/><line x1="124" y1="368" x2="-82" y2="375" stroke-opacity="0.30"/><line x1="1210" y1="336" x2="1020" y2="342" stroke-opacity="0.05"/><line x1="1020" y1="342" x2="882" y2="347" stroke-opacity="0.10"/><line x1="882" y1="347" x2="575" y2="357" stroke-opacity="0.15"/><line x1="575" y1="357" x2="491" y2="360" stroke-opacity="0.10"/><line x1="491" y1="360" x2="312" y2="366" stroke-opacity="0.05"/><line x1="312" y1="366" x2="217" y2="369" stroke-opacity="0.15"/><line x1="217" y1="369" x2="-93" y2="379" stroke-opacity="0.30"/><line x1="1284" y1="336" x2="1162" y2="340" stroke-opacity="0.05"/><line x1="1162" y1="340" x2="963" y2="347" stroke-opacity="0.10"/><line x1="963" y1="347" x2="741" y2="354" stroke-opacity="0.15"/><line x1="741" y1="354" x2="579" y2="360" stroke-opacity="0.20"/><line x1="579" y1="360" x2="493" y2="363" stroke-opacity="0.10"/><line x1="493" y1="363" x2="310" y2="369" stroke-opacity="0.05"/><line x1="310" y1="369" x2="213" y2="372" stroke-opacity="0.20"/><line x1="213" y1="372" x2="6" y2="379" stroke-opacity="0.30"/><line x1="6" y1="379" x2="-105" y2="383" stroke-opacity="0.35"/><line x1="1359" y1="336" x2="1239" y2="341" stroke-opacity="0.05"/><line x1="1239" y1="341" x2="1044" y2="347" stroke-opacity="0.10"/><line x1="1044" y1="347" x2="826" y2="355" stroke-opacity="0.15"/><line x1="826" y1="355" x2="667" y2="360" stroke-opacity="0.20"/><line x1="667" y1="360" x2="583" y2="363" stroke-opacity="0.25"/><line x1="583" y1="363" x2="495" y2="366" stroke-opacity="0.15"/><line x1="495" y1="366" x2="403" y2="369" stroke-opacity="0.05"/><line x1="403" y1="369" x2="308" y2="372" stroke-opacity="0.10"/><line x1="308" y1="372" x2="209" y2="376" stroke-opacity="0.20"/><line x1="209" y1="376" x2="-118" y2="387" stroke-opacity="0.35"/><line x1="1434" y1="337" x2="1317" y2="341" stroke-opacity="0.05"/><line x1="1317" y1="341" x2="1125" y2="347" stroke-opacity="0.10"/><line x1="1125" y1="347" x2="912" y2="355" stroke-opacity="0.15"/><line x1="912" y1="355" x2="756" y2="360" stroke-opacity="0.20"/><line x1="756" y1="360" x2="587" y2="366" stroke-opacity="0.25"/><line x1="587" y1="366" x2="497" y2="369" stroke-opacity="0.15"/><line x1="497" y1="369" x2="306" y2="376" stroke-opacity="0.10"/><line x1="306" y1="376" x2="204" y2="380" stroke-opacity="0.25"/><line x1="204" y1="380" x2="-14" y2="387" stroke-opacity="0.35"/><line x1="-14" y1="387" x2="-131" y2="392" stroke-opacity="0.40"/><line x1="1509" y1="337" x2="1395" y2="341" stroke-opacity="0.05"/><line x1="1395" y1="341" x2="1207" y2="348" stroke-opacity="0.10"/><line x1="1207" y1="348" x2="1070" y2="353" stroke-opacity="0.15"/><line x1="1070" y1="353" x2="845" y2="361" stroke-opacity="0.20"/><line x1="845" y1="361" x2="591" y2="370" stroke-opacity="0.25"/><line x1="591" y1="370" x2="499" y2="373" stroke-opacity="0.20"/><line x1="499" y1="373" x2="404" y2="376" stroke-opacity="0.10"/><line x1="404" y1="376" x2="304" y2="380" stroke-opacity="0.15"/><line x1="304" y1="380" x2="199" y2="384" stroke-opacity="0.30"/><line x1="199" y1="384" x2="90" y2="388" stroke-opacity="0.35"/><line x1="90" y1="388" x2="-145" y2="396" stroke-opacity="0.40"/><line x1="1585" y1="337" x2="1473" y2="341" stroke-opacity="0.05"/><line x1="1473" y1="341" x2="1289" y2="348" stroke-opacity="0.10"/><line x1="1289" y1="348" x2="1155" y2="353" stroke-opacity="0.15"/><line x1="1155" y1="353" x2="934" y2="361" stroke-opacity="0.20"/><line x1="934" y1="361" x2="686" y2="370" stroke-opacity="0.25"/><line x1="686" y1="370" x2="596" y2="373" stroke-opacity="0.30"/><line x1="596" y1="373" x2="502" y2="377" stroke-opacity="0.25"/><line x1="502" y1="377" x2="404" y2="380" stroke-opacity="0.15"/><line x1="404" y1="380" x2="301" y2="384" stroke-opacity="0.20"/><line x1="301" y1="384" x2="194" y2="388" stroke-opacity="0.35"/><line x1="194" y1="388" x2="-36" y2="397" stroke-opacity="0.40"/><line x1="-36" y1="397" x2="-160" y2="401" stroke-opacity="0.45"/><line x1="1713" y1="335" x2="1551" y2="341" stroke-opacity="0.05"/><line x1="1551" y1="341" x2="1371" y2="348" stroke-opacity="0.10"/><line x1="1371" y1="348" x2="1240" y2="353" stroke-opacity="0.15"/><line x1="1240" y1="353" x2="1024" y2="361" stroke-opacity="0.20"/><line x1="1024" y1="361" x2="865" y2="367" stroke-opacity="0.25"/><line x1="865" y1="367" x2="504" y2="381" stroke-opacity="0.30"/><line x1="504" y1="381" x2="299" y2="388" stroke-opacity="0.20"/><line x1="299" y1="388" x2="73" y2="397" stroke-opacity="0.40"/><line x1="73" y1="397" x2="-176" y2="406" stroke-opacity="0.45"/><line x1="1788" y1="335" x2="1629" y2="342" stroke-opacity="0.05"/><line x1="1629" y1="342" x2="1453" y2="348" stroke-opacity="0.10"/><line x1="1453" y1="348" x2="1325" y2="353" stroke-opacity="0.15"/><line x1="1325" y1="353" x2="1113" y2="361" stroke-opacity="0.20"/><line x1="1113" y1="361" x2="958" y2="367" stroke-opacity="0.25"/><line x1="958" y1="367" x2="699" y2="377" stroke-opacity="0.30"/><line x1="699" y1="377" x2="507" y2="385" stroke-opacity="0.35"/><line x1="507" y1="385" x2="296" y2="393" stroke-opacity="0.25"/><line x1="296" y1="393" x2="183" y2="397" stroke-opacity="0.40"/><line x1="183" y1="397" x2="-60" y2="407" stroke-opacity="0.45"/><line x1="1863" y1="336" x2="1708" y2="342" stroke-opacity="0.05"/><line x1="1708" y1="342" x2="1595" y2="346" stroke-opacity="0.10"/><line x1="1595" y1="346" x2="1410" y2="353" stroke-opacity="0.15"/><line x1="1410" y1="353" x2="1204" y2="362" stroke-opacity="0.20"/><line x1="1204" y1="362" x2="1052" y2="368" stroke-opacity="0.25"/><line x1="1052" y1="368" x2="799" y2="378" stroke-opacity="0.30"/><line x1="799" y1="378" x2="510" y2="389" stroke-opacity="0.35"/><line x1="510" y1="389" x2="294" y2="398" stroke-opacity="0.30"/><line x1="294" y1="398" x2="-74" y2="412" stroke-opacity="0.45"/><line x1="1938" y1="336" x2="1786" y2="342" stroke-opacity="0.05"/><line x1="1786" y1="342" x2="1676" y2="346" stroke-opacity="0.10"/><line x1="1676" y1="346" x2="1496" y2="354" stroke-opacity="0.15"/><line x1="1496" y1="354" x2="1294" y2="362" stroke-opacity="0.20"/><line x1="1294" y1="362" x2="1146" y2="368" stroke-opacity="0.25"/><line x1="1146" y1="368" x2="898" y2="378" stroke-opacity="0.30"/><line x1="898" y1="378" x2="714" y2="386" stroke-opacity="0.35"/><line x1="714" y1="386" x2="513" y2="394" stroke-opacity="0.40"/><line x1="513" y1="394" x2="291" y2="403" stroke-opacity="0.35"/><line x1="291" y1="403" x2="45" y2="413" stroke-opacity="0.45"/><line x1="45" y1="413" x2="-88" y2="418" stroke-opacity="0.50"/><line x1="2013" y1="336" x2="1865" y2="342" stroke-opacity="0.05"/><line x1="1865" y1="342" x2="1758" y2="347" stroke-opacity="0.10"/><line x1="1758" y1="347" x2="1582" y2="354" stroke-opacity="0.15"/><line x1="1582" y1="354" x2="1385" y2="362" stroke-opacity="0.20"/><line x1="1385" y1="362" x2="1240" y2="368" stroke-opacity="0.25"/><line x1="1240" y1="368" x2="998" y2="378" stroke-opacity="0.30"/><line x1="998" y1="378" x2="819" y2="386" stroke-opacity="0.35"/><line x1="819" y1="386" x2="405" y2="403" stroke-opacity="0.40"/><line x1="405" y1="403" x2="165" y2="413" stroke-opacity="0.45"/><line x1="165" y1="413" x2="-103" y2="424" stroke-opacity="0.50"/><line x1="2089" y1="336" x2="1945" y2="342" stroke-opacity="0.05"/><line x1="1945" y1="342" x2="1840" y2="347" stroke-opacity="0.10"/><line x1="1840" y1="347" x2="1668" y2="354" stroke-opacity="0.15"/><line x1="1668" y1="354" x2="1543" y2="360" stroke-opacity="0.20"/><line x1="1543" y1="360" x2="1334" y2="369" stroke-opacity="0.25"/><line x1="1334" y1="369" x2="1099" y2="379" stroke-opacity="0.30"/><line x1="1099" y1="379" x2="923" y2="386" stroke-opacity="0.35"/><line x1="923" y1="386" x2="628" y2="399" stroke-opacity="0.40"/><line x1="628" y1="399" x2="405" y2="409" stroke-opacity="0.45"/><line x1="405" y1="409" x2="24" y2="425" stroke-opacity="0.50"/><line x1="24" y1="425" x2="-119" y2="431" stroke-opacity="0.55"/><line x1="2120" y1="338" x2="2024" y2="342" stroke-opacity="0.05"/><line x1="2024" y1="342" x2="1922" y2="347" stroke-opacity="0.10"/><line x1="1922" y1="347" x2="1755" y2="354" stroke-opacity="0.15"/><line x1="1755" y1="354" x2="1632" y2="360" stroke-opacity="0.20"/><line x1="1632" y1="360" x2="1429" y2="369" stroke-opacity="0.25"/><line x1="1429" y1="369" x2="1199" y2="379" stroke-opacity="0.30"/><line x1="1199" y1="379" x2="1029" y2="387" stroke-opacity="0.35"/><line x1="1029" y1="387" x2="740" y2="399" stroke-opacity="0.40"/><line x1="740" y1="399" x2="523" y2="409" stroke-opacity="0.45"/><line x1="523" y1="409" x2="150" y2="425" stroke-opacity="0.50"/><line x1="150" y1="425" x2="-135" y2="438" stroke-opacity="0.55"/><line x1="2151" y1="341" x2="2005" y2="347" stroke-opacity="0.10"/><line x1="2005" y1="347" x2="1842" y2="355" stroke-opacity="0.15"/><line x1="1842" y1="355" x2="1722" y2="360" stroke-opacity="0.20"/><line x1="1722" y1="360" x2="1525" y2="369" stroke-opacity="0.25"/><line x1="1525" y1="369" x2="1379" y2="376" stroke-opacity="0.30"/><line x1="1379" y1="376" x2="1134" y2="387" stroke-opacity="0.35"/><line x1="1134" y1="387" x2="853" y2="400" stroke-opacity="0.40"/><line x1="853" y1="400" x2="641" y2="409" stroke-opacity="0.45"/><line x1="641" y1="409" x2="278" y2="426" stroke-opacity="0.50"/><line x1="278" y1="426" x2="-153" y2="446" stroke-opacity="0.55"/><line x1="2184" y1="343" x2="2087" y2="347" stroke-opacity="0.10"/><line x1="2087" y1="347" x2="1929" y2="355" stroke-opacity="0.15"/><line x1="1929" y1="355" x2="1813" y2="360" stroke-opacity="0.20"/><line x1="1813" y1="360" x2="1620" y2="369" stroke-opacity="0.25"/><line x1="1620" y1="369" x2="1478" y2="376" stroke-opacity="0.30"/><line x1="1478" y1="376" x2="1240" y2="387" stroke-opacity="0.35"/><line x1="1240" y1="387" x2="966" y2="400" stroke-opacity="0.40"/><line x1="966" y1="400" x2="760" y2="410" stroke-opacity="0.45"/><line x1="760" y1="410" x2="406" y2="426" stroke-opacity="0.50"/><line x1="406" y1="426" x2="134" y2="439" stroke-opacity="0.55"/><line x1="134" y1="439" x2="-173" y2="454" stroke-opacity="0.60"/><line x1="2218" y1="345" x2="2170" y2="348" stroke-opacity="0.10"/><line x1="2170" y1="348" x2="2069" y2="352" stroke-opacity="0.15"/><line x1="2069" y1="352" x2="1903" y2="361" stroke-opacity="0.20"/><line x1="1903" y1="361" x2="1716" y2="370" stroke-opacity="0.25"/><line x1="1716" y1="370" x2="1578" y2="376" stroke-opacity="0.30"/><line x1="1578" y1="376" x2="1346" y2="388" stroke-opacity="0.35"/><line x1="1346" y1="388" x2="1080" y2="401" stroke-opacity="0.40"/><line x1="1080" y1="401" x2="879" y2="410" stroke-opacity="0.45"/><line x1="879" y1="410" x2="534" y2="427" stroke-opacity="0.50"/><line x1="534" y1="427" x2="270" y2="440" stroke-opacity="0.55"/><line x1="270" y1="440" x2="-193" y2="462" stroke-opacity="0.60"/><line x1="2254" y1="348" x2="2156" y2="353" stroke-opacity="0.15"/><line x1="2156" y1="353" x2="1994" y2="361" stroke-opacity="0.20"/><line x1="1994" y1="361" x2="1813" y2="370" stroke-opacity="0.25"/><line x1="1813" y1="370" x2="1678" y2="377" stroke-opacity="0.30"/><line x1="1678" y1="377" x2="1453" y2="388" stroke-opacity="0.35"/><line x1="1453" y1="388" x2="1285" y2="396" stroke-opacity="0.40"/><line x1="1285" y1="396" x2="999" y2="411" stroke-opacity="0.45"/><line x1="999" y1="411" x2="664" y2="428" stroke-opacity="0.50"/><line x1="664" y1="428" x2="406" y2="440" stroke-opacity="0.55"/><line x1="406" y1="440" x2="-44" y2="463" stroke-opacity="0.60"/><line x1="-44" y1="463" x2="-216" y2="472" stroke-opacity="0.65"/><line x1="2290" y1="350" x2="2242" y2="353" stroke-opacity="0.15"/><line x1="2242" y1="353" x2="2085" y2="361" stroke-opacity="0.20"/><line x1="2085" y1="361" x2="1909" y2="370" stroke-opacity="0.25"/><line x1="1909" y1="370" x2="1779" y2="377" stroke-opacity="0.30"/><line x1="1779" y1="377" x2="1560" y2="388" stroke-opacity="0.35"/><line x1="1560" y1="388" x2="1397" y2="397" stroke-opacity="0.40"/><line x1="1397" y1="397" x2="1119" y2="411" stroke-opacity="0.45"/><line x1="1119" y1="411" x2="794" y2="428" stroke-opacity="0.50"/><line x1="794" y1="428" x2="544" y2="441" stroke-opacity="0.55"/><line x1="544" y1="441" x2="105" y2="464" stroke-opacity="0.60"/><line x1="105" y1="464" x2="-61" y2="472" stroke-opacity="0.65"/><line x1="2329" y1="353" x2="2177" y2="361" stroke-opacity="0.20"/><line x1="2177" y1="361" x2="2065" y2="367" stroke-opacity="0.25"/><line x1="2065" y1="367" x2="1880" y2="377" stroke-opacity="0.30"/><line x1="1880" y1="377" x2="1668" y2="389" stroke-opacity="0.35"/><line x1="1668" y1="389" x2="1510" y2="397" stroke-opacity="0.40"/><line x1="1510" y1="397" x2="1240" y2="412" stroke-opacity="0.45"/><line x1="1240" y1="412" x2="1036" y2="423" stroke-opacity="0.50"/><line x1="1036" y1="423" x2="682" y2="442" stroke-opacity="0.55"/><line x1="682" y1="442" x2="256" y2="464" stroke-opacity="0.60"/><line x1="256" y1="464" x2="-79" y2="482" stroke-opacity="0.65"/><line x1="2369" y1="356" x2="2269" y2="362" stroke-opacity="0.20"/><line x1="2269" y1="362" x2="2161" y2="368" stroke-opacity="0.25"/><line x1="2161" y1="368" x2="1981" y2="378" stroke-opacity="0.30"/><line x1="1981" y1="378" x2="1776" y2="389" stroke-opacity="0.35"/><line x1="1776" y1="389" x2="1623" y2="398" stroke-opacity="0.40"/><line x1="1623" y1="398" x2="1362" y2="412" stroke-opacity="0.45"/><line x1="1362" y1="412" x2="1163" y2="423" stroke-opacity="0.50"/><line x1="1163" y1="423" x2="820" y2="442" stroke-opacity="0.55"/><line x1="820" y1="442" x2="407" y2="465" stroke-opacity="0.60"/><line x1="407" y1="465" x2="82" y2="483" stroke-opacity="0.65"/><line x1="82" y1="483" x2="-99" y2="493" stroke-opacity="0.70"/><line x1="2410" y1="359" x2="2361" y2="362" stroke-opacity="0.20"/><line x1="2361" y1="362" x2="2257" y2="368" stroke-opacity="0.25"/><line x1="2257" y1="368" x2="2083" y2="378" stroke-opacity="0.30"/><line x1="2083" y1="378" x2="1954" y2="385" stroke-opacity="0.35"/><line x1="1954" y1="385" x2="1736" y2="398" stroke-opacity="0.40"/><line x1="1736" y1="398" x2="1484" y2="413" stroke-opacity="0.45"/><line x1="1484" y1="413" x2="1292" y2="424" stroke-opacity="0.50"/><line x1="1292" y1="424" x2="960" y2="443" stroke-opacity="0.55"/><line x1="960" y1="443" x2="560" y2="466" stroke-opacity="0.60"/><line x1="560" y1="466" x2="245" y2="484" stroke-opacity="0.65"/><line x1="245" y1="484" x2="-120" y2="505" stroke-opacity="0.70"/><line x1="2454" y1="362" x2="2353" y2="368" stroke-opacity="0.25"/><line x1="2353" y1="368" x2="2185" y2="378" stroke-opacity="0.30"/><line x1="2185" y1="378" x2="2060" y2="386" stroke-opacity="0.35"/><line x1="2060" y1="386" x2="1850" y2="398" stroke-opacity="0.40"/><line x1="1850" y1="398" x2="1606" y2="413" stroke-opacity="0.45"/><line x1="1606" y1="413" x2="1421" y2="424" stroke-opacity="0.50"/><line x1="1421" y1="424" x2="1100" y2="443" stroke-opacity="0.55"/><line x1="1100" y1="443" x2="850" y2="458" stroke-opacity="0.60"/><line x1="850" y1="458" x2="408" y2="485" stroke-opacity="0.65"/><line x1="408" y1="485" x2="-143" y2="518" stroke-opacity="0.70"/><line x1="2499" y1="365" x2="2449" y2="368" stroke-opacity="0.25"/><line x1="2449" y1="368" x2="2288" y2="379" stroke-opacity="0.30"/><line x1="2288" y1="379" x2="2168" y2="386" stroke-opacity="0.35"/><line x1="2168" y1="386" x2="1965" y2="399" stroke-opacity="0.40"/><line x1="1965" y1="399" x2="1730" y2="413" stroke-opacity="0.45"/><line x1="1730" y1="413" x2="1551" y2="425" stroke-opacity="0.50"/><line x1="1551" y1="425" x2="1241" y2="444" stroke-opacity="0.55"/><line x1="1241" y1="444" x2="1000" y2="459" stroke-opacity="0.60"/><line x1="1000" y1="459" x2="573" y2="486" stroke-opacity="0.65"/><line x1="573" y1="486" x2="40" y2="519" stroke-opacity="0.70"/><line x1="40" y1="519" x2="-168" y2="532" stroke-opacity="0.75"/><line x1="2546" y1="369" x2="2391" y2="379" stroke-opacity="0.30"/><line x1="2391" y1="379" x2="2275" y2="386" stroke-opacity="0.35"/><line x1="2275" y1="386" x2="2080" y2="399" stroke-opacity="0.40"/><line x1="2080" y1="399" x2="1933" y2="409" stroke-opacity="0.45"/><line x1="1933" y1="409" x2="1681" y2="425" stroke-opacity="0.50"/><line x1="1681" y1="425" x2="1382" y2="445" stroke-opacity="0.55"/><line x1="1382" y1="445" x2="1150" y2="460" stroke-opacity="0.60"/><line x1="1150" y1="460" x2="738" y2="487" stroke-opacity="0.65"/><line x1="738" y1="487" x2="409" y2="508" stroke-opacity="0.70"/><line x1="409" y1="508" x2="-195" y2="548" stroke-opacity="0.75"/><line x1="2546" y1="376" x2="2494" y2="379" stroke-opacity="0.30"/><line x1="2494" y1="379" x2="2383" y2="387" stroke-opacity="0.35"/><line x1="2383" y1="387" x2="2195" y2="400" stroke-opacity="0.40"/><line x1="2195" y1="400" x2="2054" y2="409" stroke-opacity="0.45"/><line x1="2054" y1="409" x2="1812" y2="426" stroke-opacity="0.50"/><line x1="1812" y1="426" x2="1525" y2="445" stroke-opacity="0.55"/><line x1="1525" y1="445" x2="1301" y2="461" stroke-opacity="0.60"/><line x1="1301" y1="461" x2="905" y2="488" stroke-opacity="0.65"/><line x1="905" y1="488" x2="588" y2="509" stroke-opacity="0.70"/><line x1="588" y1="509" x2="5" y2="549" stroke-opacity="0.75"/><line x1="5" y1="549" x2="-226" y2="565" stroke-opacity="0.80"/><line x1="2546" y1="383" x2="2491" y2="387" stroke-opacity="0.35"/><line x1="2491" y1="387" x2="2311" y2="400" stroke-opacity="0.40"/><line x1="2311" y1="400" x2="2176" y2="410" stroke-opacity="0.45"/><line x1="2176" y1="410" x2="1944" y2="426" stroke-opacity="0.50"/><line x1="1944" y1="426" x2="1765" y2="439" stroke-opacity="0.55"/><line x1="1765" y1="439" x2="1453" y2="461" stroke-opacity="0.60"/><line x1="1453" y1="461" x2="1072" y2="488" stroke-opacity="0.65"/><line x1="1072" y1="488" x2="768" y2="510" stroke-opacity="0.70"/><line x1="768" y1="510" x2="207" y2="550" stroke-opacity="0.75"/><line x1="207" y1="550" x2="-260" y2="584" stroke-opacity="0.80"/><line x1="2545" y1="392" x2="2428" y2="400" stroke-opacity="0.40"/><line x1="2428" y1="400" x2="2298" y2="410" stroke-opacity="0.45"/><line x1="2298" y1="410" x2="2076" y2="427" stroke-opacity="0.50"/><line x1="2076" y1="427" x2="1905" y2="440" stroke-opacity="0.55"/><line x1="1905" y1="440" x2="1606" y2="462" stroke-opacity="0.60"/><line x1="1606" y1="462" x2="1241" y2="489" stroke-opacity="0.65"/><line x1="1241" y1="489" x2="949" y2="511" stroke-opacity="0.70"/><line x1="949" y1="511" x2="411" y2="552" stroke-opacity="0.75"/><line x1="411" y1="552" x2="-37" y2="585" stroke-opacity="0.80"/><line x1="-37" y1="585" x2="-297" y2="605" stroke-opacity="0.85"/><line x1="2545" y1="401" x2="2421" y2="411" stroke-opacity="0.45"/><line x1="2421" y1="411" x2="2209" y2="427" stroke-opacity="0.50"/><line x1="2209" y1="427" x2="2046" y2="440" stroke-opacity="0.55"/><line x1="2046" y1="440" x2="1760" y2="463" stroke-opacity="0.60"/><line x1="1760" y1="463" x2="1411" y2="490" stroke-opacity="0.65"/><line x1="1411" y1="490" x2="1131" y2="512" stroke-opacity="0.70"/><line x1="1131" y1="512" x2="616" y2="553" stroke-opacity="0.75"/><line x1="616" y1="553" x2="187" y2="587" stroke-opacity="0.80"/><line x1="187" y1="587" x2="-62" y2="607" stroke-opacity="0.85"/><line x1="2545" y1="411" x2="2342" y2="428" stroke-opacity="0.50"/><line x1="2342" y1="428" x2="2187" y2="441" stroke-opacity="0.55"/><line x1="2187" y1="441" x2="1915" y2="463" stroke-opacity="0.60"/><line x1="1915" y1="463" x2="1701" y2="481" stroke-opacity="0.65"/><line x1="1701" y1="481" x2="1315" y2="513" stroke-opacity="0.70"/><line x1="1315" y1="513" x2="823" y2="554" stroke-opacity="0.75"/><line x1="823" y1="554" x2="412" y2="588" stroke-opacity="0.80"/><line x1="412" y1="588" x2="-90" y2="630" stroke-opacity="0.85"/><line x1="2544" y1="422" x2="2477" y2="428" stroke-opacity="0.50"/><line x1="2477" y1="428" x2="2329" y2="441" stroke-opacity="0.55"/><line x1="2329" y1="441" x2="2070" y2="464" stroke-opacity="0.60"/><line x1="2070" y1="464" x2="1867" y2="482" stroke-opacity="0.65"/><line x1="1867" y1="482" x2="1500" y2="514" stroke-opacity="0.70"/><line x1="1500" y1="514" x2="1032" y2="556" stroke-opacity="0.75"/><line x1="1032" y1="556" x2="640" y2="590" stroke-opacity="0.80"/><line x1="640" y1="590" x2="-122" y2="657" stroke-opacity="0.85"/><line x1="2544" y1="435" x2="2472" y2="442" stroke-opacity="0.55"/><line x1="2472" y1="442" x2="2227" y2="465" stroke-opacity="0.60"/><line x1="2227" y1="465" x2="2034" y2="483" stroke-opacity="0.65"/><line x1="2034" y1="483" x2="1686" y2="515" stroke-opacity="0.70"/><line x1="1686" y1="515" x2="1403" y2="542" stroke-opacity="0.75"/><line x1="1403" y1="542" x2="870" y2="592" stroke-opacity="0.80"/><line x1="870" y1="592" x2="145" y2="660" stroke-opacity="0.85"/><line x1="145" y1="660" x2="-158" y2="688" stroke-opacity="0.90"/><line x1="2543" y1="450" x2="2384" y2="466" stroke-opacity="0.60"/><line x1="2384" y1="466" x2="2202" y2="484" stroke-opacity="0.65"/><line x1="2202" y1="484" x2="1874" y2="516" stroke-opacity="0.70"/><line x1="1874" y1="516" x2="1606" y2="543" stroke-opacity="0.75"/><line x1="1606" y1="543" x2="1102" y2="593" stroke-opacity="0.80"/><line x1="1102" y1="593" x2="415" y2="662" stroke-opacity="0.85"/><line x1="415" y1="662" x2="-200" y2="723" stroke-opacity="0.90"/><line x1="2543" y1="466" x2="2372" y2="485" stroke-opacity="0.65"/><line x1="2372" y1="485" x2="2063" y2="518" stroke-opacity="0.70"/><line x1="2063" y1="518" x2="1811" y2="544" stroke-opacity="0.75"/><line x1="1811" y1="544" x2="1336" y2="595" stroke-opacity="0.80"/><line x1="1336" y1="595" x2="688" y2="664" stroke-opacity="0.85"/><line x1="688" y1="664" x2="-248" y2="764" stroke-opacity="0.90"/><line x1="2541" y1="508" x2="2445" y2="520" stroke-opacity="0.70"/><line x1="2445" y1="520" x2="2225" y2="547" stroke-opacity="0.75"/><line x1="2225" y1="547" x2="1810" y2="599" stroke-opacity="0.80"/><line x1="1810" y1="599" x2="1454" y2="643" stroke-opacity="0.85"/><line x1="1454" y1="643" x2="-372" y2="870" stroke-opacity="0.90"/><line x1="2540" y1="534" x2="2434" y2="548" stroke-opacity="0.75"/><line x1="2434" y1="548" x2="2051" y2="600" stroke-opacity="0.80"/><line x1="2051" y1="600" x2="1721" y2="645" stroke-opacity="0.85"/><line x1="1721" y1="645" x2="-454" y2="939" stroke-opacity="0.90"/><line x1="2539" y1="565" x2="2293" y2="602" stroke-opacity="0.80"/><line x1="2293" y1="602" x2="1990" y2="647" stroke-opacity="0.85"/><line x1="1990" y1="647" x2="-555" y2="1026" stroke-opacity="0.90"/><line x1="2538" y1="604" x2="2262" y2="649" stroke-opacity="0.85"/><line x1="2262" y1="649" x2="-67" y2="1033" stroke-opacity="0.90"/><line x1="2536" y1="652" x2="-130" y2="1145" stroke-opacity="0.90"/><line x1="2534" y1="713" x2="436" y2="1155" stroke-opacity="0.90"/><line x1="2531" y1="794" x2="1014" y2="1166" stroke-opacity="0.90"/><line x1="2527" y1="907" x2="1605" y2="1176" stroke-opacity="0.90"/><line x1="2521" y1="1074" x2="2210" y2="1187" stroke-opacity="0.90"/></g><g clip-path="url(#cg)"><line x1="2" y1="777" x2="2377" y2="504" stroke="#c3707c" stroke-width="2.2"/><line x1="482" y1="260" x2="2030" y2="1088" stroke="#78a45a" stroke-width="2.6"/></g><g clip-path="url(#cd)"><line x1="295" y1="160" x2="1200" y2="644" stroke="#46682f" stroke-width="2.4"/></g><g clip-path="url(#cd)"><line x1="684" y1="211" x2="721" y2="733" stroke="#262626" stroke-width="1.5"/></g><g clip-path="url(#cg)"><line x1="684" y1="211" x2="721" y2="733" stroke="#4a4d57" stroke-width="1.4"/></g><path d="M721 729l3 4-3 4-3-4z" fill="none" stroke="#4a4d57" stroke-width="1.2"/><defs>
<filter id="terr" x="700" y="500" width="1150" height="380" filterUnits="userSpaceOnUse" color-interpolation-filters="sRGB">
<feTurbulence type="turbulence" baseFrequency="0.016 0.045" numOctaves="5" seed="5"/>
<feColorMatrix type="matrix" values="1 0 0 0 0 1 0 0 0 0 1 0 0 0 0 0 0 0 0 1" result="n"/>
<feComposite in="SourceGraphic" in2="n" operator="arithmetic" k1="0" k2="1" k3="0.42" k4="-0.17"/>
<feComponentTransfer><feFuncR type="table" tableValues="0.140 0.105 0.070 0.035 0.000 0.000 0.000 0.000 0.000 0.000 0.000 0.000 0.000 0.000 0.000 0.000 0.000 0.000 0.000 0.010 0.020 0.030 0.040 0.150 0.600 0.740 0.760 0.780 0.800 0.813 0.827 0.840 0.880 0.880 0.880 0.860 0.840 0.830 0.820 0.810 0.800"/><feFuncG type="table" tableValues="0.100 0.188 0.275 0.362 0.450 0.497 0.545 0.593 0.640 0.665 0.690 0.715 0.740 0.750 0.760 0.770 0.780 0.790 0.800 0.795 0.790 0.785 0.780 0.850 0.840 0.780 0.787 0.793 0.800 0.787 0.773 0.760 0.620 0.535 0.450 0.385 0.320 0.310 0.300 0.290 0.280"/><feFuncB type="table" tableValues="0.800 0.812 0.825 0.838 0.850 0.847 0.845 0.843 0.840 0.835 0.830 0.825 0.820 0.810 0.800 0.805 0.810 0.815 0.820 0.800 0.780 0.760 0.740 0.150 0.100 0.100 0.100 0.100 0.100 0.087 0.073 0.060 0.000 0.000 0.000 0.000 0.000 0.000 0.000 0.000 0.000"/><feFuncA type="linear" slope="0" intercept="1"/></feComponentTransfer>
</filter>
<filter id="b20" x="-50%" y="-50%" width="200%" height="200%"><feGaussianBlur stdDeviation="20"/></filter>
<filter id="b8" x="-50%" y="-50%" width="200%" height="200%"><feGaussianBlur stdDeviation="8"/></filter>
<filter id="b4" x="-50%" y="-50%" width="200%" height="200%"><feGaussianBlur stdDeviation="4"/></filter>
</defs>
<g clip-path="url(#ct)"><g filter="url(#terr)">
<rect x="700" y="500" width="1150" height="380" fill="rgb(58,58,58)"/>
<ellipse cx="1560" cy="690" rx="240" ry="60" fill="rgb(76,76,76)" filter="url(#b20)"/>
<ellipse cx="880" cy="800" rx="150" ry="50" fill="rgb(28,28,28)" filter="url(#b20)"/>
<ellipse cx="840" cy="620" rx="110" ry="18" fill="rgb(30,30,30)" filter="url(#b20)"/>
<path d="M1120 568 L1351 540 L1395 555 L1365 576 L1300 582 L1262 592 L1228 583 L1180 576 L1125 584 Z" fill="rgb(172,172,172)" filter="url(#b8)"/>
<ellipse cx="1253" cy="596" rx="12" ry="14" fill="rgb(165,165,165)" filter="url(#b4)"/>
<ellipse cx="1318" cy="549" rx="32" ry="10" fill="rgb(230,230,230)" filter="url(#b8)"/>
<ellipse cx="985" cy="614" rx="12" ry="5" fill="rgb(150,150,150)" filter="url(#b4)"/>
<ellipse cx="1003" cy="631" rx="10" ry="5" fill="rgb(150,150,150)" filter="url(#b4)"/>
<ellipse cx="1159" cy="593" rx="12" ry="5" fill="rgb(150,150,150)" filter="url(#b4)"/>
<ellipse cx="1121" cy="600" rx="10" ry="4" fill="rgb(140,140,140)" filter="url(#b4)"/>
<ellipse cx="1316" cy="590" rx="10" ry="4" fill="rgb(135,135,135)" filter="url(#b4)"/>
<ellipse cx="1040" cy="700" rx="6" ry="3" fill="rgb(130,130,130)" filter="url(#b4)"/>
</g>
<path d="M748 610L956 845L966 843L775 612z" fill="#30a0e0" opacity="0.35"/>
<path d="M956 845L1802 703L1790 700L1440 752L960 838z" fill="#0a5a80" opacity="0.7"/>
</g>
<g clip-path="url(#ct)"><line x1="1189" y1="641" x2="1400" y2="754" stroke="#6ea060" stroke-width="2" opacity="0.45"/></g><g stroke="#7a5a9a" stroke-width="1.5" clip-path="url(#ct)"><line x1="1411" y1="490" x2="1500" y2="514" stroke-opacity="0.20"/><line x1="1500" y1="514" x2="1895" y2="621" stroke-opacity="0.25"/><line x1="1895" y1="621" x2="2364" y2="749" stroke-opacity="0.30"/><line x1="1345" y1="495" x2="1430" y2="521" stroke-opacity="0.20"/><line x1="1430" y1="521" x2="1810" y2="633" stroke-opacity="0.25"/><line x1="1810" y1="633" x2="2269" y2="769" stroke-opacity="0.30"/><line x1="1277" y1="501" x2="1357" y2="527" stroke-opacity="0.20"/><line x1="1357" y1="527" x2="1642" y2="619" stroke-opacity="0.25"/><line x1="1642" y1="619" x2="2168" y2="790" stroke-opacity="0.30"/><line x1="1205" y1="506" x2="1241" y2="519" stroke-opacity="0.20"/><line x1="1241" y1="519" x2="1551" y2="631" stroke-opacity="0.25"/><line x1="1551" y1="631" x2="2057" y2="813" stroke-opacity="0.30"/><line x1="1131" y1="512" x2="1165" y2="526" stroke-opacity="0.20"/><line x1="1165" y1="526" x2="1392" y2="618" stroke-opacity="0.25"/><line x1="1392" y1="618" x2="1938" y2="838" stroke-opacity="0.30"/><line x1="1054" y1="518" x2="1294" y2="629" stroke-opacity="0.25"/><line x1="1294" y1="629" x2="1808" y2="866" stroke-opacity="0.30"/><line x1="890" y1="531" x2="1039" y2="627" stroke-opacity="0.25"/><line x1="1039" y1="627" x2="1405" y2="861" stroke-opacity="0.30"/><line x1="1405" y1="861" x2="1510" y2="929" stroke-opacity="0.35"/><line x1="803" y1="538" x2="929" y2="639" stroke-opacity="0.25"/><line x1="929" y1="639" x2="1169" y2="830" stroke-opacity="0.30"/><line x1="1169" y1="830" x2="1339" y2="965" stroke-opacity="0.35"/><line x1="712" y1="545" x2="787" y2="625" stroke-opacity="0.25"/><line x1="787" y1="625" x2="1008" y2="856" stroke-opacity="0.30"/><line x1="1008" y1="856" x2="1149" y2="1005" stroke-opacity="0.35"/><line x1="616" y1="553" x2="670" y2="637" stroke-opacity="0.25"/><line x1="670" y1="637" x2="793" y2="825" stroke-opacity="0.30"/><line x1="793" y1="825" x2="938" y2="1049" stroke-opacity="0.35"/><line x1="516" y1="561" x2="538" y2="623" stroke-opacity="0.25"/><line x1="538" y1="623" x2="617" y2="851" stroke-opacity="0.30"/><line x1="617" y1="851" x2="702" y2="1099" stroke-opacity="0.35"/><line x1="412" y1="569" x2="414" y2="634" stroke-opacity="0.25"/><line x1="414" y1="634" x2="422" y2="821" stroke-opacity="0.30"/><line x1="422" y1="821" x2="436" y2="1155" stroke-opacity="0.35"/><line x1="1411" y1="490" x2="1054" y2="518" stroke-opacity="0.20"/><line x1="1054" y1="518" x2="412" y2="569" stroke-opacity="0.25"/><line x1="1454" y1="502" x2="1241" y2="519" stroke-opacity="0.20"/><line x1="1241" y1="519" x2="412" y2="588" stroke-opacity="0.25"/><line x1="1500" y1="514" x2="1430" y2="521" stroke-opacity="0.20"/><line x1="1430" y1="521" x2="413" y2="610" stroke-opacity="0.25"/><line x1="1551" y1="528" x2="538" y2="623" stroke-opacity="0.25"/><line x1="538" y1="623" x2="414" y2="634" stroke-opacity="0.30"/><line x1="1606" y1="543" x2="787" y2="625" stroke-opacity="0.25"/><line x1="787" y1="625" x2="415" y2="662" stroke-opacity="0.30"/><line x1="1667" y1="560" x2="1039" y2="627" stroke-opacity="0.25"/><line x1="1039" y1="627" x2="417" y2="693" stroke-opacity="0.30"/><line x1="1810" y1="599" x2="1551" y2="631" stroke-opacity="0.25"/><line x1="1551" y1="631" x2="420" y2="771" stroke-opacity="0.30"/><line x1="1895" y1="621" x2="422" y2="821" stroke-opacity="0.30"/><line x1="1990" y1="647" x2="617" y2="851" stroke-opacity="0.30"/><line x1="617" y1="851" x2="424" y2="880" stroke-opacity="0.35"/><line x1="2098" y1="676" x2="1169" y2="830" stroke-opacity="0.30"/><line x1="1169" y1="830" x2="427" y2="952" stroke-opacity="0.35"/><line x1="2221" y1="710" x2="1551" y2="834" stroke-opacity="0.30"/><line x1="1551" y1="834" x2="431" y2="1041" stroke-opacity="0.35"/><line x1="2364" y1="749" x2="1938" y2="838" stroke-opacity="0.30"/><line x1="1938" y1="838" x2="436" y2="1155" stroke-opacity="0.35"/></g><g clip-path="url(#ct)"><line x1="2" y1="777" x2="2377" y2="504" stroke="#c06090" stroke-width="2" opacity="0.45"/></g><polygon points="748,610 1351,536 1802,703 956,845" fill="none" stroke="#ff9a00" stroke-width="3.4" stroke-linejoin="round"/><circle cx="1189" cy="640.5" r="19.5" fill="none" stroke="#f4f4f4" stroke-width="2.2"/><circle cx="1189" cy="640.5" r="19.5" fill="none" stroke="#d02020" stroke-width="2.2" stroke-dasharray="3 7.2"/><path d="M1189 600.5v33M1189 647.5v32M1153 644.3L1182 641.1M1196 639.7L1225 636.3M1173 631.7L1183 637.2M1195 643.6L1206.5 649.3" stroke="#111" stroke-width="1.7" fill="none"/><circle cx="1189" cy="640.5" r="6.5" fill="#ff9a1a" stroke="#1e3038" stroke-width="1.6"/><circle cx="1811" cy="348" r="12" fill="#5b8b12"/><circle cx="1897" cy="356" r="12" fill="#a8314b"/><circle cx="1838" cy="425" r="12" fill="#1e62a6"/><line x1="1838" y1="363" x2="1838" y2="300" stroke="#2d8fff" stroke-width="5"/><line x1="1838" y1="363" x2="1779" y2="370" stroke="#ff3352" stroke-width="5"/><line x1="1838" y1="363" x2="1865" y2="377" stroke="#7fd414" stroke-width="5"/><circle cx="1838" cy="300" r="15" fill="#2d8fff"/><circle cx="1779" cy="370" r="15" fill="#ff3352"/><circle cx="1865" cy="377" r="15" fill="#7fd414"/><g font-family="Liberation Sans" font-size="20" fill="#111" text-anchor="middle"><text x="1838" y="307">Z</text><text x="1779" y="377">X</text><text x="1865" y="384">Y</text></g><circle cx="1892" cy="472" r="28" fill="#6c707e"/><circle cx="1892" cy="534" r="28" fill="#6c707e"/><circle cx="1892" cy="595" r="28" fill="#6c707e"/><circle cx="1892" cy="655" r="28" fill="#6c707e"/><circle cx="1897" cy="467" r="11" fill="none" stroke="#e8e8e8" stroke-width="3.5"/><path d="M1897 461v12M1891 467h12" stroke="#e8e8e8" stroke-width="2"/><path d="M1889 475l-9 9" stroke="#e8e8e8" stroke-width="4" stroke-linecap="round"/><path d="M1877 538c3 4 8 12 14 13 8 1 13-3 14-10l3-14c0-3-4-3-5 0l-2 7v-16c0-3-5-3-5 0v13-17c0-3-5-3-5 0v17-15c0-3-5-3-5 0v18l-3-4c-2-3-6-1-6 1z" fill="#e8e8e8"/><circle cx="1884" cy="586" r="6" fill="#e8e8e8"/><circle cx="1900" cy="586" r="6" fill="#e8e8e8"/><circle cx="1884" cy="586" r="2" fill="#6c707e"/><circle cx="1900" cy="586" r="2" fill="#6c707e"/><rect x="1880" y="593" width="22" height="12" rx="2" fill="#e8e8e8"/><path d="M1902 599l10-6v12z" fill="#e8e8e8"/><path d="M1876 596v8" stroke="#e8e8e8" stroke-width="3"/><path d="M1880 670l4-28h16l4 28zM1882 656h20M1881 663h22M1888 642l-2 28M1896 642l2 28" fill="none" stroke="#e8e8e8" stroke-width="2.2"/></svg>
<div style="left:2px;top:160px;width:2375px;height:51px;background:rgba(58,58,58,0.97);border-radius:12px 12px 0 0;"></div>
<div style="left:17px;top:167px;width:62px;height:38px;background:#2b2b2b;border-radius:7px;border:1px solid #3c3c3c;"></div>
<svg style="position:absolute;left:24px;top:170px;" width="36" height="32" viewBox="0 0 36 32"><circle cx="21" cy="9" r="6" fill="#d8d8d8"/><path d="M2 23h20M5 29l4-18M17 29l-2-10M3 15h10" stroke="#bdbdbd" stroke-width="2.2" fill="none"/></svg>
<svg style="position:absolute;left:60px;top:179.5px;" width="18" height="13.0" viewBox="0 0 18 13.0"><path d="M2 3l7.0 7.0l7.0 -7.0" fill="none" stroke="#d8d8d8" stroke-width="2.4"/></svg>
<svg style="position:absolute;left:103px;top:164px;" width="46" height="44" viewBox="0 0 46 44"><rect x="2.5" y="2.5" width="41" height="39" fill="none" stroke="#ffaa00" stroke-width="3" stroke-dasharray="6 5"/><path d="M17 11v22l5-6 8 0z" fill="#dedede"/></svg>
<div style="left:179px;top:167px;width:36px;height:37px;background:#4772b3;border-radius:7px 0 0 7px;"></div>
<div style="left:217px;top:167px;width:36px;height:37px;background:#545454;"></div>
<div style="left:255px;top:167px;width:36px;height:37px;background:#545454;"></div>
<div style="left:293px;top:167px;width:36px;height:37px;background:#545454;"></div>
<div style="left:331px;top:167px;width:36px;height:37px;background:#545454;border-radius:0 7px 7px 0;"></div>
<svg style="position:absolute;left:183px;top:171px;" width="28" height="28" viewBox="0 0 28 28"><rect x="3" y="3" width="22" height="22" fill="none" stroke="#fff" stroke-width="2.6" stroke-dasharray="4 3.4"/></svg>
<svg style="position:absolute;left:221px;top:171px;" width="28" height="28" viewBox="0 0 28 28"><path d="M3 11h8V3h15v15h-8v8H3z" fill="#c8c8c8"/></svg>
<svg style="position:absolute;left:259px;top:171px;" width="28" height="28" viewBox="0 0 28 28"><rect x="3" y="11" width="15" height="15" fill="none" stroke="#c8c8c8" stroke-width="2" stroke-dasharray="3 3"/><path d="M11 3h15v15h-8v-7h-7z" fill="#c8c8c8"/></svg>
<svg style="position:absolute;left:297px;top:171px;" width="28" height="28" viewBox="0 0 28 28"><path d="M3 11h8V3h15v15h-8v8H3z" fill="#c8c8c8"/><rect x="11" y="11" width="7" height="7" fill="#545454"/></svg>
<svg style="position:absolute;left:335px;top:171px;" width="28" height="28" viewBox="0 0 28 28"><rect x="3" y="3" width="22" height="22" fill="none" stroke="#c8c8c8" stroke-width="2" stroke-dasharray="3 3"/><rect x="9" y="9" width="10" height="10" fill="#c8c8c8"/></svg>
<div style="left:937px;top:167px;width:158px;height:38px;background:#2b2b2b;border-radius:7px;border:1px solid #3c3c3c;"></div>
<svg style="position:absolute;left:944px;top:171px;" width="34" height="30" viewBox="0 0 34 30"><path d="M5 26V3M1 8l4-5 4 5M5 26h24M24 22l5 4-5 4M6 24L25 6M18 6h7v7" fill="none" stroke="#cfcfcf" stroke-width="2"/><circle cx="5" cy="26" r="3" fill="#2b2b2b" stroke="#cfcfcf" stroke-width="2"/></svg>
<div class="tx" style="left:989px;top:166.0px;height:40px;line-height:40px;font-size:22px;color:#dcdcdc;letter-spacing:0.7px;">Global</div>
<svg style="position:absolute;left:1074px;top:179.5px;" width="18" height="13.0" viewBox="0 0 18 13.0"><path d="M2 3l7.0 7.0l7.0 -7.0" fill="none" stroke="#d8d8d8" stroke-width="2.4"/></svg>
<div style="left:1107px;top:167px;width:62px;height:38px;background:#2b2b2b;border-radius:7px;border:1px solid #3c3c3c;"></div>
<svg style="position:absolute;left:1114px;top:170px;" width="34" height="32" viewBox="0 0 34 32"><circle cx="11" cy="20" r="8" fill="none" stroke="#cfcfcf" stroke-width="2"/><circle cx="18" cy="12" r="8" fill="none" stroke="#cfcfcf" stroke-width="2"/><circle cx="15" cy="16" r="3" fill="#cfcfcf"/></svg>
<svg style="position:absolute;left:1148px;top:179.5px;" width="18" height="13.0" viewBox="0 0 18 13.0"><path d="M2 3l7.0 7.0l7.0 -7.0" fill="none" stroke="#d8d8d8" stroke-width="2.4"/></svg>
<div style="left:1182px;top:167px;width:101px;height:38px;background:#2b2b2b;border-radius:7px;border:1px solid #3c3c3c;"></div>
<div style="left:1183px;top:168px;width:36px;height:36px;background:#545454;border-radius:6px 0 0 6px;"></div>
<svg style="position:absolute;left:1185px;top:170px;" width="32" height="32" viewBox="0 0 32 32"><path d="M7 14a9 9 0 0 1 18 0c0 5-3 8-6 11l-3-3c2-2 5-4 5-8a6 6 0 0 0-12 0" fill="none" stroke="#a8a8a8" stroke-width="2"/></svg>
<svg style="position:absolute;left:1222px;top:170px;" width="36" height="32" viewBox="0 0 36 32"><rect x="22" y="3" width="7" height="7" fill="#d8d8d8"/><path d="M2 16v12M2 22h26M9 18v6M15 18v6M22 16v12" stroke="#c8c8c8" stroke-width="2"/></svg>
<svg style="position:absolute;left:1262px;top:179.5px;" width="18" height="13.0" viewBox="0 0 18 13.0"><path d="M2 3l7.0 7.0l7.0 -7.0" fill="none" stroke="#d8d8d8" stroke-width="2.4"/></svg>
<div style="left:1296px;top:167px;width:101px;height:38px;background:#2b2b2b;border-radius:7px;border:1px solid #3c3c3c;"></div>
<div style="left:1297px;top:168px;width:36px;height:36px;background:#545454;border-radius:6px 0 0 6px;"></div>
<svg style="position:absolute;left:1299px;top:170px;" width="32" height="32" viewBox="0 0 32 32"><circle cx="16" cy="16" r="11" fill="none" stroke="#8a8a8a" stroke-width="2"/><circle cx="16" cy="16" r="4.5" fill="#d0d0d0"/></svg>
<svg style="position:absolute;left:1337px;top:170px;" width="34" height="32" viewBox="0 0 34 32"><path d="M2 28c6 0 6-24 12-24s6 24 12 24" fill="none" stroke="#a8a8a8" stroke-width="2"/></svg>
<svg style="position:absolute;left:1378px;top:179.5px;" width="18" height="13.0" viewBox="0 0 18 13.0"><path d="M2 3l7.0 7.0l7.0 -7.0" fill="none" stroke="#666" stroke-width="2.4"/></svg>
<div style="left:2233px;top:167px;width:127px;height:38px;background:#2b2b2b;border-radius:7px;border:1px solid #3c3c3c;"></div>
<div class="tx" style="left:2248px;top:166.0px;height:40px;line-height:40px;font-size:22px;color:#dcdcdc;letter-spacing:0.7px;">Options</div>
<svg style="position:absolute;left:2336px;top:179.5px;" width="18" height="13.0" viewBox="0 0 18 13.0"><path d="M2 3l7.0 7.0l7.0 -7.0" fill="none" stroke="#d8d8d8" stroke-width="2.4"/></svg>
<div style="left:19px;top:219px;width:216px;height:37px;background:#2b2b2b;border-radius:7px;border:1px solid #3c3c3c;"></div>
<svg style="position:absolute;left:24px;top:222px;" width="34" height="32" viewBox="0 0 34 32"><path d="M3 9V3h6M23 3h6v6M29 23v6h-6M9 29H3v-6" fill="none" stroke="#a8a8a8" stroke-width="2.2"/><rect x="9" y="9" width="14" height="14" fill="#dcdcdc"/></svg>
<div class="tx" style="left:68px;top:217.0px;height:40px;line-height:40px;font-size:22px;color:#dcdcdc;letter-spacing:0.7px;">Object Mode</div>
<svg style="position:absolute;left:214px;top:231.5px;" width="18" height="13.0" viewBox="0 0 18 13.0"><path d="M2 3l7.0 7.0l7.0 -7.0" fill="none" stroke="#d8d8d8" stroke-width="2.4"/></svg>
<div style="left:249px;top:219px;width:77px;height:37px;background:#2e2e2e;border-radius:7px;"></div>
<div class="tx" style="left:-712.5px;top:217.0px;height:40px;line-height:40px;font-size:22px;color:#dcdcdc;letter-spacing:0.7px;width:2000px;text-align:center;">View</div>
<div style="left:332px;top:219px;width:89px;height:37px;background:#2e2e2e;border-radius:7px;"></div>
<div class="tx" style="left:-623.5px;top:217.0px;height:40px;line-height:40px;font-size:22px;color:#dcdcdc;letter-spacing:0.7px;width:2000px;text-align:center;">Select</div>
<div style="left:427px;top:219px;width:65px;height:37px;background:#2e2e2e;border-radius:7px;"></div>
<div class="tx" style="left:-540.5px;top:217.0px;height:40px;line-height:40px;font-size:22px;color:#dcdcdc;letter-spacing:0.7px;width:2000px;text-align:center;">Add</div>
<div style="left:497px;top:219px;width:94px;height:37px;background:#2e2e2e;border-radius:7px;"></div>
<div class="tx" style="left:-456.0px;top:217.0px;height:40px;line-height:40px;font-size:22px;color:#dcdcdc;letter-spacing:0.7px;width:2000px;text-align:center;">Object</div>
<div style="left:596px;top:219px;width:61px;height:37px;background:#2e2e2e;border-radius:7px;"></div>
<div class="tx" style="left:-373.5px;top:217.0px;height:40px;line-height:40px;font-size:22px;color:#dcdcdc;letter-spacing:0.7px;width:2000px;text-align:center;">GIS</div>
<div style="left:1866px;top:219px;width:60px;height:37px;background:#2b2b2b;border-radius:7px;border:1px solid #3c3c3c;"></div>
<svg style="position:absolute;left:1870px;top:222px;" width="36" height="32" viewBox="0 0 36 32"><path d="M4 16c4-6 8-9 12-9s8 3 12 9c-4 6-8 9-12 9" fill="none" stroke="#dcdcdc" stroke-width="2.2"/><circle cx="16" cy="15" r="4" fill="#dcdcdc"/><path d="M5 17l11 4-5 2-3 7z" fill="#dcdcdc"/></svg>
<svg style="position:absolute;left:1908px;top:233.5px;" width="18" height="13.0" viewBox="0 0 18 13.0"><path d="M2 3l7.0 7.0l7.0 -7.0" fill="none" stroke="#d8d8d8" stroke-width="2.4"/></svg>
<div style="left:1940px;top:219px;width:76px;height:37px;background:#2b2b2b;border-radius:7px;border:1px solid #3c3c3c;"></div>
<div style="left:1941px;top:220px;width:36px;height:35px;background:#4772b3;border-radius:6px 0 0 6px;"></div>
<svg style="position:absolute;left:1943px;top:222px;" width="32" height="32" viewBox="0 0 32 32"><circle cx="7" cy="25" r="3.5" fill="none" stroke="#fff" stroke-width="2"/><path d="M9 22c3-9 8-14 15-16M19 4h6v6" fill="none" stroke="#fff" stroke-width="2.2"/></svg>
<svg style="position:absolute;left:1990px;top:233.5px;" width="18" height="13.0" viewBox="0 0 18 13.0"><path d="M2 3l7.0 7.0l7.0 -7.0" fill="none" stroke="#d8d8d8" stroke-width="2.4"/></svg>
<div style="left:2030px;top:219px;width:76px;height:37px;background:#2b2b2b;border-radius:7px;border:1px solid #3c3c3c;"></div>
<div style="left:2031px;top:220px;width:36px;height:35px;background:#4772b3;border-radius:6px 0 0 6px;"></div>
<svg style="position:absolute;left:2033px;top:222px;" width="32" height="32" viewBox="0 0 32 32"><circle cx="13" cy="19" r="8" fill="none" stroke="#fff" stroke-width="2.2"/><circle cx="18" cy="13" r="8" fill="#fff"/><circle cx="18" cy="13" r="4" fill="#4772b3"/></svg>
<svg style="position:absolute;left:2080px;top:233.5px;" width="18" height="13.0" viewBox="0 0 18 13.0"><path d="M2 3l7.0 7.0l7.0 -7.0" fill="none" stroke="#d8d8d8" stroke-width="2.4"/></svg>
<div style="left:2120px;top:219px;width:36px;height:37px;background:#4a4a4a;border-radius:7px;"></div>
<svg style="position:absolute;left:2122px;top:222px;" width="32" height="32" viewBox="0 0 32 32"><rect x="9" y="4" width="18" height="18" fill="none" stroke="#777" stroke-width="2"/><rect x="4" y="10" width="18" height="18" fill="#4a4a4a" stroke="#777" stroke-width="2" stroke-dasharray="3 2"/></svg>
<div style="left:2169px;top:219px;width:192px;height:37px;background:#2b2b2b;border-radius:7px;border:1px solid #3c3c3c;"></div>
<div style="left:2170px;top:220px;width:36px;height:35px;background:#545454;border-radius:6px 0 0 6px;"></div>
<div style="left:2208px;top:220px;width:36px;height:35px;background:#545454;"></div>
<div style="left:2246px;top:220px;width:36px;height:35px;background:#4772b3;"></div>
<div style="left:2284px;top:220px;width:36px;height:35px;background:#545454;"></div>
<svg style="position:absolute;left:2172px;top:222px;" width="32" height="32" viewBox="0 0 32 32"><circle cx="16" cy="16" r="12" fill="none" stroke="#c8c8c8" stroke-width="2"/><ellipse cx="16" cy="16" rx="5.5" ry="12" fill="none" stroke="#c8c8c8" stroke-width="2"/><path d="M4 16h24M6 10h20M6 22h20" stroke="#c8c8c8" stroke-width="1.8"/></svg>
<svg style="position:absolute;left:2210px;top:222px;" width="32" height="32" viewBox="0 0 32 32"><circle cx="16" cy="16" r="12" fill="#c8c8c8"/></svg>
<svg style="position:absolute;left:2248px;top:222px;" width="32" height="32" viewBox="0 0 32 32"><circle cx="16" cy="16" r="12" fill="#fff"/><path d="M16 4a12 12 0 0 0-12 12h12z" fill="#4772b3"/><path d="M16 16h12a12 12 0 0 1-12 12z" fill="#4772b3"/><circle cx="16" cy="16" r="12" fill="none" stroke="#fff" stroke-width="2"/></svg>
<svg style="position:absolute;left:2286px;top:222px;" width="32" height="32" viewBox="0 0 32 32"><circle cx="16" cy="16" r="12" fill="none" stroke="#c8c8c8" stroke-width="2.2"/><path d="M10 13a7 7 0 0 1 6-5" stroke="#c8c8c8" stroke-width="2.2" fill="none"/></svg>
<svg style="position:absolute;left:2331px;top:233.5px;" width="18" height="13.0" viewBox="0 0 18 13.0"><path d="M2 3l7.0 7.0l7.0 -7.0" fill="none" stroke="#d8d8d8" stroke-width="2.4"/></svg>
<div class="tx" style="left:136px;top:275.0px;height:40px;line-height:40px;font-size:22px;color:#e6e6e6;letter-spacing:0.7px;">User Perspective</div>
<div class="tx" style="left:136px;top:311.0px;height:40px;line-height:40px;font-size:22px;color:#e6e6e6;letter-spacing:1.05px;">(360) Collection | 1.0-sample</div>
<div style="left:17px;top:281px;width:82px;height:137px;background:#2a2a2a;border-radius:8px;"></div>
<div style="left:17px;top:281px;width:82px;height:66px;background:#4772b3;border-radius:8px 8px 0 0;"></div>
<div style="left:16px;top:431px;width:83px;height:278px;background:#2a2a2a;border-radius:8px;"></div>
<div style="left:16px;top:720px;width:83px;height:139px;background:#2a2a2a;border-radius:8px;"></div>
<div style="left:17px;top:498px;width:82px;height:1px;background:#383838;"></div>
<div style="left:17px;top:567px;width:82px;height:1px;background:#383838;"></div>
<div style="left:17px;top:637px;width:82px;height:1px;background:#383838;"></div>
<div style="left:17px;top:789px;width:82px;height:1px;background:#383838;"></div>
<svg style="position:absolute;left:34px;top:290px;" width="46" height="46" viewBox="0 0 46 46"><rect x="3" y="3" width="40" height="38" fill="none" stroke="#ffaa00" stroke-width="2.6" stroke-dasharray="6 4.5"/><path d="M18 13v19l5-6 8 0z" fill="#dedede"/><path d="M44 44l-6 0 6-6z" fill="#8aa0c8"/></svg>
<svg style="position:absolute;left:32px;top:358px;" width="52" height="50" viewBox="0 0 52 50"><circle cx="24" cy="25" r="19" fill="none" stroke="#fff" stroke-width="3"/><circle cx="24" cy="25" r="19" fill="none" stroke="#b02828" stroke-width="3" stroke-dasharray="7.5 7.5" stroke-dashoffset="3"/><path d="M24 12v9M24 29v9M11 25h9M28 25h9" stroke="#bbb" stroke-width="2"/></svg>
<svg style="position:absolute;left:30px;top:441px;" width="56" height="50" viewBox="0 0 56 50"><path d="M28 4l-6 8h12zM28 46l-6-8h12zM4 25l8-6v12zM52 25l-8-6v12z" fill="#dcdcdc"/><path d="M28 14v6M28 30v6M14 25h6M36 25h6" stroke="#dcdcdc" stroke-width="3"/></svg>
<svg style="position:absolute;left:30px;top:510px;" width="56" height="50" viewBox="0 0 56 50"><path d="M14 17a17 17 0 0 1 28 0M42 33a17 17 0 0 1-28 0" fill="none" stroke="#dcdcdc" stroke-width="2.4"/><path d="M28 17l8 8-8 8-8-8z" fill="#aaa"/><path d="M5 21l10 0-5 9zM51 29l-10 0 5-9z" fill="#dcdcdc"/></svg>
<svg style="position:absolute;left:30px;top:580px;" width="56" height="50" viewBox="0 0 56 50"><path d="M26 6h16v34H8V24" fill="none" stroke="#aaa" stroke-width="2.4"/><rect x="8" y="24" width="18" height="18" fill="#dcdcdc"/><path d="M26 24l12-12M31 11h8v8" stroke="#dcdcdc" stroke-width="2.4" fill="none"/><path d="M82 44h-6l6-6z" fill="#666"/></svg>
<svg style="position:absolute;left:30px;top:648px;" width="56" height="50" viewBox="0 0 56 50"><path d="M14 13a18 18 0 0 1 28 0M42 37a18 18 0 0 1-28 0M10 19a18 18 0 0 0 0 12M46 19a18 18 0 0 1 0 12" fill="none" stroke="#dcdcdc" stroke-width="2.2"/><rect x="20" y="17" width="16" height="16" fill="#dcdcdc"/><path d="M28 3l-5 7h10zM28 47l-5-7h10zM3 25l7-5v10zM53 25l-7-5v10z" fill="#dcdcdc"/></svg>
<svg style="position:absolute;left:30px;top:730px;" width="56" height="50" viewBox="0 0 56 50"><path d="M8 34l4-10 20-20 6 6-20 20z" fill="#dcdcdc"/><path d="M6 40c6 6 12 2 16-3s10-8 16 1" fill="none" stroke="#6bd6a0" stroke-width="2.6"/></svg>
<svg style="position:absolute;left:30px;top:800px;" width="56" height="50" viewBox="0 0 56 50"><path d="M8 4v40h38" fill="none" stroke="#dcdcdc" stroke-width="4"/><path d="M12 40V18a22 22 0 0 1 22 22z" fill="#7fdcaa"/><path d="M12 10h5M12 16h5M12 22h5M12 28h5M12 34h5M18 44v-5M24 44v-5M30 44v-5M36 44v-5M42 44v-5" stroke="#dcdcdc" stroke-width="1.6"/></svg>
<svg style="position:absolute;left:88px;top:333px;" width="10" height="10" viewBox="0 0 10 10"><path d="M9 1v8H1z" fill="#6a6a6a"/></svg>
<svg style="position:absolute;left:88px;top:623px;" width="10" height="10" viewBox="0 0 10 10"><path d="M9 1v8H1z" fill="#6a6a6a"/></svg>
<svg style="position:absolute;left:88px;top:775px;" width="10" height="10" viewBox="0 0 10 10"><path d="M9 1v8H1z" fill="#6a6a6a"/></svg>
<div style="left:1938px;top:263px;width:400px;height:805px;background:rgba(58,58,58,0.96);"></div>
<div style="left:1938px;top:263px;width:400px;height:48px;background:#434343;"></div>
<svg style="position:absolute;left:1952px;top:277px;" width="20" height="20" viewBox="0 0 20 20"><path d="M2 4h16L10 17z" fill="#b8b8b8"/></svg>
<div class="tx" style="left:1982px;top:267.0px;height:40px;line-height:40px;font-size:22px;color:#e6e6e6;letter-spacing:0.7px;">Transform</div>
<svg style="position:absolute;left:2298px;top:280px;" width="28" height="14" viewBox="0 0 28 14"><rect x="2" y="2" width="2.4" height="2.4" fill="#202020"/><rect x="2" y="9" width="2.4" height="2.4" fill="#202020"/><rect x="8" y="2" width="2.4" height="2.4" fill="#202020"/><rect x="8" y="9" width="2.4" height="2.4" fill="#202020"/><rect x="14" y="2" width="2.4" height="2.4" fill="#202020"/><rect x="14" y="9" width="2.4" height="2.4" fill="#202020"/><rect x="20" y="2" width="2.4" height="2.4" fill="#202020"/><rect x="20" y="9" width="2.4" height="2.4" fill="#202020"/></svg>
<div class="tx" style="left:1963px;top:327.0px;height:40px;line-height:40px;font-size:22px;color:#dcdcdc;letter-spacing:0.7px;">Location:</div>
<div style="left:1956px;top:368px;width:279px;height:118px;background:#595959;border-radius:7px;border:1px solid #4a4a4a;"></div>
<div class="tx" style="left:1987px;top:367.0px;height:40px;line-height:40px;font-size:22px;color:#e0e0e0;letter-spacing:0.7px;">X</div>
<div class="tx" style="left:207px;top:367.0px;height:40px;line-height:40px;font-size:22px;color:#e0e0e0;letter-spacing:0.7px;width:2000px;text-align:right;">0 m</div>
<div style="left:1956px;top:406px;width:279px;height:2px;background:#3a3a3a;"></div>
<div class="tx" style="left:1987px;top:407.0px;height:40px;line-height:40px;font-size:22px;color:#e0e0e0;letter-spacing:0.7px;">Y</div>
<div class="tx" style="left:207px;top:407.0px;height:40px;line-height:40px;font-size:22px;color:#e0e0e0;letter-spacing:0.7px;width:2000px;text-align:right;">0 m</div>
<div style="left:1956px;top:446px;width:279px;height:2px;background:#3a3a3a;"></div>
<div class="tx" style="left:1987px;top:447.0px;height:40px;line-height:40px;font-size:22px;color:#e0e0e0;letter-spacing:0.7px;">Z</div>
<div class="tx" style="left:207px;top:447.0px;height:40px;line-height:40px;font-size:22px;color:#e0e0e0;letter-spacing:0.7px;width:2000px;text-align:right;">0 m</div>
<div class="tx" style="left:1963px;top:491.0px;height:40px;line-height:40px;font-size:22px;color:#dcdcdc;letter-spacing:0.7px;">Rotation:</div>
<div style="left:1956px;top:532px;width:279px;height:118px;background:#595959;border-radius:7px;border:1px solid #4a4a4a;"></div>
<div class="tx" style="left:1987px;top:531.0px;height:40px;line-height:40px;font-size:22px;color:#e0e0e0;letter-spacing:0.7px;">X</div>
<div class="tx" style="left:207px;top:531.0px;height:40px;line-height:40px;font-size:22px;color:#e0e0e0;letter-spacing:0.7px;width:2000px;text-align:right;">0°</div>
<div style="left:1956px;top:570px;width:279px;height:2px;background:#3a3a3a;"></div>
<div class="tx" style="left:1987px;top:571.0px;height:40px;line-height:40px;font-size:22px;color:#e0e0e0;letter-spacing:0.7px;">Y</div>
<div class="tx" style="left:207px;top:571.0px;height:40px;line-height:40px;font-size:22px;color:#e0e0e0;letter-spacing:0.7px;width:2000px;text-align:right;">-0°</div>
<div style="left:1956px;top:610px;width:279px;height:2px;background:#3a3a3a;"></div>
<div class="tx" style="left:1987px;top:611.0px;height:40px;line-height:40px;font-size:22px;color:#e0e0e0;letter-spacing:0.7px;">Z</div>
<div class="tx" style="left:207px;top:611.0px;height:40px;line-height:40px;font-size:22px;color:#e0e0e0;letter-spacing:0.7px;width:2000px;text-align:right;">0°</div>
<svg style="position:absolute;left:2272px;top:375px;" width="32" height="28" viewBox="0 0 32 28"><path d="M3 12V8a6 6 0 0 1 12 0" fill="none" stroke="#a8a8a8" stroke-width="2.2"/><rect x="10" y="12" width="17" height="12" fill="none" stroke="#a8a8a8" stroke-width="2.2"/><path d="M18.5 16v4" stroke="#a8a8a8" stroke-width="2"/></svg>
<svg style="position:absolute;left:2272px;top:414px;" width="32" height="28" viewBox="0 0 32 28"><path d="M3 12V8a6 6 0 0 1 12 0" fill="none" stroke="#a8a8a8" stroke-width="2.2"/><rect x="10" y="12" width="17" height="12" fill="none" stroke="#a8a8a8" stroke-width="2.2"/><path d="M18.5 16v4" stroke="#a8a8a8" stroke-width="2"/></svg>
<svg style="position:absolute;left:2272px;top:454px;" width="32" height="28" viewBox="0 0 32 28"><path d="M3 12V8a6 6 0 0 1 12 0" fill="none" stroke="#a8a8a8" stroke-width="2.2"/><rect x="10" y="12" width="17" height="12" fill="none" stroke="#a8a8a8" stroke-width="2.2"/><path d="M18.5 16v4" stroke="#a8a8a8" stroke-width="2"/></svg>
<svg style="position:absolute;left:2272px;top:539px;" width="32" height="28" viewBox="0 0 32 28"><path d="M3 12V8a6 6 0 0 1 12 0" fill="none" stroke="#a8a8a8" stroke-width="2.2"/><rect x="10" y="12" width="17" height="12" fill="none" stroke="#a8a8a8" stroke-width="2.2"/><path d="M18.5 16v4" stroke="#a8a8a8" stroke-width="2"/></svg>
<svg style="position:absolute;left:2272px;top:578px;" width="32" height="28" viewBox="0 0 32 28"><path d="M3 12V8a6 6 0 0 1 12 0" fill="none" stroke="#a8a8a8" stroke-width="2.2"/><rect x="10" y="12" width="17" height="12" fill="none" stroke="#a8a8a8" stroke-width="2.2"/><path d="M18.5 16v4" stroke="#a8a8a8" stroke-width="2"/></svg>
<svg style="position:absolute;left:2272px;top:618px;" width="32" height="28" viewBox="0 0 32 28"><path d="M3 12V8a6 6 0 0 1 12 0" fill="none" stroke="#a8a8a8" stroke-width="2.2"/><rect x="10" y="12" width="17" height="12" fill="none" stroke="#a8a8a8" stroke-width="2.2"/><path d="M18.5 16v4" stroke="#a8a8a8" stroke-width="2"/></svg>
<svg style="position:absolute;left:2272px;top:748px;" width="32" height="28" viewBox="0 0 32 28"><path d="M3 12V8a6 6 0 0 1 12 0" fill="none" stroke="#a8a8a8" stroke-width="2.2"/><rect x="10" y="12" width="17" height="12" fill="none" stroke="#a8a8a8" stroke-width="2.2"/><path d="M18.5 16v4" stroke="#a8a8a8" stroke-width="2"/></svg>
<svg style="position:absolute;left:2272px;top:787px;" width="32" height="28" viewBox="0 0 32 28"><path d="M3 12V8a6 6 0 0 1 12 0" fill="none" stroke="#a8a8a8" stroke-width="2.2"/><rect x="10" y="12" width="17" height="12" fill="none" stroke="#a8a8a8" stroke-width="2.2"/><path d="M18.5 16v4" stroke="#a8a8a8" stroke-width="2"/></svg>
<svg style="position:absolute;left:2272px;top:826px;" width="32" height="28" viewBox="0 0 32 28"><path d="M3 12V8a6 6 0 0 1 12 0" fill="none" stroke="#a8a8a8" stroke-width="2.2"/><rect x="10" y="12" width="17" height="12" fill="none" stroke="#a8a8a8" stroke-width="2.2"/><path d="M18.5 16v4" stroke="#a8a8a8" stroke-width="2"/></svg>
<div style="left:1956px;top:657px;width:366px;height:37px;background:#282828;border-radius:7px;border:1px solid #3f3f3f;"></div>
<div class="tx" style="left:1970px;top:655.0px;height:40px;line-height:40px;font-size:22px;color:#dcdcdc;letter-spacing:0.7px;">XYZ Euler</div>
<svg style="position:absolute;left:2301px;top:670.5px;" width="18" height="13.0" viewBox="0 0 18 13.0"><path d="M2 3l7.0 7.0l7.0 -7.0" fill="none" stroke="#d8d8d8" stroke-width="2.4"/></svg>
<div class="tx" style="left:1963px;top:699.0px;height:40px;line-height:40px;font-size:22px;color:#dcdcdc;letter-spacing:0.7px;">Scale:</div>
<div style="left:1956px;top:741px;width:279px;height:118px;background:#595959;border-radius:7px;border:1px solid #4a4a4a;"></div>
<div class="tx" style="left:1987px;top:740.0px;height:40px;line-height:40px;font-size:22px;color:#e0e0e0;letter-spacing:0.7px;">X</div>
<div class="tx" style="left:207px;top:740.0px;height:40px;line-height:40px;font-size:22px;color:#e0e0e0;letter-spacing:0.7px;width:2000px;text-align:right;">0.001</div>
<div style="left:1956px;top:779px;width:279px;height:2px;background:#3a3a3a;"></div>
<div class="tx" style="left:1987px;top:780.0px;height:40px;line-height:40px;font-size:22px;color:#e0e0e0;letter-spacing:0.7px;">Y</div>
<div class="tx" style="left:207px;top:780.0px;height:40px;line-height:40px;font-size:22px;color:#e0e0e0;letter-spacing:0.7px;width:2000px;text-align:right;">0.001</div>
<div style="left:1956px;top:819px;width:279px;height:2px;background:#3a3a3a;"></div>
<div class="tx" style="left:1987px;top:820.0px;height:40px;line-height:40px;font-size:22px;color:#e0e0e0;letter-spacing:0.7px;">Z</div>
<div class="tx" style="left:207px;top:820.0px;height:40px;line-height:40px;font-size:22px;color:#e0e0e0;letter-spacing:0.7px;width:2000px;text-align:right;">0.001</div>
<div class="tx" style="left:1963px;top:863.0px;height:40px;line-height:40px;font-size:22px;color:#dcdcdc;letter-spacing:0.7px;">Dimensions:</div>
<div style="left:1956px;top:905px;width:366px;height:118px;background:#595959;border-radius:7px;border:1px solid #4a4a4a;"></div>
<div class="tx" style="left:1987px;top:904.0px;height:40px;line-height:40px;font-size:22px;color:#e0e0e0;letter-spacing:0.7px;">X</div>
<div class="tx" style="left:294px;top:904.0px;height:40px;line-height:40px;font-size:22px;color:#e0e0e0;letter-spacing:0.7px;width:2000px;text-align:right;">6.51 m</div>
<div style="left:1956px;top:943px;width:366px;height:2px;background:#3a3a3a;"></div>
<div class="tx" style="left:1987px;top:944.0px;height:40px;line-height:40px;font-size:22px;color:#e0e0e0;letter-spacing:0.7px;">Y</div>
<div class="tx" style="left:294px;top:944.0px;height:40px;line-height:40px;font-size:22px;color:#e0e0e0;letter-spacing:0.7px;width:2000px;text-align:right;">6.54 m</div>
<div style="left:1956px;top:983px;width:366px;height:2px;background:#3a3a3a;"></div>
<div class="tx" style="left:1987px;top:984.0px;height:40px;line-height:40px;font-size:22px;color:#e0e0e0;letter-spacing:0.7px;">Z</div>
<div class="tx" style="left:294px;top:984.0px;height:40px;line-height:40px;font-size:22px;color:#e0e0e0;letter-spacing:0.7px;width:2000px;text-align:right;">0.278 m</div>
<div style="left:1938px;top:1039px;width:400px;height:29px;background:#464646;"></div>
<svg style="position:absolute;left:1955px;top:1052px;" width="18" height="16" viewBox="0 0 18 16"><path d="M3 2l13 8-13 8z" fill="#b8b8b8"/></svg>
<div class="tx" style="left:1983px;top:1043.0px;height:40px;line-height:40px;font-size:22px;color:#e6e6e6;letter-spacing:0.7px;clip-path:inset(0 0 15px 0);">Properties</div>
<svg style="position:absolute;left:2300px;top:1054px;" width="28" height="14" viewBox="0 0 28 14"><rect x="2" y="2" width="2.4" height="2.4" fill="#202020"/><rect x="2" y="9" width="2.4" height="2.4" fill="#202020"/><rect x="8" y="2" width="2.4" height="2.4" fill="#202020"/><rect x="8" y="9" width="2.4" height="2.4" fill="#202020"/><rect x="14" y="2" width="2.4" height="2.4" fill="#202020"/><rect x="14" y="9" width="2.4" height="2.4" fill="#202020"/><rect x="20" y="2" width="2.4" height="2.4" fill="#202020"/><rect x="20" y="9" width="2.4" height="2.4" fill="#202020"/></svg>
<div style="left:2338px;top:263px;width:39px;height:805px;background:#252525;"></div>
<div style="left:2338px;top:275px;width:37px;height:81px;background:#464646;border-radius:0 8px 8px 0;"></div>
<div style="left:2338px;top:369px;width:37px;height:72px;background:#2e2e2e;border-radius:0 8px 8px 0;"></div>
<div style="left:2338px;top:454px;width:37px;height:82px;background:#2e2e2e;border-radius:0 8px 8px 0;"></div>
<div class="tx" style="left:2297px;top:295px;width:120px;height:40px;line-height:40px;text-align:center;font-size:22px;color:#e8e8e8;letter-spacing:0.7px;transform:rotate(-90deg);">Item</div>
<div class="tx" style="left:2297px;top:385px;width:120px;height:40px;line-height:40px;text-align:center;font-size:22px;color:#d0d0d0;letter-spacing:0.7px;transform:rotate(-90deg);">Tool</div>
<div class="tx" style="left:2297px;top:475px;width:120px;height:40px;line-height:40px;text-align:center;font-size:22px;color:#d0d0d0;letter-spacing:0.7px;transform:rotate(-90deg);">View</div>
<div style="left:2384px;top:160px;width:494px;height:511px;background:#282828;border-radius:12px 12px 12px 12px;"></div>
<div style="left:2384px;top:160px;width:494px;height:51px;background:#3b3b3b;border-radius:12px 12px 0 0;"></div>
<div style="left:2401px;top:166px;width:61px;height:38px;background:#2b2b2b;border-radius:7px;border:1px solid #3c3c3c;"></div>
<svg style="position:absolute;left:2406px;top:170px;" width="38" height="30" viewBox="0 0 38 30"><rect x="2" y="2" width="10" height="6" fill="#d0d0d0"/><path d="M6 8v18h6M6 17h6" fill="none" stroke="#a0a0a0" stroke-width="2"/><rect x="13" y="13" width="14" height="7" fill="#d0d0d0"/><rect x="13" y="22" width="14" height="7" fill="#d0d0d0"/></svg>
<svg style="position:absolute;left:2441px;top:179.5px;" width="18" height="13.0" viewBox="0 0 18 13.0"><path d="M2 3l7.0 7.0l7.0 -7.0" fill="none" stroke="#d8d8d8" stroke-width="2.4"/></svg>
<div style="left:2474px;top:166px;width:61px;height:38px;background:#2b2b2b;border-radius:7px;border:1px solid #3c3c3c;"></div>
<svg style="position:absolute;left:2479px;top:170px;" width="38" height="30" viewBox="0 0 38 30"><path d="M2 10v18h18" fill="none" stroke="#c8c8c8" stroke-width="2"/><path d="M5 7v18h18" fill="none" stroke="#c8c8c8" stroke-width="2"/><rect x="8" y="2" width="20" height="19" fill="none" stroke="#d8d8d8" stroke-width="2.2"/><path d="M10 19l6-9 5 6 2-2 4 5z" fill="#d8d8d8"/><circle cx="23" cy="7" r="2.2" fill="#d8d8d8"/></svg>
<svg style="position:absolute;left:2514px;top:179.5px;" width="18" height="13.0" viewBox="0 0 18 13.0"><path d="M2 3l7.0 7.0l7.0 -7.0" fill="none" stroke="#d8d8d8" stroke-width="2.4"/></svg>
<div style="left:2570px;top:166px;width:230px;height:38px;background:#1d1d1d;border-radius:8px;border:1px solid #3a3a3a;"></div>
<svg style="position:absolute;left:2578px;top:170px;" width="34" height="32" viewBox="0 0 34 32"><circle cx="19" cy="12" r="9" fill="none" stroke="#d0d0d0" stroke-width="2.2"/><path d="M13 18L3 28" stroke="#d0d0d0" stroke-width="2.2"/></svg>
<div style="left:2835px;top:166px;width:60px;height:38px;background:#2b2b2b;border-radius:7px;border:1px solid #3c3c3c;"></div>
<svg style="position:absolute;left:2838px;top:170px;" width="34" height="30" viewBox="0 0 34 30"><path d="M2 3h28L19 16v11l-6-4V16z" fill="none" stroke="#d0d0d0" stroke-width="2.2"/></svg>
<div style="left:2384px;top:211px;width:494px;height:40px;background:#282828;"></div>
<div style="left:2384px;top:251px;width:494px;height:40px;background:#2b2b2b;"></div>
<div style="left:2384px;top:291px;width:494px;height:40px;background:#282828;"></div>
<div style="left:2384px;top:331px;width:494px;height:40px;background:#2b2b2b;"></div>
<div style="left:2384px;top:371px;width:494px;height:40px;background:#282828;"></div>
<div style="left:2384px;top:411px;width:494px;height:40px;background:#2b2b2b;"></div>
<div style="left:2384px;top:451px;width:494px;height:40px;background:#282828;"></div>
<div style="left:2384px;top:491px;width:494px;height:40px;background:#2b2b2b;"></div>
<div style="left:2384px;top:531px;width:494px;height:40px;background:#282828;"></div>
<div style="left:2384px;top:571px;width:494px;height:40px;background:#2b2b2b;"></div>
<div style="left:2384px;top:611px;width:494px;height:40px;background:#282828;"></div>
<div style="left:2384px;top:651px;width:494px;height:18px;background:#2b2b2b;"></div>
<div style="left:2384px;top:292px;width:494px;height:40px;background:#1c3a5e;"></div>
<div style="left:2384px;top:372px;width:494px;height:40px;background:#335a91;"></div>
<div style="left:2384px;top:660px;width:494px;height:11px;background:#282828;border-radius:0 0 12px 12px;"></div>
<div style="left:2481px;top:292px;width:2px;height:221px;background:#8a8a8a;"></div>
<div style="left:2482px;top:312px;width:24px;height:2px;background:#8a8a8a;"></div>
<div style="left:2482px;top:432px;width:24px;height:2px;background:#8a8a8a;"></div>
<div style="left:2482px;top:472px;width:24px;height:2px;background:#8a8a8a;"></div>
<div style="left:2482px;top:512px;width:24px;height:2px;background:#8a8a8a;"></div>
<svg style="position:absolute;left:2429px;top:219px;" width="30" height="30" viewBox="0 0 30 30"><rect x="2" y="3" width="24" height="6" fill="none" stroke="#d8d8d8" stroke-width="2.2"/><path d="M4 9v17h20V9" fill="none" stroke="#d8d8d8" stroke-width="2.2"/><rect x="11" y="13" width="6" height="3" rx="1.5" fill="#d8d8d8"/></svg>
<div class="tx" style="left:2472px;top:214.0px;height:40px;line-height:40px;font-size:22px;color:#dcdcdc;letter-spacing:0.7px;">Scene Collection</div>
<svg style="position:absolute;left:2428px;top:265px;" width="18" height="16" viewBox="0 0 18 16"><path d="M1 2h16L9 15z" fill="#b8b8b8"/></svg>
<div style="left:2473px;top:262px;width:21px;height:20px;background:#d8d8d8;border-radius:3px;"></div>
<svg style="position:absolute;left:2474px;top:263px;" width="20" height="18" viewBox="0 0 20 18"><path d="M3 9l5 5 9-10" fill="none" stroke="#222" stroke-width="3"/></svg>
<div style="left:2504px;top:256px;width:39px;height:34px;background:#3f3f3f;border-radius:7px;border:1px solid #555;"></div>
<svg style="position:absolute;left:2509px;top:259px;" width="30" height="30" viewBox="0 0 30 30"><rect x="2" y="3" width="24" height="6" fill="none" stroke="#d8d8d8" stroke-width="2.2"/><path d="M4 9v17h20V9" fill="none" stroke="#d8d8d8" stroke-width="2.2"/><rect x="11" y="13" width="6" height="3" rx="1.5" fill="#d8d8d8"/></svg>
<div class="tx" style="left:2552px;top:253.0px;height:40px;line-height:40px;font-size:22px;color:#dcdcdc;letter-spacing:0.7px;">Collection</div>
<svg style="position:absolute;left:2473px;top:304px;" width="18" height="16" viewBox="0 0 18 16"><path d="M1 2h16L9 15z" fill="#b8b8b8"/></svg>
<div style="left:2504px;top:296px;width:39px;height:34px;background:#476a8f;border-radius:7px;border:1px solid #5a7ca0;"></div>
<svg style="position:absolute;left:2509px;top:298px;" width="30" height="30" viewBox="0 0 30 30"><path d="M3 4h22L14 25z" fill="#e8924a"/><path d="M9 8h10l-5 10z" fill="#476a8f"/></svg>
<div class="tx" style="left:2552px;top:294.0px;height:40px;line-height:40px;font-size:22px;color:#ffaf29;letter-spacing:0.7px;">1.0-sample</div>
<svg style="position:absolute;left:2513px;top:344px;" width="18" height="16" viewBox="0 0 18 16"><path d="M1 2h16L9 15z" fill="#b8b8b8"/></svg>
<svg style="position:absolute;left:2548px;top:337px;" width="30" height="30" viewBox="0 0 30 30"><path d="M4 5h20L14 24z" fill="none" stroke="#1fc4a0" stroke-width="2.4"/><rect x="1" y="2" width="6" height="6" fill="#2b2b2b" stroke="#1fc4a0" stroke-width="2"/><rect x="21" y="2" width="6" height="6" fill="#2b2b2b" stroke="#1fc4a0" stroke-width="2"/><rect x="11" y="21" width="6" height="6" fill="#2b2b2b" stroke="#1fc4a0" stroke-width="2"/></svg>
<div class="tx" style="left:2592px;top:334.0px;height:40px;line-height:40px;font-size:22px;color:#dcdcdc;letter-spacing:0.7px;">1.0-sample</div>
<div style="left:2584px;top:375px;width:39px;height:34px;background:#4d6fa3;border-radius:7px;border:1px solid #6a88b8;"></div>
<svg style="position:absolute;left:2589px;top:378px;" width="30" height="30" viewBox="0 0 30 30"><circle cx="14" cy="14" r="12" fill="#e8667a"/><path d="M14 2a12 12 0 0 0-12 12h12zM14 14h12a12 12 0 0 1-12 12z" fill="#4d6fa3"/><circle cx="14" cy="14" r="12" fill="none" stroke="#e8667a" stroke-width="2.5"/></svg>
<div class="tx" style="left:2631px;top:373.0px;height:40px;line-height:40px;font-size:22px;color:#e6e6e6;letter-spacing:0.7px;">Material.001</div>
<svg style="position:absolute;left:2474px;top:424px;" width="16" height="18" viewBox="0 0 16 18"><path d="M2 1l13 8-13 8z" fill="#b8b8b8"/></svg>
<svg style="position:absolute;left:2506px;top:418px;" width="32" height="32" viewBox="0 0 32 32"><circle cx="9" cy="7" r="6" fill="#e8924a"/><circle cx="21" cy="7" r="6" fill="#e8924a"/><circle cx="9" cy="7" r="2" fill="#2b2b2b"/><circle cx="21" cy="7" r="2" fill="#2b2b2b"/><rect x="4" y="14" width="20" height="12" rx="2" fill="#e8924a"/><path d="M24 20l7-5v11z" fill="#e8924a"/><path d="M1 17v6" stroke="#e8924a" stroke-width="3"/></svg>
<div class="tx" style="left:2552px;top:414.0px;height:40px;line-height:40px;font-size:22px;color:#dcdcdc;letter-spacing:0.7px;">Camera</div>
<div style="left:2676px;top:415px;width:39px;height:36px;background:#474747;border-radius:7px;border:1px solid #5a5a5a;"></div>
<svg style="position:absolute;left:2680px;top:418px;" width="32" height="32" viewBox="0 0 32 32"><circle cx="9" cy="9" r="6.5" fill="none" stroke="#1fc4a0" stroke-width="2"/><circle cx="20" cy="8" r="6.5" fill="none" stroke="#1fc4a0" stroke-width="2"/><rect x="5" y="15" width="18" height="12" rx="1" fill="none" stroke="#1fc4a0" stroke-width="2"/><path d="M23 20l6-4v10l-6-4" fill="none" stroke="#1fc4a0" stroke-width="2"/></svg>
<svg style="position:absolute;left:2474px;top:464px;" width="16" height="18" viewBox="0 0 16 18"><path d="M2 1l13 8-13 8z" fill="#b8b8b8"/></svg>
<svg style="position:absolute;left:2508px;top:458px;" width="30" height="30" viewBox="0 0 30 30"><circle cx="14" cy="11" r="10" fill="#e8924a"/><rect x="9" y="19" width="10" height="5" fill="#e8924a"/><path d="M9 26h10" stroke="#e8924a" stroke-width="2"/><path d="M10 10l2 4h4l2-4" stroke="#2b2b2b" stroke-width="1.8" fill="none"/></svg>
<div class="tx" style="left:2552px;top:454.0px;height:40px;line-height:40px;font-size:22px;color:#dcdcdc;letter-spacing:0.7px;">Light</div>
<svg style="position:absolute;left:2649px;top:458px;" width="30" height="32" viewBox="0 0 30 32"><circle cx="14" cy="13" r="11" fill="none" stroke="#1fc4a0" stroke-width="2"/><circle cx="14" cy="12" r="3" fill="none" stroke="#1fc4a0" stroke-width="1.8"/><path d="M14 15v14" stroke="#1fc4a0" stroke-width="2" stroke-dasharray="3 2"/></svg>
<svg style="position:absolute;left:2473px;top:504px;" width="18" height="16" viewBox="0 0 18 16"><path d="M1 2h16L9 15z" fill="#b8b8b8"/></svg>
<svg style="position:absolute;left:2509px;top:498px;" width="30" height="30" viewBox="0 0 30 30"><path d="M3 4h22L14 25z" fill="#e8924a"/><path d="M9 8h10l-5 10z" fill="#282828"/></svg>
<div class="tx" style="left:2552px;top:494.0px;height:40px;line-height:40px;font-size:22px;color:#dcdcdc;letter-spacing:0.7px;">Plane</div>
<svg style="position:absolute;left:2513px;top:544px;" width="18" height="16" viewBox="0 0 18 16"><path d="M1 2h16L9 15z" fill="#b8b8b8"/></svg>
<svg style="position:absolute;left:2548px;top:537px;" width="30" height="30" viewBox="0 0 30 30"><path d="M4 5h20L14 24z" fill="none" stroke="#1fc4a0" stroke-width="2.4"/><rect x="1" y="2" width="6" height="6" fill="#2b2b2b" stroke="#1fc4a0" stroke-width="2"/><rect x="21" y="2" width="6" height="6" fill="#2b2b2b" stroke="#1fc4a0" stroke-width="2"/><rect x="11" y="21" width="6" height="6" fill="#2b2b2b" stroke="#1fc4a0" stroke-width="2"/></svg>
<div class="tx" style="left:2592px;top:534.0px;height:40px;line-height:40px;font-size:22px;color:#dcdcdc;letter-spacing:0.7px;">Plane</div>
<svg style="position:absolute;left:2589px;top:577px;" width="30" height="30" viewBox="0 0 30 30"><circle cx="14" cy="14" r="12" fill="#e8667a"/><path d="M14 2a12 12 0 0 0-12 12h12zM14 14h12a12 12 0 0 1-12 12z" fill="#282828"/><circle cx="14" cy="14" r="12" fill="none" stroke="#e8667a" stroke-width="2.5"/></svg>
<div class="tx" style="left:2631px;top:573.0px;height:40px;line-height:40px;font-size:22px;color:#dcdcdc;letter-spacing:0.7px;">Material.002</div>
<svg style="position:absolute;left:2831px;top:262px;" width="28" height="22" viewBox="0 0 28 22"><path d="M1 11c4-6 8-9 12-9s8 3 12 9c-4 6-8 9-12 9S5 17 1 11z" fill="#e0e0e0"/><circle cx="13" cy="11" r="5.5" fill="#2b2b2b"/><circle cx="13" cy="11" r="3" fill="#e0e0e0"/></svg>
<svg style="position:absolute;left:2831px;top:301px;" width="28" height="22" viewBox="0 0 28 22"><path d="M1 11c4-6 8-9 12-9s8 3 12 9c-4 6-8 9-12 9S5 17 1 11z" fill="#e0e0e0"/><circle cx="13" cy="11" r="5.5" fill="#1c3a5e"/><circle cx="13" cy="11" r="3" fill="#e0e0e0"/></svg>
<svg style="position:absolute;left:2831px;top:422px;" width="28" height="22" viewBox="0 0 28 22"><path d="M1 11c4-6 8-9 12-9s8 3 12 9c-4 6-8 9-12 9S5 17 1 11z" fill="#e0e0e0"/><circle cx="13" cy="11" r="5.5" fill="#2b2b2b"/><circle cx="13" cy="11" r="3" fill="#e0e0e0"/></svg>
<svg style="position:absolute;left:2831px;top:462px;" width="28" height="22" viewBox="0 0 28 22"><path d="M1 11c4-6 8-9 12-9s8 3 12 9c-4 6-8 9-12 9S5 17 1 11z" fill="#e0e0e0"/><circle cx="13" cy="11" r="5.5" fill="#2b2b2b"/><circle cx="13" cy="11" r="3" fill="#e0e0e0"/></svg>
<svg style="position:absolute;left:2831px;top:501px;" width="28" height="22" viewBox="0 0 28 22"><path d="M1 11c4-6 8-9 12-9s8 3 12 9c-4 6-8 9-12 9S5 17 1 11z" fill="#e0e0e0"/><circle cx="13" cy="11" r="5.5" fill="#2b2b2b"/><circle cx="13" cy="11" r="3" fill="#e0e0e0"/></svg>
<div style="left:2384px;top:678px;width:494px;height:1079px;background:#3d3d3d;border-radius:12px 12px 0 0;"></div>
<div style="left:2384px;top:678px;width:494px;height:50px;background:#3b3b3b;border-radius:12px 12px 0 0;"></div>
<div style="left:2400px;top:683px;width:62px;height:38px;background:#2b2b2b;border-radius:7px;border:1px solid #3c3c3c;"></div>
<svg style="position:absolute;left:2406px;top:687px;" width="36" height="30" viewBox="0 0 36 30"><rect x="2" y="2" width="22" height="11" rx="5.5" fill="#d8d8d8"/><rect x="2" y="16" width="22" height="11" rx="5.5" fill="#d8d8d8"/><rect x="12" y="5" width="9" height="5" rx="2" fill="#2b2b2b"/><rect x="5" y="19" width="9" height="5" rx="2" fill="#2b2b2b"/></svg>
<svg style="position:absolute;left:2441px;top:696.5px;" width="18" height="13.0" viewBox="0 0 18 13.0"><path d="M2 3l7.0 7.0l7.0 -7.0" fill="none" stroke="#d8d8d8" stroke-width="2.4"/></svg>
<svg style="position:absolute;left:2489px;top:687px;" width="30" height="30" viewBox="0 0 30 30"><path d="M3 8V3h5M22 3h5v5M27 22v5h-5M8 27H3v-5" fill="none" stroke="#a8a8a8" stroke-width="2"/><rect x="8" y="8" width="14" height="14" fill="#e0e0e0"/></svg>
<div class="tx" style="left:2537px;top:682.0px;height:40px;line-height:40px;font-size:22px;color:#e0e0e0;letter-spacing:0.7px;">1.0-sample</div>
<svg style="position:absolute;left:2686px;top:694px;" width="12" height="16" viewBox="0 0 12 16"><path d="M2 2l7 6-7 6" fill="none" stroke="#4a4a4a" stroke-width="2"/></svg>
<svg style="position:absolute;left:2719px;top:687px;" width="30" height="30" viewBox="0 0 30 30"><circle cx="15" cy="15" r="12" fill="#e8e8e8"/><path d="M15 3a12 12 0 0 0-12 12h12zM15 15h12a12 12 0 0 1-12 12z" fill="#3b3b3b"/><circle cx="15" cy="15" r="12" fill="none" stroke="#e8e8e8" stroke-width="2.4"/></svg>
<div class="tx" style="left:2766px;top:682.0px;height:40px;line-height:40px;font-size:22px;color:#e0e0e0;letter-spacing:0.7px;">Material.001</div>
<div style="left:2384px;top:728px;width:56px;height:1029px;background:#232323;"></div>
<div style="left:2388px;top:746px;width:52px;height:51px;background:#2c2c2c;border-radius:8px 0 0 8px;"></div>
<div style="left:2388px;top:818px;width:52px;height:51px;background:#2c2c2c;border-radius:8px 0 0 8px;"></div>
<div style="left:2388px;top:874px;width:52px;height:51px;background:#2c2c2c;border-radius:8px 0 0 8px;"></div>
<div style="left:2388px;top:930px;width:52px;height:51px;background:#2c2c2c;border-radius:8px 0 0 8px;"></div>
<div style="left:2388px;top:986px;width:52px;height:51px;background:#2c2c2c;border-radius:8px 0 0 8px;"></div>
<div style="left:2388px;top:1042px;width:52px;height:51px;background:#2c2c2c;border-radius:8px 0 0 8px;"></div>
<div style="left:2388px;top:1114px;width:52px;height:50px;background:#2c2c2c;border-radius:8px 0 0 8px;"></div>
<div style="left:2388px;top:1171px;width:52px;height:50px;background:#2c2c2c;border-radius:8px 0 0 8px;"></div>
<div style="left:2388px;top:1226px;width:52px;height:51px;background:#2c2c2c;border-radius:8px 0 0 8px;"></div>
<div style="left:2388px;top:1282px;width:52px;height:51px;background:#2c2c2c;border-radius:8px 0 0 8px;"></div>
<div style="left:2388px;top:1338px;width:52px;height:51px;background:#2c2c2c;border-radius:8px 0 0 8px;"></div>
<div style="left:2388px;top:1395px;width:52px;height:50px;background:#2c2c2c;border-radius:8px 0 0 8px;"></div>
<div style="left:2388px;top:1451px;width:52px;height:50px;background:#3d3d3d;border-radius:8px 0 0 8px;"></div>
<div style="left:2388px;top:1522px;width:52px;height:51px;background:#2c2c2c;border-radius:8px 0 0 8px;"></div>
<svg style="position:absolute;left:2399px;top:756px;" width="30" height="30" viewBox="0 0 30 30"><path d="M8 3v10M6 13h4v3a2 3 0 0 1-4 0z" stroke="#d0d0d0" stroke-width="2" fill="#d0d0d0"/><path d="M18 3c-3 2-3 6 0 8v14h4V11c3-2 3-6 0-8v5h-4z" fill="#d0d0d0"/></svg>
<svg style="position:absolute;left:2399px;top:828px;" width="30" height="30" viewBox="0 0 30 30"><rect x="3" y="8" width="24" height="18" rx="2" fill="#d0d0d0"/><rect x="9" y="4" width="10" height="5" fill="#d0d0d0"/><path d="M6 13h13M6 17h13M6 21h13" stroke="#2c2c2c" stroke-width="2"/><circle cx="23" cy="14" r="1.6" fill="#2c2c2c"/><circle cx="23" cy="20" r="1.6" fill="#2c2c2c"/></svg>
<svg style="position:absolute;left:2399px;top:884px;" width="30" height="30" viewBox="0 0 30 30"><rect x="3" y="4" width="24" height="9" rx="2" fill="#d0d0d0"/><rect x="7" y="13" width="16" height="13" fill="#d0d0d0"/><path d="M10 24l5-7 5 7z" fill="#2c2c2c"/></svg>
<svg style="position:absolute;left:2399px;top:940px;" width="30" height="30" viewBox="0 0 30 30"><path d="M3 10v16h16M6 7v16h16" fill="none" stroke="#c8c8c8" stroke-width="2"/><rect x="9" y="3" width="18" height="17" fill="none" stroke="#d0d0d0" stroke-width="2.2"/><path d="M11 18l5-8 4 5 2-2 4 5z" fill="#d0d0d0"/></svg>
<svg style="position:absolute;left:2399px;top:996px;" width="30" height="30" viewBox="0 0 30 30"><path d="M8 4c-3 5-5 9-5 12a5 5 0 0 0 10 0c0-3-2-7-5-12z" fill="#d0d0d0"/><circle cx="22" cy="8" r="3" fill="#d0d0d0"/><circle cx="19" cy="20" r="6" fill="#2c2c2c" stroke="#d0d0d0" stroke-width="2.2"/></svg>
<svg style="position:absolute;left:2399px;top:1052px;" width="30" height="30" viewBox="0 0 30 30"><circle cx="15" cy="15" r="11.5" fill="none" stroke="#e0606e" stroke-width="2.6"/><path d="M7 10c3-2 7-1 8 2s-2 4 0 6 3 5 1 8c-3-1-5-4-6-7s-4-4-3-9zM18 5c3 1 6 3 7 6-2 1-4 0-5-2s-3-2-2-4zM20 16c3 0 5 1 5 3-1 3-3 5-5 6 0-3-2-5 0-9z" fill="#e0606e"/><path d="M2 28L28 2" stroke="#e0606e" stroke-width="2"/></svg>
<svg style="position:absolute;left:2399px;top:1124px;" width="30" height="30" viewBox="0 0 30 30"><path d="M3 9V3h6M21 3h6v6M27 21v6h-6M9 27H3v-6" fill="none" stroke="#e08a4a" stroke-width="2"/><rect x="8" y="8" width="14" height="14" fill="#e08a4a"/></svg>
<svg style="position:absolute;left:2399px;top:1181px;" width="30" height="30" viewBox="0 0 30 30"><path d="M6 25L17 14" stroke="#5a98e0" stroke-width="5.5" stroke-linecap="round"/><circle cx="20" cy="10" r="8" fill="#5a98e0"/><path d="M21 9L30 0" stroke="#2c2c2c" stroke-width="5.5"/></svg>
<svg style="position:absolute;left:2399px;top:1236px;" width="30" height="30" viewBox="0 0 30 30"><circle cx="6" cy="6" r="4" fill="#5a98e0"/><circle cx="24" cy="6" r="3" fill="#5a98e0"/><circle cx="6" cy="24" r="3" fill="#5a98e0"/><circle cx="24" cy="24" r="4" fill="#5a98e0"/><path d="M6 6v18M6 6h18M6 6l18 18" stroke="#5a98e0" stroke-width="2"/></svg>
<svg style="position:absolute;left:2399px;top:1292px;" width="30" height="30" viewBox="0 0 30 30"><circle cx="14" cy="16" r="10" fill="none" stroke="#5a98e0" stroke-width="2.4" stroke-dasharray="44 20"/><circle cx="14" cy="16" r="5" fill="#5a98e0"/><circle cx="23" cy="7" r="3" fill="#5a98e0"/></svg>
<svg style="position:absolute;left:2399px;top:1348px;" width="30" height="30" viewBox="0 0 30 30"><path d="M4 18a10 10 0 0 1 10-10h11l-2 8a10 10 0 0 1-19 2z" fill="none" stroke="#5a98e0" stroke-width="2.4"/><circle cx="13" cy="18" r="5" fill="none" stroke="#5a98e0" stroke-width="2.4"/><circle cx="13" cy="18" r="2" fill="#5a98e0"/></svg>
<svg style="position:absolute;left:2399px;top:1405px;" width="30" height="30" viewBox="0 0 30 30"><path d="M4 5h22L15 25z" fill="none" stroke="#1fc4a0" stroke-width="2.4"/><rect x="1" y="2" width="6" height="6" fill="#2c2c2c" stroke="#1fc4a0" stroke-width="2"/><rect x="23" y="2" width="6" height="6" fill="#2c2c2c" stroke="#1fc4a0" stroke-width="2"/><rect x="12" y="22" width="6" height="6" fill="#2c2c2c" stroke="#1fc4a0" stroke-width="2"/></svg>
<svg style="position:absolute;left:2399px;top:1461px;" width="30" height="30" viewBox="0 0 30 30"><circle cx="15" cy="15" r="12" fill="#f06a7c"/><path d="M15 3a12 12 0 0 0-12 12h12zM15 15h12a12 12 0 0 1-12 12z" fill="#3d3d3d"/><circle cx="15" cy="15" r="12" fill="none" stroke="#f06a7c" stroke-width="2.6"/></svg>
<svg style="position:absolute;left:2399px;top:1532px;" width="30" height="30" viewBox="0 0 30 30"><rect x="2" y="2" width="26" height="26" fill="#e0606e"/><rect x="4.0" y="4.0" width="5.5" height="5.5" fill="#2c2c2c"/><rect x="4.0" y="15.0" width="5.5" height="5.5" fill="#2c2c2c"/><rect x="9.5" y="9.5" width="5.5" height="5.5" fill="#2c2c2c"/><rect x="9.5" y="20.5" width="5.5" height="5.5" fill="#2c2c2c"/><rect x="15.0" y="4.0" width="5.5" height="5.5" fill="#2c2c2c"/><rect x="15.0" y="15.0" width="5.5" height="5.5" fill="#2c2c2c"/><rect x="20.5" y="9.5" width="5.5" height="5.5" fill="#2c2c2c"/><rect x="20.5" y="20.5" width="5.5" height="5.5" fill="#2c2c2c"/></svg>
<div style="left:2458px;top:746px;width:348px;height:155px;background:#333333;border-radius:8px;border:1px solid #3a3a3a;"></div>
<div style="left:2468px;top:756px;width:328px;height:36px;background:#5f6672;border-radius:6px;"></div>
<svg style="position:absolute;left:2472px;top:759px;" width="30" height="30" viewBox="0 0 30 30"><defs><radialGradient id="sph" cx="35%" cy="35%" r="65%"><stop offset="0" stop-color="#ff9a2a"/><stop offset="0.6" stop-color="#e05a00"/><stop offset="1" stop-color="#6a2000"/></radialGradient></defs><circle cx="15" cy="15" r="12.5" fill="url(#sph)"/></svg>
<div class="tx" style="left:2516px;top:753.0px;height:40px;line-height:40px;font-size:22px;color:#e8e8e8;letter-spacing:0.7px;">Material.001</div>
<svg style="position:absolute;left:2477px;top:874px;" width="18" height="18" viewBox="0 0 18 18"><path d="M3 2l13 7-13 7z" fill="#8a8a8a"/></svg>
<svg style="position:absolute;left:2639px;top:877px;" width="28" height="14" viewBox="0 0 28 14"><rect x="2" y="2" width="2.4" height="2.4" fill="#cfcfcf"/><rect x="2" y="9" width="2.4" height="2.4" fill="#cfcfcf"/><rect x="8" y="2" width="2.4" height="2.4" fill="#cfcfcf"/><rect x="8" y="9" width="2.4" height="2.4" fill="#cfcfcf"/><rect x="14" y="2" width="2.4" height="2.4" fill="#cfcfcf"/><rect x="14" y="9" width="2.4" height="2.4" fill="#cfcfcf"/><rect x="20" y="2" width="2.4" height="2.4" fill="#cfcfcf"/><rect x="20" y="9" width="2.4" height="2.4" fill="#cfcfcf"/></svg>
<div style="left:2826px;top:746px;width:36px;height:77px;background:#545454;border-radius:6px;"></div>
<div style="left:2826px;top:782px;width:36px;height:1px;background:#3a3a3a;"></div>
<svg style="position:absolute;left:2832px;top:751px;" width="24" height="26" viewBox="0 0 24 26"><path d="M12 3v18M3 12h18" stroke="#e0e0e0" stroke-width="2.4"/></svg>
<svg style="position:absolute;left:2832px;top:790px;" width="24" height="26" viewBox="0 0 24 26"><path d="M3 13h18" stroke="#e0e0e0" stroke-width="2.4"/></svg>
<div style="left:2826px;top:838px;width:36px;height:35px;background:#282828;border-radius:6px;"></div>
<svg style="position:absolute;left:2835px;top:849.5px;" width="18" height="13.0" viewBox="0 0 18 13.0"><path d="M2 3l7.0 7.0l7.0 -7.0" fill="none" stroke="#d8d8d8" stroke-width="2.4"/></svg>
<div style="left:2458px;top:917px;width:324px;height:35px;background:#2b2b2b;border-radius:7px;border:1px solid #383838;"></div>
<div style="left:2517px;top:918px;width:145px;height:33px;background:#1d1d1d;"></div>
<div style="left:2662px;top:918px;width:40px;height:33px;background:#545454;"></div>
<div style="left:2702px;top:918px;width:40px;height:33px;background:#545454;border-left:1px solid #3a3a3a;"></div>
<div style="left:2742px;top:918px;width:39px;height:33px;background:#545454;border-radius:0 6px 6px 0;border-left:1px solid #3a3a3a;"></div>
<svg style="position:absolute;left:2463px;top:920px;" width="54" height="30" viewBox="0 0 54 30"><circle cx="14" cy="15" r="11" fill="#e8e8e8"/><path d="M14 4a11 11 0 0 0-11 11h11zM14 15h11a11 11 0 0 1-11 11z" fill="#2b2b2b"/><circle cx="14" cy="15" r="11" fill="none" stroke="#e8e8e8" stroke-width="2.4"/><path d="M33 12l5 5 5-5" fill="none" stroke="#d8d8d8" stroke-width="2.2"/></svg>
<div class="tx" style="left:2533px;top:914.0px;height:40px;line-height:40px;font-size:22px;color:#e0e0e0;letter-spacing:0.4px;">Material.0...</div>
<svg style="position:absolute;left:2668px;top:920px;" width="28" height="30" viewBox="0 0 28 30"><path d="M14 3l10 4v8c0 6-5 10-10 12C9 25 4 21 4 15V7z" fill="none" stroke="#8a8a8a" stroke-width="2"/></svg>
<svg style="position:absolute;left:2708px;top:920px;" width="28" height="30" viewBox="0 0 28 30"><path d="M9 6h10l6 6v13H9z" fill="none" stroke="#c8c8c8" stroke-width="2"/><path d="M5 10v15" stroke="#c8c8c8" stroke-width="2"/><path d="M19 6v6h6" fill="none" stroke="#c8c8c8" stroke-width="2"/></svg>
<svg style="position:absolute;left:2750px;top:922px;" width="24" height="24" viewBox="0 0 24 24"><path d="M5 5l14 14M19 5L5 19" stroke="#d0d0d0" stroke-width="2.2"/></svg>
<div style="left:2802px;top:917px;width:60px;height:35px;background:#2b2b2b;border-radius:7px;border:1px solid #3c3c3c;"></div>
<svg style="position:absolute;left:2806px;top:920px;" width="52" height="30" viewBox="0 0 52 30"><path d="M5 5h20L15 24z" fill="none" stroke="#d0d0d0" stroke-width="2.2"/><rect x="2" y="2" width="6" height="6" fill="#2b2b2b" stroke="#d0d0d0" stroke-width="2"/><rect x="22" y="2" width="6" height="6" fill="#2b2b2b" stroke="#d0d0d0" stroke-width="2"/><rect x="12" y="21" width="6" height="6" fill="#2b2b2b" stroke="#d0d0d0" stroke-width="2"/><path d="M34 12l5 5 5-5" fill="none" stroke="#d8d8d8" stroke-width="2.2"/></svg>
<div style="left:2440px;top:962px;width:438px;height:104px;background:#424242;"></div>
<svg style="position:absolute;left:2455px;top:985px;" width="18" height="18" viewBox="0 0 18 18"><path d="M3 2l13 7-13 7z" fill="#9a9a9a"/></svg>
<div class="tx" style="left:2484px;top:974.0px;height:40px;line-height:40px;font-size:22px;color:#e0e0e0;letter-spacing:0.7px;">Preview</div>
<svg style="position:absolute;left:2838px;top:987px;" width="28" height="14" viewBox="0 0 28 14"><rect x="2" y="2" width="2.4" height="2.4" fill="#1c1c1c"/><rect x="2" y="9" width="2.4" height="2.4" fill="#1c1c1c"/><rect x="8" y="2" width="2.4" height="2.4" fill="#1c1c1c"/><rect x="8" y="9" width="2.4" height="2.4" fill="#1c1c1c"/><rect x="14" y="2" width="2.4" height="2.4" fill="#1c1c1c"/><rect x="14" y="9" width="2.4" height="2.4" fill="#1c1c1c"/><rect x="20" y="2" width="2.4" height="2.4" fill="#1c1c1c"/><rect x="20" y="9" width="2.4" height="2.4" fill="#1c1c1c"/></svg>
<svg style="position:absolute;left:2455px;top:1034px;" width="20" height="18" viewBox="0 0 20 18"><path d="M2 3h16L10 16z" fill="#9a9a9a"/></svg>
<div class="tx" style="left:2484px;top:1023.0px;height:40px;line-height:40px;font-size:22px;color:#e0e0e0;letter-spacing:0.7px;">Surface</div>
<svg style="position:absolute;left:2838px;top:1036px;" width="28" height="14" viewBox="0 0 28 14"><rect x="2" y="2" width="2.4" height="2.4" fill="#1c1c1c"/><rect x="2" y="9" width="2.4" height="2.4" fill="#1c1c1c"/><rect x="8" y="2" width="2.4" height="2.4" fill="#1c1c1c"/><rect x="8" y="9" width="2.4" height="2.4" fill="#1c1c1c"/><rect x="14" y="2" width="2.4" height="2.4" fill="#1c1c1c"/><rect x="14" y="9" width="2.4" height="2.4" fill="#1c1c1c"/><rect x="20" y="2" width="2.4" height="2.4" fill="#1c1c1c"/><rect x="20" y="9" width="2.4" height="2.4" fill="#1c1c1c"/></svg>
<div style="left:2458px;top:1084px;width:404px;height:36px;background:#4772b3;border-radius:7px;"></div>
<svg style="position:absolute;left:2464px;top:1087px;" width="34" height="30" viewBox="0 0 34 30"><rect x="2" y="3" width="16" height="9" rx="3" fill="#fff"/><rect x="2" y="17" width="16" height="9" rx="3" fill="#fff"/><path d="M20 7c6 0 8 2 8 7s-2 7-8 7" fill="none" stroke="#fff" stroke-width="1.8"/><path d="M22 18l-3 3 3 3" fill="none" stroke="#fff" stroke-width="1.8"/></svg>
<div class="tx" style="left:1676.0px;top:1082.0px;height:40px;line-height:40px;font-size:22px;color:#ffffff;letter-spacing:0.7px;width:2000px;text-align:center;">Use Nodes</div>
<div class="tx" style="left:587px;top:1153.0px;height:40px;line-height:40px;font-size:22px;color:#e0e0e0;letter-spacing:0.7px;width:2000px;text-align:right;">Surface</div>
<div style="left:2604px;top:1155px;width:219px;height:38px;background:#282828;border-radius:7px;border:1px solid #3a3a3a;"></div>
<div style="left:2615px;top:1166px;width:16px;height:16px;background:#2fcc55;border-radius:8px;"></div>
<div class="tx" style="left:2645px;top:1154.0px;height:40px;line-height:40px;font-size:22px;color:#e0e0e0;letter-spacing:0.7px;">Diffuse BSDF</div>
<svg style="position:absolute;left:2466px;top:1236px;" width="18" height="18" viewBox="0 0 18 18"><path d="M3 2l13 7-13 7z" fill="#b8b8b8"/></svg>
<div class="tx" style="left:587px;top:1225.0px;height:40px;line-height:40px;font-size:22px;color:#e0e0e0;letter-spacing:0.7px;width:2000px;text-align:right;">Color</div>
<div style="left:2604px;top:1227px;width:219px;height:38px;background:#282828;border-radius:7px;border:1px solid #3a3a3a;"></div>
<div style="left:2615px;top:1238px;width:16px;height:16px;background:#c8c820;border-radius:8px;"></div>
<div class="tx" style="left:2645px;top:1226.0px;height:40px;line-height:40px;font-size:22px;color:#e0e0e0;letter-spacing:0.7px;">ColorRamp</div>
<div class="tx" style="left:587px;top:1275.0px;height:40px;line-height:40px;font-size:22px;color:#e0e0e0;letter-spacing:0.7px;width:2000px;text-align:right;">Roughness</div>
<div style="left:2604px;top:1277px;width:219px;height:38px;background:#282828;border-radius:7px;border:1px solid #3a3a3a;"></div>
<div style="left:2641px;top:1278px;width:181px;height:36px;background:#595959;border-radius:0 6px 6px 0;"></div>
<div style="left:2615px;top:1288px;width:16px;height:16px;background:#9a9a9a;border-radius:8px;"></div>
<div class="tx" style="left:1732.0px;top:1276.0px;height:40px;line-height:40px;font-size:22px;color:#e0e0e0;letter-spacing:0.7px;width:2000px;text-align:center;">0.000</div>
<div style="left:2839px;top:1292px;width:8px;height:8px;background:#d8d8d8;border-radius:4px;"></div>
<div class="tx" style="left:587px;top:1326.0px;height:40px;line-height:40px;font-size:22px;color:#e0e0e0;letter-spacing:0.7px;width:2000px;text-align:right;">Normal</div>
<div style="left:2604px;top:1327px;width:219px;height:38px;background:#282828;border-radius:7px;border:1px solid #3a3a3a;"></div>
<div style="left:2615px;top:1338px;width:16px;height:16px;background:#6363d0;border-radius:8px;"></div>
<div class="tx" style="left:2645px;top:1326.0px;height:40px;line-height:40px;font-size:22px;color:#e0e0e0;letter-spacing:0.7px;">Default</div>
<div style="left:2440px;top:1381px;width:438px;height:97px;background:#424242;"></div>
<svg style="position:absolute;left:2455px;top:1397px;" width="18" height="18" viewBox="0 0 18 18"><path d="M3 2l13 7-13 7z" fill="#9a9a9a"/></svg>
<div class="tx" style="left:2484px;top:1386.0px;height:40px;line-height:40px;font-size:22px;color:#e0e0e0;letter-spacing:0.7px;">Volume</div>
<svg style="position:absolute;left:2838px;top:1399px;" width="28" height="14" viewBox="0 0 28 14"><rect x="2" y="2" width="2.4" height="2.4" fill="#1c1c1c"/><rect x="2" y="9" width="2.4" height="2.4" fill="#1c1c1c"/><rect x="8" y="2" width="2.4" height="2.4" fill="#1c1c1c"/><rect x="8" y="9" width="2.4" height="2.4" fill="#1c1c1c"/><rect x="14" y="2" width="2.4" height="2.4" fill="#1c1c1c"/><rect x="14" y="9" width="2.4" height="2.4" fill="#1c1c1c"/><rect x="20" y="2" width="2.4" height="2.4" fill="#1c1c1c"/><rect x="20" y="9" width="2.4" height="2.4" fill="#1c1c1c"/></svg>
<svg style="position:absolute;left:2455px;top:1446px;" width="20" height="18" viewBox="0 0 20 18"><path d="M2 3h16L10 16z" fill="#9a9a9a"/></svg>
<div class="tx" style="left:2484px;top:1435.0px;height:40px;line-height:40px;font-size:22px;color:#e0e0e0;letter-spacing:0.7px;">Settings</div>
<svg style="position:absolute;left:2838px;top:1448px;" width="28" height="14" viewBox="0 0 28 14"><rect x="2" y="2" width="2.4" height="2.4" fill="#1c1c1c"/><rect x="2" y="9" width="2.4" height="2.4" fill="#1c1c1c"/><rect x="8" y="2" width="2.4" height="2.4" fill="#1c1c1c"/><rect x="8" y="9" width="2.4" height="2.4" fill="#1c1c1c"/><rect x="14" y="2" width="2.4" height="2.4" fill="#1c1c1c"/><rect x="14" y="9" width="2.4" height="2.4" fill="#1c1c1c"/><rect x="20" y="2" width="2.4" height="2.4" fill="#1c1c1c"/><rect x="20" y="9" width="2.4" height="2.4" fill="#1c1c1c"/></svg>
<div style="left:2621px;top:1502px;width:24px;height:24px;background:#666666;border-radius:4px;"></div>
<div class="tx" style="left:2652px;top:1493.0px;height:40px;line-height:40px;font-size:22px;color:#e0e0e0;letter-spacing:0.7px;">Backface Culling</div>
<div class="tx" style="left:603px;top:1544.0px;height:40px;line-height:40px;font-size:22px;color:#e0e0e0;letter-spacing:0.7px;width:2000px;text-align:right;">Blend Mode</div>
<div style="left:2620px;top:1545px;width:243px;height:38px;background:#282828;border-radius:7px;border:1px solid #3a3a3a;"></div>
<div class="tx" style="left:2634px;top:1544.0px;height:40px;line-height:40px;font-size:22px;color:#e0e0e0;letter-spacing:0.7px;">Opaque</div>
<svg style="position:absolute;left:2841px;top:1559.5px;" width="18" height="13.0" viewBox="0 0 18 13.0"><path d="M2 3l7.0 7.0l7.0 -7.0" fill="none" stroke="#d8d8d8" stroke-width="2.4"/></svg>
<div class="tx" style="left:603px;top:1594.0px;height:40px;line-height:40px;font-size:22px;color:#e0e0e0;letter-spacing:0.7px;width:2000px;text-align:right;">Shadow Mode</div>
<div style="left:2620px;top:1595px;width:243px;height:38px;background:#282828;border-radius:7px;border:1px solid #3a3a3a;"></div>
<div class="tx" style="left:2634px;top:1594.0px;height:40px;line-height:40px;font-size:22px;color:#e0e0e0;letter-spacing:0.7px;">Opaque</div>
<svg style="position:absolute;left:2841px;top:1609.5px;" width="18" height="13.0" viewBox="0 0 18 13.0"><path d="M2 3l7.0 7.0l7.0 -7.0" fill="none" stroke="#d8d8d8" stroke-width="2.4"/></svg>
<div class="tx" style="left:603px;top:1644.0px;height:40px;line-height:40px;font-size:22px;color:#8a8a8a;letter-spacing:0.3px;width:2000px;text-align:right;">Clip Thresho...</div>
<div style="left:2620px;top:1645px;width:243px;height:37px;background:#474747;border-radius:7px;"></div>
<div class="tx" style="left:1741.0px;top:1644.0px;height:40px;line-height:40px;font-size:22px;color:#8a8a8a;letter-spacing:0.7px;width:2000px;text-align:center;">0.000</div>
<div style="left:2621px;top:1702px;width:24px;height:24px;background:#666666;border-radius:4px;"></div>
<div class="tx" style="left:2652px;top:1693.0px;height:40px;line-height:40px;font-size:22px;color:#e0e0e0;letter-spacing:0.7px;">Screen Space Ref...</div>
<div style="left:2620px;top:1745px;width:243px;height:12px;background:#595959;border-radius:7px 7px 0 0;"></div>
<div class="tx" style="left:2459px;top:1737.0px;height:40px;line-height:40px;font-size:22px;color:#e0e0e0;letter-spacing:0.7px;clip-path:inset(0 0 20px 0);">Refraction D...</div>
<div style="left:2px;top:1075px;width:2375px;height:682px;background:#232323;border-radius:12px 12px 0 0;"></div>
<div style="left:2px;top:1075px;width:2375px;height:51px;background:#3b3b3b;border-radius:12px 12px 0 0;"></div>
<svg style="position:absolute;left:2px;top:1125px;" width="1936" height="632" viewBox="2 0 1936 632"><line x1="13.4" y1="0" x2="13.4" y2="640" stroke="#181818" stroke-width="1.6"/><line x1="45.7" y1="0" x2="45.7" y2="640" stroke="#1c1c1c" stroke-width="1.3"/><line x1="78.0" y1="0" x2="78.0" y2="640" stroke="#1c1c1c" stroke-width="1.3"/><line x1="110.3" y1="0" x2="110.3" y2="640" stroke="#1c1c1c" stroke-width="1.3"/><line x1="142.6" y1="0" x2="142.6" y2="640" stroke="#1c1c1c" stroke-width="1.3"/><line x1="174.8" y1="0" x2="174.8" y2="640" stroke="#181818" stroke-width="1.6"/><line x1="207.1" y1="0" x2="207.1" y2="640" stroke="#1c1c1c" stroke-width="1.3"/><line x1="239.4" y1="0" x2="239.4" y2="640" stroke="#1c1c1c" stroke-width="1.3"/><line x1="271.7" y1="0" x2="271.7" y2="640" stroke="#1c1c1c" stroke-width="1.3"/><line x1="304.0" y1="0" x2="304.0" y2="640" stroke="#1c1c1c" stroke-width="1.3"/><line x1="336.3" y1="0" x2="336.3" y2="640" stroke="#181818" stroke-width="1.6"/><line x1="368.6" y1="0" x2="368.6" y2="640" stroke="#1c1c1c" stroke-width="1.3"/><line x1="400.9" y1="0" x2="400.9" y2="640" stroke="#1c1c1c" stroke-width="1.3"/><line x1="433.2" y1="0" x2="433.2" y2="640" stroke="#1c1c1c" stroke-width="1.3"/><line x1="465.5" y1="0" x2="465.5" y2="640" stroke="#1c1c1c" stroke-width="1.3"/><line x1="497.7" y1="0" x2="497.7" y2="640" stroke="#181818" stroke-width="1.6"/><line x1="530.0" y1="0" x2="530.0" y2="640" stroke="#1c1c1c" stroke-width="1.3"/><line x1="562.3" y1="0" x2="562.3" y2="640" stroke="#1c1c1c" stroke-width="1.3"/><line x1="594.6" y1="0" x2="594.6" y2="640" stroke="#1c1c1c" stroke-width="1.3"/><line x1="626.9" y1="0" x2="626.9" y2="640" stroke="#1c1c1c" stroke-width="1.3"/><line x1="659.2" y1="0" x2="659.2" y2="640" stroke="#181818" stroke-width="1.6"/><line x1="691.5" y1="0" x2="691.5" y2="640" stroke="#1c1c1c" stroke-width="1.3"/><line x1="723.8" y1="0" x2="723.8" y2="640" stroke="#1c1c1c" stroke-width="1.3"/><line x1="756.1" y1="0" x2="756.1" y2="640" stroke="#1c1c1c" stroke-width="1.3"/><line x1="788.4" y1="0" x2="788.4" y2="640" stroke="#1c1c1c" stroke-width="1.3"/><line x1="820.6" y1="0" x2="820.6" y2="640" stroke="#181818" stroke-width="1.6"/><line x1="852.9" y1="0" x2="852.9" y2="640" stroke="#1c1c1c" stroke-width="1.3"/><line x1="885.2" y1="0" x2="885.2" y2="640" stroke="#1c1c1c" stroke-width="1.3"/><line x1="917.5" y1="0" x2="917.5" y2="640" stroke="#1c1c1c" stroke-width="1.3"/><line x1="949.8" y1="0" x2="949.8" y2="640" stroke="#1c1c1c" stroke-width="1.3"/><line x1="982.1" y1="0" x2="982.1" y2="640" stroke="#181818" stroke-width="1.6"/><line x1="1014.4" y1="0" x2="1014.4" y2="640" stroke="#1c1c1c" stroke-width="1.3"/><line x1="1046.7" y1="0" x2="1046.7" y2="640" stroke="#1c1c1c" stroke-width="1.3"/><line x1="1079.0" y1="0" x2="1079.0" y2="640" stroke="#1c1c1c" stroke-width="1.3"/><line x1="1111.3" y1="0" x2="1111.3" y2="640" stroke="#1c1c1c" stroke-width="1.3"/><line x1="1143.5" y1="0" x2="1143.5" y2="640" stroke="#181818" stroke-width="1.6"/><line x1="1175.8" y1="0" x2="1175.8" y2="640" stroke="#1c1c1c" stroke-width="1.3"/><line x1="1208.1" y1="0" x2="1208.1" y2="640" stroke="#1c1c1c" stroke-width="1.3"/><line x1="1240.4" y1="0" x2="1240.4" y2="640" stroke="#1c1c1c" stroke-width="1.3"/><line x1="1272.7" y1="0" x2="1272.7" y2="640" stroke="#1c1c1c" stroke-width="1.3"/><line x1="1305.0" y1="0" x2="1305.0" y2="640" stroke="#181818" stroke-width="1.6"/><line x1="1337.3" y1="0" x2="1337.3" y2="640" stroke="#1c1c1c" stroke-width="1.3"/><line x1="1369.6" y1="0" x2="1369.6" y2="640" stroke="#1c1c1c" stroke-width="1.3"/><line x1="1401.9" y1="0" x2="1401.9" y2="640" stroke="#1c1c1c" stroke-width="1.3"/><line x1="1434.2" y1="0" x2="1434.2" y2="640" stroke="#1c1c1c" stroke-width="1.3"/><line x1="1466.5" y1="0" x2="1466.5" y2="640" stroke="#181818" stroke-width="1.6"/><line x1="1498.7" y1="0" x2="1498.7" y2="640" stroke="#1c1c1c" stroke-width="1.3"/><line x1="1531.0" y1="0" x2="1531.0" y2="640" stroke="#1c1c1c" stroke-width="1.3"/><line x1="1563.3" y1="0" x2="1563.3" y2="640" stroke="#1c1c1c" stroke-width="1.3"/><line x1="1595.6" y1="0" x2="1595.6" y2="640" stroke="#1c1c1c" stroke-width="1.3"/><line x1="1627.9" y1="0" x2="1627.9" y2="640" stroke="#181818" stroke-width="1.6"/><line x1="1660.2" y1="0" x2="1660.2" y2="640" stroke="#1c1c1c" stroke-width="1.3"/><line x1="1692.5" y1="0" x2="1692.5" y2="640" stroke="#1c1c1c" stroke-width="1.3"/><line x1="1724.8" y1="0" x2="1724.8" y2="640" stroke="#1c1c1c" stroke-width="1.3"/><line x1="1757.1" y1="0" x2="1757.1" y2="640" stroke="#1c1c1c" stroke-width="1.3"/><line x1="1789.4" y1="0" x2="1789.4" y2="640" stroke="#181818" stroke-width="1.6"/><line x1="1821.6" y1="0" x2="1821.6" y2="640" stroke="#1c1c1c" stroke-width="1.3"/><line x1="1853.9" y1="0" x2="1853.9" y2="640" stroke="#1c1c1c" stroke-width="1.3"/><line x1="1886.2" y1="0" x2="1886.2" y2="640" stroke="#1c1c1c" stroke-width="1.3"/><line x1="1918.5" y1="0" x2="1918.5" y2="640" stroke="#1c1c1c" stroke-width="1.3"/><line x1="0" y1="22.6" x2="1938" y2="22.6" stroke="#1c1c1c" stroke-width="1.3"/><line x1="0" y1="54.9" x2="1938" y2="54.9" stroke="#1c1c1c" stroke-width="1.3"/><line x1="0" y1="87.2" x2="1938" y2="87.2" stroke="#181818" stroke-width="1.6"/><line x1="0" y1="119.5" x2="1938" y2="119.5" stroke="#1c1c1c" stroke-width="1.3"/><line x1="0" y1="151.8" x2="1938" y2="151.8" stroke="#1c1c1c" stroke-width="1.3"/><line x1="0" y1="184.1" x2="1938" y2="184.1" stroke="#1c1c1c" stroke-width="1.3"/><line x1="0" y1="216.4" x2="1938" y2="216.4" stroke="#1c1c1c" stroke-width="1.3"/><line x1="0" y1="248.7" x2="1938" y2="248.7" stroke="#181818" stroke-width="1.6"/><line x1="0" y1="281.0" x2="1938" y2="281.0" stroke="#1c1c1c" stroke-width="1.3"/><line x1="0" y1="313.3" x2="1938" y2="313.3" stroke="#1c1c1c" stroke-width="1.3"/><line x1="0" y1="345.5" x2="1938" y2="345.5" stroke="#1c1c1c" stroke-width="1.3"/><line x1="0" y1="377.8" x2="1938" y2="377.8" stroke="#1c1c1c" stroke-width="1.3"/><line x1="0" y1="410.1" x2="1938" y2="410.1" stroke="#181818" stroke-width="1.6"/><line x1="0" y1="442.4" x2="1938" y2="442.4" stroke="#1c1c1c" stroke-width="1.3"/><line x1="0" y1="474.7" x2="1938" y2="474.7" stroke="#1c1c1c" stroke-width="1.3"/><line x1="0" y1="507.0" x2="1938" y2="507.0" stroke="#1c1c1c" stroke-width="1.3"/><line x1="0" y1="539.3" x2="1938" y2="539.3" stroke="#1c1c1c" stroke-width="1.3"/><line x1="0" y1="571.6" x2="1938" y2="571.6" stroke="#181818" stroke-width="1.6"/><line x1="0" y1="603.9" x2="1938" y2="603.9" stroke="#1c1c1c" stroke-width="1.3"/><line x1="0" y1="636.2" x2="1938" y2="636.2" stroke="#1c1c1c" stroke-width="1.3"/></svg>
<div style="left:2px;top:1145px;width:12px;height:40px;background:#2a2a2a;border-radius:0 6px 6px 0;"></div>
<svg style="position:absolute;left:3px;top:1158px;" width="10" height="14" viewBox="0 0 10 14"><path d="M2 2l6 5-6 5" fill="none" stroke="#777" stroke-width="1.6"/></svg>
<div style="left:18px;top:1083px;width:59px;height:35px;background:#2b2b2b;border-radius:7px;border:1px solid #3c3c3c;"></div>
<svg style="position:absolute;left:22px;top:1085px;" width="50" height="30" viewBox="0 0 50 30"><circle cx="15" cy="15" r="11" fill="none" stroke="#d8d8d8" stroke-width="2.4"/><path d="M9 12a6 6 0 0 1 5-5" stroke="#d8d8d8" stroke-width="2.4" fill="none"/><path d="M32 12l5 5 5-5" fill="none" stroke="#d8d8d8" stroke-width="2.2"/></svg>
<div style="left:92px;top:1083px;width:180px;height:35px;background:#2b2b2b;border-radius:7px;border:1px solid #3c3c3c;"></div>
<svg style="position:absolute;left:99px;top:1086px;" width="30" height="30" viewBox="0 0 30 30"><path d="M3 8V3h5M22 3h5v5M27 22v5h-5M8 27H3v-5" fill="none" stroke="#a8a8a8" stroke-width="2"/><rect x="8" y="8" width="14" height="14" fill="#e0e0e0"/></svg>
<div class="tx" style="left:142px;top:1080.0px;height:40px;line-height:40px;font-size:22px;color:#dcdcdc;letter-spacing:0.7px;">Object</div>
<svg style="position:absolute;left:251px;top:1095.5px;" width="18" height="13.0" viewBox="0 0 18 13.0"><path d="M2 3l7.0 7.0l7.0 -7.0" fill="none" stroke="#d8d8d8" stroke-width="2.4"/></svg>
<div class="tx" style="left:298px;top:1080.0px;height:40px;line-height:40px;font-size:22px;color:#dcdcdc;letter-spacing:0.7px;">View</div>
<div class="tx" style="left:380px;top:1080.0px;height:40px;line-height:40px;font-size:22px;color:#dcdcdc;letter-spacing:0.7px;">Select</div>
<div class="tx" style="left:475px;top:1080.0px;height:40px;line-height:40px;font-size:22px;color:#dcdcdc;letter-spacing:0.7px;">Add</div>
<div class="tx" style="left:546px;top:1080.0px;height:40px;line-height:40px;font-size:22px;color:#dcdcdc;letter-spacing:0.7px;">Node</div>
<div style="left:629px;top:1088px;width:24px;height:24px;background:#4772b3;border-radius:4px;"></div>
<svg style="position:absolute;left:630px;top:1089px;" width="22" height="22" viewBox="0 0 22 22"><path d="M4 11l5 5 9-10" fill="none" stroke="#fff" stroke-width="3"/></svg>
<div class="tx" style="left:660px;top:1080.0px;height:40px;line-height:40px;font-size:22px;color:#e6e6e6;letter-spacing:0.7px;">Use Nodes</div>
<div style="left:847px;top:1082px;width:156px;height:36px;background:#2b2b2b;border-radius:7px;border:1px solid #3c3c3c;"></div>
<div class="tx" style="left:861px;top:1080.0px;height:40px;line-height:40px;font-size:22px;color:#dcdcdc;letter-spacing:0.7px;">Slot 1</div>
<svg style="position:absolute;left:982px;top:1095.5px;" width="18" height="13.0" viewBox="0 0 18 13.0"><path d="M2 3l7.0 7.0l7.0 -7.0" fill="none" stroke="#d8d8d8" stroke-width="2.4"/></svg>
<div style="left:1017px;top:1081px;width:420px;height:37px;background:#2b2b2b;border-radius:7px;border:1px solid #383838;"></div>
<div style="left:1077px;top:1082px;width:240px;height:35px;background:#1d1d1d;"></div>
<div style="left:1317px;top:1082px;width:40px;height:35px;background:#545454;"></div>
<div style="left:1357px;top:1082px;width:40px;height:35px;background:#545454;border-left:1px solid #3a3a3a;"></div>
<div style="left:1397px;top:1082px;width:39px;height:35px;background:#545454;border-radius:0 6px 6px 0;border-left:1px solid #3a3a3a;"></div>
<svg style="position:absolute;left:1022px;top:1085px;" width="54" height="30" viewBox="0 0 54 30"><circle cx="14" cy="15" r="11" fill="#e8e8e8"/><path d="M14 4a11 11 0 0 0-11 11h11zM14 15h11a11 11 0 0 1-11 11z" fill="#2b2b2b"/><circle cx="14" cy="15" r="11" fill="none" stroke="#e8e8e8" stroke-width="2.4"/><path d="M34 13l5 5 5-5" fill="none" stroke="#d8d8d8" stroke-width="2.2"/></svg>
<div class="tx" style="left:1094px;top:1080.0px;height:40px;line-height:40px;font-size:22px;color:#e0e0e0;letter-spacing:0.7px;">Material.001</div>
<svg style="position:absolute;left:1323px;top:1085px;" width="28" height="30" viewBox="0 0 28 30"><path d="M14 3l10 4v8c0 6-5 10-10 12C9 25 4 21 4 15V7z" fill="none" stroke="#8a8a8a" stroke-width="2"/></svg>
<svg style="position:absolute;left:1363px;top:1085px;" width="28" height="30" viewBox="0 0 28 30"><path d="M9 6h10l6 6v13H9z" fill="none" stroke="#c8c8c8" stroke-width="2"/><path d="M5 10v15" stroke="#c8c8c8" stroke-width="2"/><path d="M19 6v6h6" fill="none" stroke="#c8c8c8" stroke-width="2"/></svg>
<svg style="position:absolute;left:1405px;top:1088px;" width="24" height="24" viewBox="0 0 24 24"><path d="M5 5l14 14M19 5L5 19" stroke="#d0d0d0" stroke-width="2.2"/></svg>
<svg style="position:absolute;left:1452px;top:1083px;" width="34" height="34" viewBox="0 0 34 34"><path d="M18 4l12 12-4 1-6 6 1 5-3 1-12-12 1-3 5 1 6-6z" fill="none" stroke="#a8a8a8" stroke-width="2"/><path d="M11 23L3 31" stroke="#a8a8a8" stroke-width="2.2"/></svg>
<div style="left:2210px;top:1082px;width:36px;height:36px;background:#3f3f3f;border-radius:7px;"></div>
<svg style="position:absolute;left:2212px;top:1084px;" width="32" height="32" viewBox="0 0 32 32"><path d="M12 28V6M6 12l6-6 6 6M12 28h14" fill="none" stroke="#8a8a8a" stroke-width="2"/></svg>
<div style="left:2259px;top:1082px;width:101px;height:36px;background:#2b2b2b;border-radius:7px;border:1px solid #3c3c3c;"></div>
<div style="left:2260px;top:1083px;width:37px;height:34px;background:#545454;border-radius:6px 0 0 6px;"></div>
<svg style="position:absolute;left:2262px;top:1084px;" width="32" height="32" viewBox="0 0 32 32"><path d="M7 14a9 9 0 0 1 18 0c0 5-3 8-6 11l-3-3c2-2 5-4 5-8a6 6 0 0 0-12 0" fill="none" stroke="#a8a8a8" stroke-width="2"/></svg>
<svg style="position:absolute;left:2300px;top:1084px;" width="36" height="32" viewBox="0 0 36 32"><rect x="3" y="3" width="9" height="9" fill="#d8d8d8"/><path d="M3 17h26M3 25h26M11 15v14M20 4v25" stroke="#c8c8c8" stroke-width="2"/></svg>
<svg style="position:absolute;left:2339px;top:1094.5px;" width="18" height="13.0" viewBox="0 0 18 13.0"><path d="M2 3l7.0 7.0l7.0 -7.0" fill="none" stroke="#d8d8d8" stroke-width="2.4"/></svg>
<svg style="position:absolute;left:0px;top:1125px;" width="1938" height="632" viewBox="0 1125 1938 632"><path d="M280 1305.4C286.0 1305.4 324.0 1420.7 330 1420.7" fill="none" stroke="#101010" stroke-width="5.6" stroke-opacity="0.7"/><path d="M280 1305.4C286.0 1305.4 324.0 1420.7 330 1420.7" fill="none" stroke="#9a9a9a" stroke-width="3.2"/><path d="M555.7 1380.4C560.056 1380.4 587.644 1409.2 592 1409.2" fill="none" stroke="#101010" stroke-width="5.6" stroke-opacity="0.7"/><path d="M555.7 1380.4C560.056 1380.4 587.644 1409.2 592 1409.2" fill="none" stroke="#9a9a9a" stroke-width="3.2"/><path d="M817.5 1285.5C826.44 1285.5 883.06 1516.8 892 1516.8" fill="none" stroke="#101010" stroke-width="5.6" stroke-opacity="0.7"/><path d="M817.5 1285.5C826.44 1285.5 883.06 1516.8 892 1516.8" fill="none" stroke="#9a9a9a" stroke-width="3.2"/><path d="M1279.6 1254.9C1290.088 1254.9 1356.512 1313 1367 1313" fill="none" stroke="#101010" stroke-width="5.8" stroke-opacity="0.7"/><path d="M1279.6 1254.9C1290.088 1254.9 1356.512 1313 1367 1313" fill="none" stroke="#e8e8e8" stroke-width="3.4"/><path d="M1609 1272.8C1617.76 1272.8 1673.24 1357 1682 1357" fill="none" stroke="#101010" stroke-width="5.6" stroke-opacity="0.7"/><path d="M1609 1272.8C1617.76 1272.8 1673.24 1357 1682 1357" fill="none" stroke="#9a9a9a" stroke-width="3.2"/></svg>
<div style="left:54px;top:1249px;width:226px;height:382px;background:#3d3d3d;border-radius:8px;box-shadow:0 3px 8px rgba(0,0,0,0.45);"></div>
<div style="left:54px;top:1249px;width:226px;height:32px;background:#b32a40;border-radius:8px 8px 0 0;"></div>
<svg style="position:absolute;left:68px;top:1259px;" width="16" height="13" viewBox="0 0 16 13"><path d="M1 1h13L7.5 12z" fill="rgba(255,255,255,0.55)"/></svg>
<div class="tx" style="left:91px;top:1245.0px;height:40px;line-height:40px;font-size:19px;color:#ececec;letter-spacing:0.4px;text-shadow:0 1px 2px rgba(0,0,0,0.6);">Texture Coordinate</div>
<div class="tx" style="left:-1749px;top:1285.4px;height:40px;line-height:40px;font-size:19px;color:#e6e6e6;letter-spacing:0.4px;width:2000px;text-align:right;">Generated</div>
<div style="left:272.5px;top:1297.9px;width:15px;height:15px;border-radius:8px;background:#6363c7;border:1.5px solid #151515;"></div>
<div class="tx" style="left:-1749px;top:1320.9px;height:40px;line-height:40px;font-size:19px;color:#e6e6e6;letter-spacing:0.4px;width:2000px;text-align:right;">Normal</div>
<div style="left:272.5px;top:1333.4px;width:15px;height:15px;border-radius:8px;background:#6363c7;border:1.5px solid #151515;"></div>
<div class="tx" style="left:-1749px;top:1356.4px;height:40px;line-height:40px;font-size:19px;color:#e6e6e6;letter-spacing:0.4px;width:2000px;text-align:right;">UV</div>
<div style="left:272.5px;top:1368.9px;width:15px;height:15px;border-radius:8px;background:#6363c7;border:1.5px solid #151515;"></div>
<div class="tx" style="left:-1749px;top:1391.9px;height:40px;line-height:40px;font-size:19px;color:#e6e6e6;letter-spacing:0.4px;width:2000px;text-align:right;">Object</div>
<div style="left:272.5px;top:1404.4px;width:15px;height:15px;border-radius:8px;background:#6363c7;border:1.5px solid #151515;"></div>
<div class="tx" style="left:-1749px;top:1427.4px;height:40px;line-height:40px;font-size:19px;color:#e6e6e6;letter-spacing:0.4px;width:2000px;text-align:right;">Camera</div>
<div style="left:272.5px;top:1439.9px;width:15px;height:15px;border-radius:8px;background:#6363c7;border:1.5px solid #151515;"></div>
<div class="tx" style="left:-1749px;top:1462.9px;height:40px;line-height:40px;font-size:19px;color:#e6e6e6;letter-spacing:0.4px;width:2000px;text-align:right;">Window</div>
<div style="left:272.5px;top:1475.4px;width:15px;height:15px;border-radius:8px;background:#6363c7;border:1.5px solid #151515;"></div>
<div class="tx" style="left:-1749px;top:1498.4px;height:40px;line-height:40px;font-size:19px;color:#e6e6e6;letter-spacing:0.4px;width:2000px;text-align:right;">Reflection</div>
<div style="left:272.5px;top:1510.9px;width:15px;height:15px;border-radius:8px;background:#6363c7;border:1.5px solid #151515;"></div>
<div class="tx" style="left:76px;top:1547.0px;height:40px;line-height:40px;font-size:19px;color:#e6e6e6;letter-spacing:0.4px;">Obje...</div>
<div style="left:137px;top:1553px;width:125px;height:28px;background:#1d1d1d;border-radius:6px;"></div>
<svg style="position:absolute;left:142px;top:1555px;" width="24" height="24" viewBox="0 0 24 24"><path d="M2 7V2h5M17 2h5v5M22 17v5h-5M7 22H2v-5" fill="none" stroke="#a8a8a8" stroke-width="1.8"/><rect x="7" y="7" width="10" height="10" fill="#e0e0e0"/></svg>
<svg style="position:absolute;left:236px;top:1554px;" width="26" height="26" viewBox="0 0 26 26"><path d="M3 23l13-13M14 6l6 6 4-4a4 4 0 0 0-6-6z" fill="none" stroke="#d0d0d0" stroke-width="2"/><path d="M16 4l6 6" stroke="#d0d0d0" stroke-width="3"/></svg>
<div style="left:71px;top:1598px;width:19px;height:19px;background:#666;border-radius:3px;"></div>
<div class="tx" style="left:97px;top:1587.0px;height:40px;line-height:40px;font-size:19px;color:#e6e6e6;letter-spacing:0.4px;">From Instancer</div>
<div style="left:330px;top:1252px;width:226px;height:193px;background:#3d3d3d;border-radius:8px;box-shadow:0 3px 8px rgba(0,0,0,0.45);"></div>
<div style="left:330px;top:1252px;width:226px;height:32px;background:#2e88b5;border-radius:8px 8px 0 0;"></div>
<svg style="position:absolute;left:344px;top:1262px;" width="16" height="13" viewBox="0 0 16 13"><path d="M1 1h13L7.5 12z" fill="rgba(255,255,255,0.55)"/></svg>
<div class="tx" style="left:367px;top:1248.0px;height:40px;line-height:40px;font-size:19px;color:#ececec;letter-spacing:0.4px;text-shadow:0 1px 2px rgba(0,0,0,0.6);">Separate XYZ</div>
<div class="tx" style="left:-1474px;top:1289.3px;height:40px;line-height:40px;font-size:19px;color:#e6e6e6;letter-spacing:0.4px;width:2000px;text-align:right;">X</div>
<div style="left:548.5px;top:1301.8px;width:15px;height:15px;border-radius:8px;background:#a1a1a1;border:1.5px solid #151515;"></div>
<div class="tx" style="left:-1474px;top:1324.8px;height:40px;line-height:40px;font-size:19px;color:#e6e6e6;letter-spacing:0.4px;width:2000px;text-align:right;">Y</div>
<div style="left:548.5px;top:1337.3px;width:15px;height:15px;border-radius:8px;background:#a1a1a1;border:1.5px solid #151515;"></div>
<div class="tx" style="left:-1474px;top:1360.3px;height:40px;line-height:40px;font-size:19px;color:#e6e6e6;letter-spacing:0.4px;width:2000px;text-align:right;">Z</div>
<div style="left:548.5px;top:1372.8px;width:15px;height:15px;border-radius:8px;background:#a1a1a1;border:1.5px solid #151515;"></div>
<div class="tx" style="left:352px;top:1401.0px;height:40px;line-height:40px;font-size:19px;color:#e6e6e6;letter-spacing:0.4px;">Vector</div>
<div style="left:322.5px;top:1413.2px;width:15px;height:15px;border-radius:8px;background:#6363c7;border:1.5px solid #151515;"></div>
<div style="left:592px;top:1228px;width:226px;height:205px;background:#3d3d3d;border-radius:8px;box-shadow:0 3px 8px rgba(0,0,0,0.45);"></div>
<div style="left:592px;top:1228px;width:226px;height:32px;background:#b5622a;border-radius:8px 8px 0 0;"></div>
<svg style="position:absolute;left:606px;top:1238px;" width="16" height="13" viewBox="0 0 16 13"><path d="M1 1h13L7.5 12z" fill="rgba(255,255,255,0.55)"/></svg>
<div class="tx" style="left:629px;top:1224.0px;height:40px;line-height:40px;font-size:19px;color:#ececec;letter-spacing:0.4px;text-shadow:0 1px 2px rgba(0,0,0,0.6);">Gradient Texture</div>
<div class="tx" style="left:-1212px;top:1265.5px;height:40px;line-height:40px;font-size:19px;color:#e6e6e6;letter-spacing:0.4px;width:2000px;text-align:right;">Color</div>
<div style="left:810.5px;top:1278.0px;width:15px;height:15px;border-radius:8px;background:#c7c729;border:1.5px solid #151515;"></div>
<div class="tx" style="left:-1212px;top:1301.0px;height:40px;line-height:40px;font-size:19px;color:#e6e6e6;letter-spacing:0.4px;width:2000px;text-align:right;">Fac</div>
<div style="left:810.5px;top:1313.5px;width:15px;height:15px;border-radius:8px;background:#a1a1a1;border:1.5px solid #151515;"></div>
<div style="left:609px;top:1355px;width:190px;height:28px;background:#282828;border-radius:6px;border:1px solid #333;"></div>
<div class="tx" style="left:619px;top:1349.0px;height:40px;line-height:40px;font-size:19px;color:#e6e6e6;letter-spacing:0.4px;">Easing</div>
<svg style="position:absolute;left:780px;top:1364.25px;" width="15" height="11.5" viewBox="0 0 15 11.5"><path d="M2 3l5.5 5.5l5.5 -5.5" fill="none" stroke="#d8d8d8" stroke-width="2"/></svg>
<div class="tx" style="left:614px;top:1389.0px;height:40px;line-height:40px;font-size:19px;color:#e6e6e6;letter-spacing:0.4px;">Vector</div>
<div style="left:584.5px;top:1401.7px;width:15px;height:15px;border-radius:8px;background:#6363c7;border:1.5px solid #151515;"></div>
<div style="left:892px;top:1198px;width:388px;height:343px;background:#3d3d3d;border-radius:8px;border:2px solid #f0f0f0;"></div>
<div style="left:894px;top:1200px;width:384px;height:30px;background:#3585b3;border-radius:6px 6px 0 0;"></div>
<svg style="position:absolute;left:906px;top:1208px;" width="16" height="13" viewBox="0 0 16 13"><path d="M1 1h13L7.5 12z" fill="rgba(255,255,255,0.55)"/></svg>
<div class="tx" style="left:929px;top:1194.0px;height:40px;line-height:40px;font-size:19px;color:#ececec;letter-spacing:0.4px;text-shadow:0 1px 2px rgba(0,0,0,0.6);">ColorRamp</div>
<div class="tx" style="left:-751px;top:1235.0px;height:40px;line-height:40px;font-size:19px;color:#e6e6e6;letter-spacing:0.4px;width:2000px;text-align:right;">Color</div>
<div style="left:1272.5px;top:1247.5px;width:15px;height:15px;border-radius:8px;background:#c7c729;border:1.5px solid #151515;"></div>
<div class="tx" style="left:-751px;top:1271.0px;height:40px;line-height:40px;font-size:19px;color:#e6e6e6;letter-spacing:0.4px;width:2000px;text-align:right;">Alpha</div>
<div style="left:1272.5px;top:1283.1px;width:15px;height:15px;border-radius:8px;background:#a1a1a1;border:1.5px solid #151515;"></div>
<svg style="position:absolute;left:914px;top:1335px;" width="24" height="22" viewBox="0 0 24 22"><path d="M11 2v18M2 11h18" stroke="#d8d8d8" stroke-width="2"/></svg>
<svg style="position:absolute;left:956px;top:1335px;" width="24" height="22" viewBox="0 0 24 22"><path d="M2 11h18" stroke="#d8d8d8" stroke-width="2"/></svg>
<svg style="position:absolute;left:1005px;top:1340.75px;" width="17" height="12.5" viewBox="0 0 17 12.5"><path d="M2 3l6.5 6.5l6.5 -6.5" fill="none" stroke="#d8d8d8" stroke-width="2"/></svg>
<div style="left:1060px;top:1333px;width:201px;height:28px;background:#282828;border-radius:6px;"></div>
<div style="left:1157px;top:1333px;width:2px;height:28px;background:#3d3d3d;"></div>
<div class="tx" style="left:1070px;top:1327.0px;height:40px;line-height:40px;font-size:19px;color:#e6e6e6;letter-spacing:0.4px;">HSV</div>
<svg style="position:absolute;left:1142px;top:1343.5px;" width="14" height="11.0" viewBox="0 0 14 11.0"><path d="M2 3l5.0 5.0l5.0 -5.0" fill="none" stroke="#d8d8d8" stroke-width="2"/></svg>
<div class="tx" style="left:1168px;top:1327.0px;height:40px;line-height:40px;font-size:19px;color:#e6e6e6;letter-spacing:0px;">Counte...</div>
<svg style="position:absolute;left:1246px;top:1343.5px;" width="14" height="11.0" viewBox="0 0 14 11.0"><path d="M2 3l5.0 5.0l5.0 -5.0" fill="none" stroke="#d8d8d8" stroke-width="2"/></svg>
<div style="left:917px;top:1370px;width:336px;height:34px;background:#000;border:1px solid #111;"></div>
<div style="left:918px;top:1371px;width:334px;height:32px;background:linear-gradient(90deg,#1800d8 0%,#0060e0 12%,#00b0e0 20%,#00e0e0 27%,#00e8a0 40%,#00e000 53%,#a0f000 65%,#f0f000 73%,#ffb000 85%,#ff4000 94%,#ff4000 100%);"></div>
<svg style="position:absolute;left:909px;top:1370px;" width="22" height="40" viewBox="0 0 22 40"><path d="M2 16L11 4l9 12v22H2z" fill="#777" stroke="#222" stroke-width="1.5"/><rect x="4" y="18" width="14" height="18" fill="#2200d8"/></svg>
<svg style="position:absolute;left:1220px;top:1364px;" width="22" height="46" viewBox="0 0 22 46"><path d="M11 1v9" stroke="#fff" stroke-width="1.5" stroke-dasharray="3 2"/><path d="M2 22l9-12 9 12v22H2z" fill="#ddd" stroke="#222" stroke-width="1.5"/><rect x="4" y="24" width="14" height="18" fill="#ff4000"/></svg>
<div style="left:910px;top:1422px;width:99px;height:28px;background:#595959;border-radius:6px;"></div>
<div class="tx" style="left:-41.0px;top:1416.0px;height:40px;line-height:40px;font-size:19px;color:#e6e6e6;letter-spacing:0.4px;width:2000px;text-align:center;">1</div>
<div style="left:1026px;top:1422px;width:235px;height:28px;background:#318019;border-radius:6px;"></div>
<div class="tx" style="left:1050px;top:1416.0px;height:40px;line-height:40px;font-size:19px;color:#e6e6e6;letter-spacing:0.4px;">Pos</div>
<div class="tx" style="left:-762px;top:1416.0px;height:40px;line-height:40px;font-size:19px;color:#e6e6e6;letter-spacing:0.4px;width:2000px;text-align:right;">0.940</div>
<div style="left:910px;top:1462px;width:351px;height:29px;background:#ff4000;border-radius:7px;"></div>
<div class="tx" style="left:915px;top:1497.0px;height:40px;line-height:40px;font-size:19px;color:#e6e6e6;letter-spacing:0.4px;">Fac</div>
<div style="left:884.5px;top:1509.3px;width:15px;height:15px;border-radius:8px;background:#a1a1a1;border:1.5px solid #151515;"></div>
<div style="left:1367px;top:1216px;width:242px;height:192px;background:#3d3d3d;border-radius:8px;box-shadow:0 3px 8px rgba(0,0,0,0.45);"></div>
<div style="left:1367px;top:1216px;width:242px;height:32px;background:#0a8f5c;border-radius:8px 8px 0 0;"></div>
<svg style="position:absolute;left:1381px;top:1226px;" width="16" height="13" viewBox="0 0 16 13"><path d="M1 1h13L7.5 12z" fill="rgba(255,255,255,0.55)"/></svg>
<div class="tx" style="left:1404px;top:1212.0px;height:40px;line-height:40px;font-size:19px;color:#ececec;letter-spacing:0.4px;text-shadow:0 1px 2px rgba(0,0,0,0.6);">Diffuse BSDF</div>
<div class="tx" style="left:-421px;top:1253.0px;height:40px;line-height:40px;font-size:19px;color:#e6e6e6;letter-spacing:0.4px;width:2000px;text-align:right;">BSDF</div>
<div style="left:1601.5px;top:1265.3px;width:15px;height:15px;border-radius:8px;background:#2ec454;border:1.5px solid #151515;"></div>
<div class="tx" style="left:1390px;top:1293.0px;height:40px;line-height:40px;font-size:19px;color:#e6e6e6;letter-spacing:0.4px;">Color</div>
<div style="left:1359.5px;top:1305.5px;width:15px;height:15px;border-radius:8px;background:#c7c729;border:1.5px solid #151515;"></div>
<div style="left:1385px;top:1335px;width:206px;height:28px;background:#545454;border-radius:6px;"></div>
<div class="tx" style="left:1400px;top:1329.0px;height:40px;line-height:40px;font-size:19px;color:#e6e6e6;letter-spacing:0.4px;">Roughness</div>
<div class="tx" style="left:-423px;top:1329.0px;height:40px;line-height:40px;font-size:19px;color:#e6e6e6;letter-spacing:0.4px;width:2000px;text-align:right;">0.000</div>
<div style="left:1359.5px;top:1341.5px;width:15px;height:15px;border-radius:8px;background:#a1a1a1;border:1.5px solid #151515;"></div>
<div class="tx" style="left:1390px;top:1364.0px;height:40px;line-height:40px;font-size:19px;color:#e6e6e6;letter-spacing:0.4px;">Normal</div>
<div style="left:1359.5px;top:1376.5px;width:15px;height:15px;border-radius:8px;background:#6363c7;border:1.5px solid #151515;"></div>
<div style="left:1682px;top:1260px;width:226px;height:191px;background:#3d3d3d;border-radius:8px;box-shadow:0 3px 8px rgba(0,0,0,0.45);"></div>
<div style="left:1682px;top:1260px;width:226px;height:32px;background:#882234;border-radius:8px 8px 0 0;"></div>
<svg style="position:absolute;left:1696px;top:1270px;" width="16" height="13" viewBox="0 0 16 13"><path d="M1 1h13L7.5 12z" fill="rgba(255,255,255,0.55)"/></svg>
<div class="tx" style="left:1719px;top:1256.0px;height:40px;line-height:40px;font-size:19px;color:#ececec;letter-spacing:0.4px;text-shadow:0 1px 2px rgba(0,0,0,0.6);">Material Output</div>
<div style="left:1700px;top:1303px;width:190px;height:28px;background:#282828;border-radius:6px;border:1px solid #333;"></div>
<div class="tx" style="left:1710px;top:1297.0px;height:40px;line-height:40px;font-size:19px;color:#e6e6e6;letter-spacing:0.4px;">All</div>
<svg style="position:absolute;left:1871px;top:1312.25px;" width="15" height="11.5" viewBox="0 0 15 11.5"><path d="M2 3l5.5 5.5l5.5 -5.5" fill="none" stroke="#d8d8d8" stroke-width="2"/></svg>
<div class="tx" style="left:1705px;top:1337.0px;height:40px;line-height:40px;font-size:19px;color:#e6e6e6;letter-spacing:0.4px;">Surface</div>
<div style="left:1674.5px;top:1349.5px;width:15px;height:15px;border-radius:8px;background:#2ec454;border:1.5px solid #151515;"></div>
<div class="tx" style="left:1705px;top:1371.6px;height:40px;line-height:40px;font-size:19px;color:#e6e6e6;letter-spacing:0.4px;">Volume</div>
<div style="left:1674.5px;top:1384.1px;width:15px;height:15px;border-radius:8px;background:#2ec454;border:1.5px solid #151515;"></div>
<div class="tx" style="left:1705px;top:1407.6px;height:40px;line-height:40px;font-size:19px;color:#e6e6e6;letter-spacing:0.4px;">Displacement</div>
<div style="left:1674.5px;top:1420.1px;width:15px;height:15px;border-radius:8px;background:#6363c7;border:1.5px solid #151515;"></div>
<div class="tx" style="left:61px;top:1671.0px;height:40px;line-height:40px;font-size:23px;color:#f0f0f0;letter-spacing:0.5px;">Material.001</div>
<div style="left:16px;top:1741px;width:1904px;height:14px;background:#303030;border-radius:7px;"></div>
<svg style="position:absolute;left:1452px;top:1580px;" width="32" height="42" viewBox="0 0 32 42"><path d="M4.5 3.5v28l6.5-6.5 5 11 5-2-5-10.5h9z" fill="#000" stroke="#fff" stroke-width="2.4" stroke-linejoin="miter"/></svg>
<div style="left:1938px;top:1126px;width:400px;height:631px;background:#3a3a3a;"></div>
<div style="left:1938px;top:1126px;width:400px;height:47px;background:#434343;"></div>
<svg style="position:absolute;left:1952px;top:1140px;" width="20" height="20" viewBox="0 0 20 20"><path d="M2 4h16L10 17z" fill="#b8b8b8"/></svg>
<div class="tx" style="left:1983px;top:1130.0px;height:40px;line-height:40px;font-size:22px;color:#e6e6e6;letter-spacing:0.7px;">Node</div>
<svg style="position:absolute;left:2300px;top:1143px;" width="28" height="14" viewBox="0 0 28 14"><rect x="2" y="2" width="2.4" height="2.4" fill="#202020"/><rect x="2" y="9" width="2.4" height="2.4" fill="#202020"/><rect x="8" y="2" width="2.4" height="2.4" fill="#202020"/><rect x="8" y="9" width="2.4" height="2.4" fill="#202020"/><rect x="14" y="2" width="2.4" height="2.4" fill="#202020"/><rect x="14" y="9" width="2.4" height="2.4" fill="#202020"/><rect x="20" y="2" width="2.4" height="2.4" fill="#202020"/><rect x="20" y="9" width="2.4" height="2.4" fill="#202020"/></svg>
<div class="tx" style="left:1962px;top:1188.0px;height:40px;line-height:40px;font-size:22px;color:#dcdcdc;letter-spacing:0.7px;">Name:</div>
<div style="left:2047px;top:1190px;width:275px;height:37px;background:#1d1d1d;border-radius:7px;border:1px solid #3f3f3f;"></div>
<svg style="position:absolute;left:2054px;top:1194px;" width="34" height="30" viewBox="0 0 34 30"><rect x="3" y="3" width="20" height="24" rx="4" fill="none" stroke="#e0e0e0" stroke-width="2.2"/><rect x="3" y="3" width="20" height="8" rx="3" fill="#e0e0e0"/><circle cx="24" cy="16" r="4.5" fill="#9a9a9a"/></svg>
<div class="tx" style="left:2096px;top:1188.0px;height:40px;line-height:40px;font-size:22px;color:#e6e6e6;letter-spacing:0.7px;">ColorRamp</div>
<div class="tx" style="left:1962px;top:1239.0px;height:40px;line-height:40px;font-size:22px;color:#dcdcdc;letter-spacing:0.7px;">Label:</div>
<div style="left:2047px;top:1241px;width:275px;height:37px;background:#1d1d1d;border-radius:7px;border:1px solid #3f3f3f;"></div>
<svg style="position:absolute;left:2054px;top:1245px;" width="34" height="30" viewBox="0 0 34 30"><rect x="3" y="3" width="20" height="24" rx="4" fill="none" stroke="#e0e0e0" stroke-width="2.2"/><rect x="3" y="3" width="20" height="8" rx="3" fill="#e0e0e0"/><circle cx="24" cy="16" r="4.5" fill="#9a9a9a"/></svg>
<div style="left:1938px;top:1296px;width:400px;height:46px;background:#363636;"></div>
<svg style="position:absolute;left:1981px;top:1310px;" width="18" height="18" viewBox="0 0 18 18"><path d="M3 2l13 7-13 7z" fill="#b8b8b8"/></svg>
<div style="left:2008px;top:1307px;width:24px;height:24px;background:#666;border-radius:4px;"></div>
<div class="tx" style="left:2041px;top:1299.0px;height:40px;line-height:40px;font-size:22px;color:#e0e0e0;letter-spacing:0.7px;">Color</div>
<svg style="position:absolute;left:2252px;top:1306px;" width="32" height="28" viewBox="0 0 32 28"><circle cx="4" cy="4" r="3" fill="#d0d0d0"/><circle cx="4" cy="14" r="3" fill="#d0d0d0"/><circle cx="4" cy="24" r="3" fill="#d0d0d0"/><path d="M12 4h17M12 14h17M12 24h17" stroke="#d0d0d0" stroke-width="2"/></svg>
<div style="left:1938px;top:1342px;width:400px;height:97px;background:#424242;"></div>
<svg style="position:absolute;left:1955px;top:1358px;" width="18" height="18" viewBox="0 0 18 18"><path d="M3 2l13 7-13 7z" fill="#b8b8b8"/></svg>
<div class="tx" style="left:1983px;top:1348.0px;height:40px;line-height:40px;font-size:22px;color:#e6e6e6;letter-spacing:0.7px;">Properties</div>
<svg style="position:absolute;left:2300px;top:1361px;" width="28" height="14" viewBox="0 0 28 14"><rect x="2" y="2" width="2.4" height="2.4" fill="#202020"/><rect x="2" y="9" width="2.4" height="2.4" fill="#202020"/><rect x="8" y="2" width="2.4" height="2.4" fill="#202020"/><rect x="8" y="9" width="2.4" height="2.4" fill="#202020"/><rect x="14" y="2" width="2.4" height="2.4" fill="#202020"/><rect x="14" y="9" width="2.4" height="2.4" fill="#202020"/><rect x="20" y="2" width="2.4" height="2.4" fill="#202020"/><rect x="20" y="9" width="2.4" height="2.4" fill="#202020"/></svg>
<svg style="position:absolute;left:1952px;top:1406px;" width="20" height="20" viewBox="0 0 20 20"><path d="M2 4h16L10 17z" fill="#b8b8b8"/></svg>
<div class="tx" style="left:1983px;top:1395.0px;height:40px;line-height:40px;font-size:22px;color:#e6e6e6;letter-spacing:0.7px;">Reclassify</div>
<svg style="position:absolute;left:2300px;top:1408px;" width="28" height="14" viewBox="0 0 28 14"><rect x="2" y="2" width="2.4" height="2.4" fill="#202020"/><rect x="2" y="9" width="2.4" height="2.4" fill="#202020"/><rect x="8" y="2" width="2.4" height="2.4" fill="#202020"/><rect x="8" y="9" width="2.4" height="2.4" fill="#202020"/><rect x="14" y="2" width="2.4" height="2.4" fill="#202020"/><rect x="14" y="9" width="2.4" height="2.4" fill="#202020"/><rect x="20" y="2" width="2.4" height="2.4" fill="#202020"/><rect x="20" y="9" width="2.4" height="2.4" fill="#202020"/></svg>
<div class="tx" style="left:1961px;top:1454.0px;height:40px;line-height:40px;font-size:22px;color:#dcdcdc;letter-spacing:0.7px;">Mode:</div>
<div style="left:2047px;top:1456px;width:275px;height:38px;background:#282828;border-radius:7px;border:1px solid #3f3f3f;"></div>
<div class="tx" style="left:2062px;top:1455.0px;height:40px;line-height:40px;font-size:22px;color:#e0e0e0;letter-spacing:0.7px;">Height</div>
<svg style="position:absolute;left:2301px;top:1470.5px;" width="18" height="13.0" viewBox="0 0 18 13.0"><path d="M2 3l7.0 7.0l7.0 -7.0" fill="none" stroke="#d8d8d8" stroke-width="2.4"/></svg>
<div style="left:1955px;top:1505px;width:311px;height:252px;background:#282828;border-radius:8px 8px 0 0;border:1px solid #3a3a3a;border-bottom:none;"></div>
<div style="left:1966px;top:1517px;width:169px;height:36px;background:#5f6672;border-radius:6px;"></div>
<div class="tx" style="left:1971px;top:1514.0px;height:40px;line-height:40px;font-size:22px;color:#e8e8e8;letter-spacing:0.7px;">1</div>
<div style="left:2037px;top:1517px;width:79px;height:36px;background:#2d00d8;border-radius:7px;border:1px solid #222;"></div>
<div style="left:2134px;top:1517px;width:123px;height:36px;background:#595959;border-radius:7px;"></div>
<div class="tx" style="left:1195.0px;top:1515.0px;height:40px;line-height:40px;font-size:22px;color:#e0e0e0;letter-spacing:0.7px;width:2000px;text-align:center;">-0.07</div>
<div class="tx" style="left:1971px;top:1555.0px;height:40px;line-height:40px;font-size:22px;color:#e0e0e0;letter-spacing:0.7px;">2</div>
<div style="left:2037px;top:1557px;width:79px;height:36px;background:#ff4000;border-radius:7px;border:1px solid #222;"></div>
<div style="left:2134px;top:1557px;width:123px;height:36px;background:#595959;border-radius:7px;"></div>
<div class="tx" style="left:1195.0px;top:1555.0px;height:40px;line-height:40px;font-size:22px;color:#e0e0e0;letter-spacing:0.7px;width:2000px;text-align:center;">-0.07</div>
<div style="left:2285px;top:1507px;width:36px;height:115px;background:#545454;border-radius:7px;"></div>
<div style="left:2285px;top:1544px;width:36px;height:1px;background:#3a3a3a;"></div>
<div style="left:2285px;top:1584px;width:36px;height:1px;background:#3a3a3a;"></div>
<svg style="position:absolute;left:2291px;top:1513px;" width="24" height="24" viewBox="0 0 24 24"><path d="M12 3v18M3 12h18" stroke="#e0e0e0" stroke-width="2.2"/></svg>
<svg style="position:absolute;left:2291px;top:1552px;" width="24" height="24" viewBox="0 0 24 24"><path d="M3 12h18" stroke="#e0e0e0" stroke-width="2.2"/></svg>
<svg style="position:absolute;left:2289px;top:1589px;" width="28" height="30" viewBox="0 0 28 30"><path d="M11 28V4M4 11l7-7 7 7M11 28h14" fill="none" stroke="#e0e0e0" stroke-width="2"/></svg>
<div style="left:2285px;top:1639px;width:36px;height:36px;background:#545454;border-radius:7px;"></div>
<svg style="position:absolute;left:2288px;top:1642px;" width="30" height="30" viewBox="0 0 30 30"><path d="M4 13a11 11 0 0 1 21-4M26 17a11 11 0 0 1-21 4" fill="none" stroke="#e0e0e0" stroke-width="2"/><path d="M18 8h7V1M12 22H5v7" fill="none" stroke="#e0e0e0" stroke-width="2"/></svg>
<div style="left:2285px;top:1692px;width:36px;height:35px;background:#545454;border-radius:7px 7px 0 0;"></div>
<svg style="position:absolute;left:2288px;top:1695px;" width="30" height="30" viewBox="0 0 30 30"><path d="M3 27c6 0 6-24 12-24s6 24 12 24" fill="none" stroke="#e0e0e0" stroke-width="2"/></svg>
<div style="left:2285px;top:1730px;width:36px;height:27px;background:#545454;"></div>
<svg style="position:absolute;left:2288px;top:1734px;" width="30" height="20" viewBox="0 0 30 20"><path d="M3 10h24M8 5l-5 5 5 5M22 5l5 5-5 5" fill="none" stroke="#e0e0e0" stroke-width="2"/></svg>
<div style="left:2338px;top:1126px;width:39px;height:631px;background:#252525;"></div>
<div style="left:2338px;top:1138px;width:37px;height:80px;background:#464646;border-radius:0 8px 8px 0;"></div>
<div style="left:2338px;top:1230px;width:37px;height:73px;background:#2e2e2e;border-radius:0 8px 8px 0;"></div>
<div style="left:2338px;top:1316px;width:37px;height:81px;background:#2e2e2e;border-radius:0 8px 8px 0;"></div>
<div style="left:2338px;top:1410px;width:37px;height:117px;background:#2e2e2e;border-radius:0 8px 8px 0;"></div>
<div class="tx" style="left:2287px;top:1158px;width:140px;height:40px;line-height:40px;text-align:center;font-size:22px;color:#e8e8e8;letter-spacing:0.7px;transform:rotate(-90deg);">Item</div>
<div class="tx" style="left:2287px;top:1246px;width:140px;height:40px;line-height:40px;text-align:center;font-size:22px;color:#d0d0d0;letter-spacing:0.7px;transform:rotate(-90deg);">Tool</div>
<div class="tx" style="left:2287px;top:1336px;width:140px;height:40px;line-height:40px;text-align:center;font-size:22px;color:#d0d0d0;letter-spacing:0.7px;transform:rotate(-90deg);">View</div>
<div class="tx" style="left:2287px;top:1448px;width:140px;height:40px;line-height:40px;text-align:center;font-size:22px;color:#d0d0d0;letter-spacing:0.7px;transform:rotate(-90deg);">Options</div>
<div style="left:2px;top:1764px;width:2876px;height:34px;background:#2e2e2e;border-radius:0 0 18px 18px;"></div>
<svg style="position:absolute;left:22px;top:1765px;" width="26" height="32" viewBox="0 0 26 32"><rect x="2" y="2" width="20" height="28" rx="6" fill="none" stroke="#a8a8a8" stroke-width="2"/><path d="M12 2v12H2V8a6 6 0 0 1 6-6z" fill="#a8a8a8"/></svg>
<div class="tx" style="left:68px;top:1759.0px;height:40px;line-height:40px;font-size:22px;color:#b4b4b4;letter-spacing:0.7px;">Select</div>
<svg style="position:absolute;left:561px;top:1765px;" width="26" height="32" viewBox="0 0 26 32"><rect x="2" y="2" width="20" height="28" rx="6" fill="none" stroke="#a8a8a8" stroke-width="2"/><rect x="9" y="6" width="6" height="10" rx="2" fill="#a8a8a8"/></svg>
<svg style="position:absolute;left:1100px;top:1765px;" width="26" height="32" viewBox="0 0 26 32"><rect x="2" y="2" width="20" height="28" rx="6" fill="none" stroke="#a8a8a8" stroke-width="2"/><path d="M12 2v12h10V8a6 6 0 0 0-6-6z" fill="#a8a8a8"/></svg>
<div class="tx" style="left:846px;top:1759.0px;height:40px;line-height:40px;font-size:22px;color:#b4b4b4;letter-spacing:1.0px;width:2000px;text-align:right;">Collection | 1.0-sample | Verts:405,227 | Faces:810,435 | Tris:810,436 | Objects:1/4 | 2.90.1</div>
</body></html>
